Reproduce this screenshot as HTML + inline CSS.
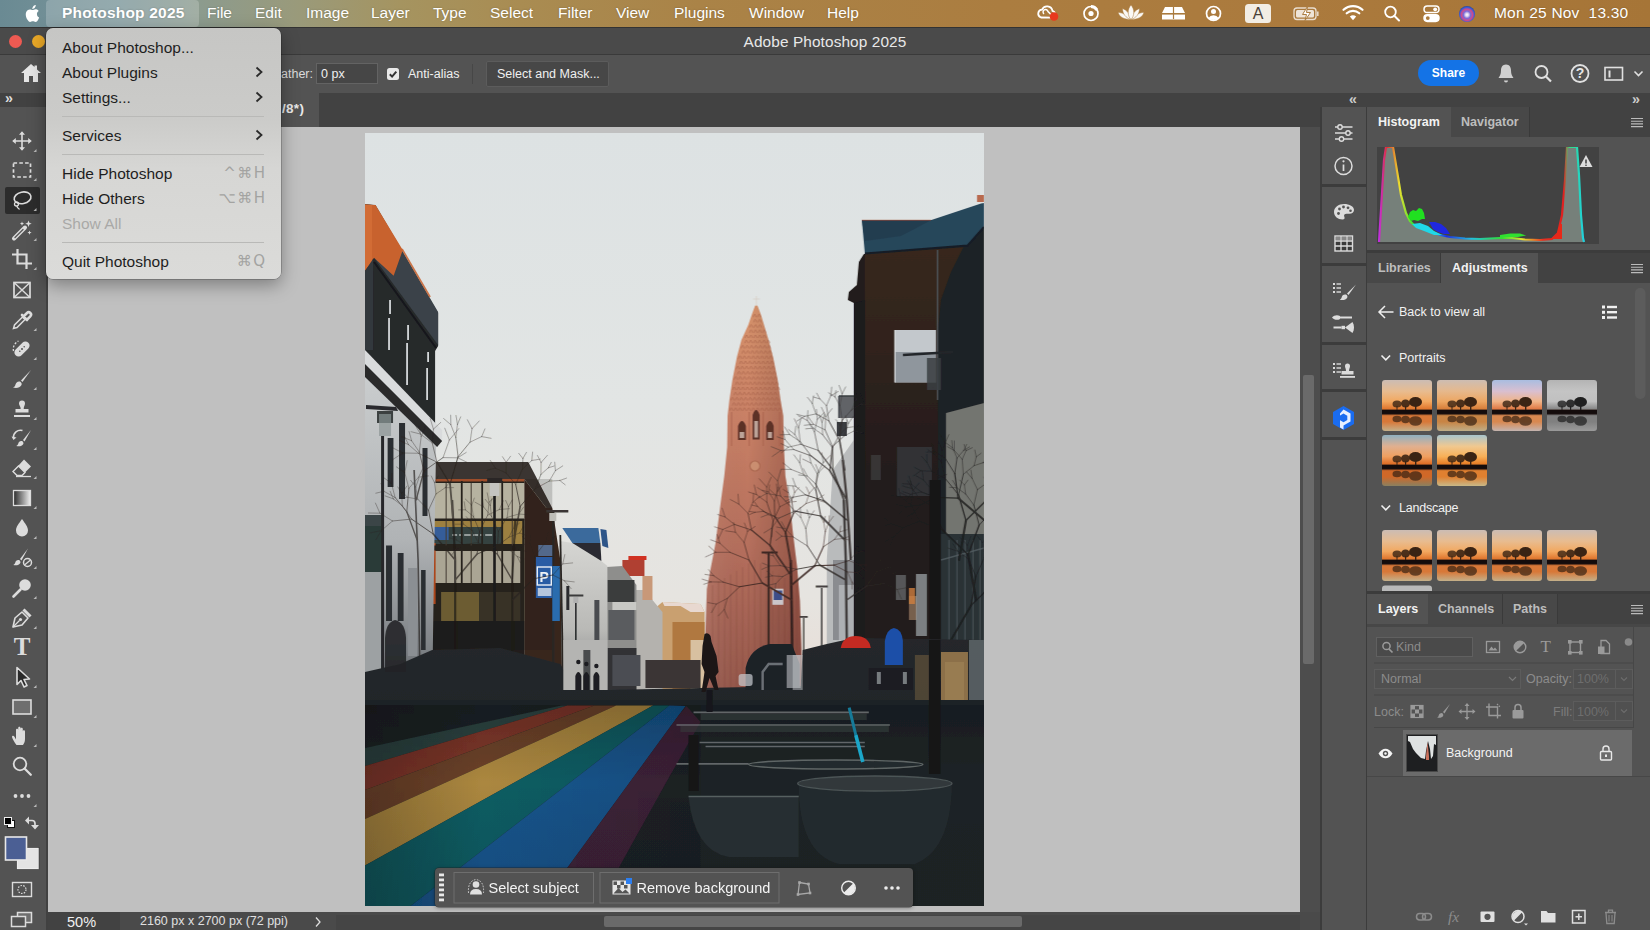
<!DOCTYPE html>
<html lang="en">
<head>
<meta charset="utf-8">
<title>Adobe Photoshop 2025</title>
<style>
*{box-sizing:border-box;margin:0;padding:0}
html,body{width:1650px;height:930px;overflow:hidden;background:#444;font-family:"Liberation Sans","DejaVu Sans",sans-serif;color:#e8e8e8}
.abs{position:absolute}
#menubar{position:absolute;left:0;top:0;width:1650px;height:28px;background:linear-gradient(90deg,#6a8a93 0px,#7b969a 120px,#8c9b8e 200px,#9a9a7a 300px,#a59460 400px,#a98c52 520px,#aa8347 700px,#ab7d40 1000px,#ab7a3d 1300px,#a67537 1650px);}
#menubar .mi{position:absolute;top:0;height:27px;line-height:26px;font-size:15.5px;color:#fff;white-space:nowrap;text-shadow:0 0 2px rgba(0,0,0,.25)}
#titlebar{position:absolute;left:0;top:27px;width:1650px;height:28px;background:#4a4a4a;border-top:1px solid #333;border-bottom:1px solid #3a3a3a}
#titlebar .t{position:absolute;left:0;width:1650px;top:5px;text-align:center;font-size:15.400px;color:#e8e8e8;letter-spacing:.1px}
#optbar{position:absolute;left:0;top:55px;width:1650px;height:38px;background:#535353}
#tabbar{position:absolute;left:0;top:93px;width:1650px;height:34px;background:#424242}
#toolbar{position:absolute;left:0;top:93px;width:48px;height:837px;background:#535353;border-right:2px solid #414141}
#canvas{position:absolute;left:48px;top:127px;width:1252px;height:786px;background:#c0c0c0}
#status{position:absolute;left:46px;top:912px;width:1274px;height:18px;background:#4a4a4a}
#vscroll{position:absolute;left:1300px;top:127px;width:20px;height:786px;background:#4d4d4d}
#rightbg{position:absolute;left:1320px;top:93px;width:330px;height:837px;background:#3c3c3c}

#menubar .mi.b{font-weight:bold;letter-spacing:.2px}
.mhl{position:absolute;left:46px;top:0;width:153px;height:27px;border-radius:4px;background:rgba(255,255,255,.2)}

#dd{position:absolute;left:46px;top:28px;width:234.500px;height:251px;border-radius:7px;background:linear-gradient(180deg,#c6c6c4 0,#cbcbc9 90px,#d6d6d4 140px,#dbdbd9 251px);box-shadow:0 0 0 .5px rgba(0,0,0,.35),0 6px 18px rgba(0,0,0,.35);z-index:50}
#dd .sc{font-family:"DejaVu Sans","Liberation Sans",sans-serif}

#ctb{position:absolute;left:434.500px;top:868px;width:478px;height:39px;background:#535353;border-radius:4px;box-shadow:0 0 0 .5px rgba(30,30,30,.6),0 1px 4px rgba(0,0,0,.35);z-index:4}
.txt{position:absolute;white-space:nowrap}
</style>
</head>
<body>

<div id="menubar">
<div class="mhl"></div>
<svg class="abs" style="left:23px;top:3px" width="17" height="21" viewBox="0 0 17 21"><path fill="#fff" d="M13.9 11.1c0-2.1 1.7-3.1 1.8-3.2-1-1.4-2.500-1.600-3-1.600-1.300-.1-2.500.8-3.100.8-.7 0-1.700-.7-2.700-.7C5.500 6.400 4.200 7.200 3.500 8.400c-1.500 2.500-.4 6.300 1 8.400.7 1 1.500 2.100 2.600 2.100 1.100 0 1.500-.7 2.700-.7 1.300 0 1.600.7 2.700.7 1.100 0 1.900-1 2.500-2 .8-1.200 1.100-2.300 1.100-2.300-.1-.1-2.200-.9-2.200-3.500zM11.800 4.800c.6-.7 1-1.700.9-2.700-.9 0-1.900.6-2.500 1.300-.5.600-1 1.600-.9 2.600 1 .1 1.900-.5 2.500-1.200z"/></svg>
<div class="mi b" style="left:62px">Photoshop 2025</div>
<div class="mi" style="left:207px">File</div>
<div class="mi" style="left:255px">Edit</div>
<div class="mi" style="left:306px">Image</div>
<div class="mi" style="left:371px">Layer</div>
<div class="mi" style="left:433px">Type</div>
<div class="mi" style="left:490px">Select</div>
<div class="mi" style="left:558px">Filter</div>
<div class="mi" style="left:616px">View</div>
<div class="mi" style="left:674px">Plugins</div>
<div class="mi" style="left:749px">Window</div>
<div class="mi" style="left:827px">Help</div>
<div class="mi" style="left:1494px;letter-spacing:.2px">Mon 25 Nov&nbsp; 13.30</div>
<svg class="abs" style="left:1030px;top:0" width="460" height="27" viewBox="1030 0 460 27" fill="none" stroke="#fff" stroke-width="1.6">
<!-- creative cloud -->
<path d="M1041 17.500a4 4 0 0 1 1-7.800 5.500 5.500 0 0 1 10.500 1.200 3.600 3.600 0 0 1 0 6.800z" stroke-width="1.800"/>
<path d="M1044 14a2.500 2.500 0 1 1 4-2.500l3 3" stroke-width="1.500"/>
<circle cx="1054" cy="16.500" r="4.300" fill="#e8391d" stroke="none"/>
<!-- disc -->
<circle cx="1091" cy="13.500" r="7" stroke-width="1.700"/><circle cx="1091" cy="13.500" r="2.600" fill="#fff" stroke="none"/><path d="M1091 6.500a7 7 0 0 1 6 3.500" stroke-width="3"/>
<!-- lotus -->
<g fill="#fff" stroke="#ab7c3f" stroke-width=".5" opacity=".95"><path d="M1131 19.500c-7 0-11.500-2.500-13-7 4 0 8 1.500 13 7z"/><path d="M1131 19.500c7 0 11.500-2.500 13-7-4 0-8 1.500-13 7z"/><path d="M1131 19.500c-5-1.500-8.500-5.500-8.500-11 4 1.500 7.500 5 8.500 11z"/><path d="M1131 19.500c5-1.500 8.500-5.500 8.500-11-4 1.500-7.500 5-8.500 11z"/><path d="M1131 19.500c-3.500-3.500-4-10 0-14.500 4 4.500 3.500 11 0 14.500z"/></g>
<!-- mattress -->
<path d="M1165 7h17l3 6h-23zM1162 14.500h23v5h-23z" fill="#fff" stroke="none"/><path d="M1173.500 7v12" stroke="#ab7c3f" stroke-width="1.200"/><path d="M1162 13.700h23" stroke="#ab7c3f" stroke-width="1"/>
<!-- user -->
<circle cx="1213.500" cy="13.500" r="7" stroke-width="1.700"/><circle cx="1213.500" cy="11.500" r="2.500" fill="#fff" stroke="none"/><path d="M1208.500 18a5.500 4.500 0 0 1 10 0a7 7 0 0 1-10 0z" fill="#fff" stroke="none"/>
<!-- A -->
<rect x="1245" y="4" width="26" height="19" rx="3.500" fill="#f2ede4" stroke="none"/>
<!-- battery -->
<rect x="1294" y="8" width="22" height="11.500" rx="3" stroke-width="1.300" opacity=".75"/><rect x="1296" y="10" width="18" height="7.500" rx="1.500" fill="#fff" stroke="none" opacity=".8"/><path d="M1317.800 11.500v4.500" stroke-width="1.600" opacity=".7"/><path d="M1307.500 6.500l-5 8h4l-1.500 6 5.500-8h-4z" fill="#fff" stroke="#ab7c3f" stroke-width="1"/>
<!-- wifi -->
<path d="M1343.500 9.800a14 14 0 0 1 19 0M1346.700 13.300a9.500 9.500 0 0 1 12.600 0" stroke-width="2.200" stroke-linecap="round"/><path d="M1349.800 16.600a5 5 0 0 1 6.400 0L1353 20.200z" fill="#fff" stroke="none"/>
<!-- search -->
<circle cx="1390.500" cy="12" r="5.300" stroke-width="1.800"/><path d="M1394.500 16l4.500 4.500" stroke-width="2" stroke-linecap="round"/>
<!-- control center -->
<rect x="1424" y="6" width="15" height="6.600" rx="3.300" stroke-width="1.500"/><circle cx="1435.200" cy="9.300" r="1.900" fill="#fff" stroke="none"/><rect x="1424" y="14.800" width="15" height="6.600" rx="3.300" fill="#fff" stroke="#fff" stroke-width="1.500"/><circle cx="1427.800" cy="18.100" r="1.900" fill="#ab7c3f" stroke="none"/>
</svg>
<div class="abs" style="left:1459px;top:5.500px;width:16px;height:16px;border-radius:50%;background:radial-gradient(circle at 50% 55%,#fff 0,#d9d0ee 14%,#7b6ad8 30%,#d04a8a 48%,#3b5bd8 62%,#263a72 80%,#3a4a5a 100%)"></div>
<div class="abs" style="left:1245px;top:4px;width:26px;height:19px;line-height:19.500px;text-align:center;font-size:16px;font-weight:normal;color:#4a4036">A</div>
</div>


<div id="titlebar"><div class="t">Adobe Photoshop 2025</div>
<div class="abs" style="left:8.500px;top:7px;width:13px;height:13px;border-radius:50%;background:#ee5a52"></div>
<div class="abs" style="left:31.500px;top:7px;width:13px;height:13px;border-radius:50%;background:#e9a827"></div>
</div>
<div id="optbar">
<svg class="abs" style="left:20px;top:8px" width="22" height="20" viewBox="0 0 22 20"><path fill="#e6e6e6" d="M11 1L1 10h3v9h5v-6h4v6h5v-9h3l-4-3.600V2.500h-2.500v1.600z"/></svg>
<div class="txt" style="left:281px;top:11.500px;font-size:12.500px;color:#dcdcdc">ather:</div>
<div class="abs" style="left:316px;top:8px;width:62px;height:21px;background:#464646;border:1px solid #636363"></div>
<div class="txt" style="left:321px;top:11.500px;font-size:12.500px;color:#f0f0f0">0 px</div>
<div class="abs" style="left:386.500px;top:12.500px;width:12px;height:12px;border-radius:2.500px;background:#e9e9e9"></div>
<svg class="abs" style="left:386.500px;top:12.500px" width="12" height="12" viewBox="0 0 12 12"><path d="M2.800 6.200l2.300 2.400 4.200-5" fill="none" stroke="#333" stroke-width="2"/></svg>
<div class="txt" style="left:408px;top:11.500px;font-size:12.500px;color:#f0f0f0">Anti-alias</div>
<div class="abs" style="left:472px;top:9px;width:1px;height:20px;background:#474747"></div>
<div class="abs" style="left:486px;top:6px;width:123px;height:26px;background:#474747;border:1px solid #5c5c5c;border-radius:2px"></div>
<div class="txt" style="left:497px;top:11.500px;font-size:12.500px;color:#f0f0f0">Select and Mask...</div>
<div class="abs" style="left:1418px;top:5px;width:61px;height:26px;border-radius:13px;background:#1473e6"></div>
<div class="txt" style="left:1418px;top:10.500px;width:61px;text-align:center;font-size:12px;font-weight:bold;color:#fff">Share</div>
<svg class="abs" style="left:1490px;top:0" width="160" height="38" viewBox="1490 55 160 38" fill="none" stroke="#e0e0e0" stroke-width="1.800">
<path d="M1506 64.500c-3.500 0-5 2.800-5 6 0 4-1.200 5.500-2.500 7.500h15c-1.300-2-2.500-3.500-2.500-7.500 0-3.200-1.500-6-5-6z" fill="#d0d0d0" stroke="none"/><path d="M1504 80.500a2 2 0 0 0 4 0z" fill="#d0d0d0" stroke="none"/>
<circle cx="1541.500" cy="72" r="6"/><path d="M1546 76.500l5 5" stroke-width="2.200"/>
<circle cx="1580" cy="73.500" r="8.500"/>
<rect x="1605" y="67.500" width="17.500" height="12.500" stroke-width="1.600"/><path d="M1609.500 70.500v7" stroke-width="2"/>
<path d="M1634.500 71.500l4 4 4-4" stroke-width="1.600"/>
</svg>
<div class="txt" style="left:1575px;top:10px;width:10px;text-align:center;font-size:14px;font-weight:bold;color:#e6e6e6">?</div>
</div>


<div id="tabbar">
<div class="abs" style="left:46px;top:0;width:273px;height:34px;background:#535353"></div>
<div class="txt" style="left:282px;top:8px;font-size:13.500px;font-weight:bold;color:#e8e8e8;letter-spacing:.3px">/8*)</div>
</div>

<div id="canvas"></div>
<!--PHOTO--><svg class="abs" style="left:365px;top:133px" width="619" height="773" viewBox="365 133 618 773" preserveAspectRatio="none">
<defs>
<linearGradient id="sky" x1="0" y1="0" x2="0" y2="1"><stop offset="0" stop-color="#dde2e3"/><stop offset=".35" stop-color="#e2e5e4"/><stop offset=".6" stop-color="#e6e4e0"/><stop offset=".72" stop-color="#e8ddd6"/><stop offset="1" stop-color="#e8ddd6"/></linearGradient>
<linearGradient id="ch" x1="0" y1="305" x2="0" y2="690" gradientUnits="userSpaceOnUse"><stop offset="0" stop-color="#d8946c"/><stop offset=".3" stop-color="#c98066"/><stop offset=".65" stop-color="#b46e5c"/><stop offset="1" stop-color="#96584c"/></linearGradient>
<linearGradient id="chs" x1="704" y1="0" x2="800" y2="0" gradientUnits="userSpaceOnUse"><stop offset="0" stop-color="#fff" stop-opacity=".08"/><stop offset=".45" stop-color="#000" stop-opacity="0"/><stop offset="1" stop-color="#300" stop-opacity=".22"/></linearGradient>
<linearGradient id="wallL" x1="0" y1="380" x2="0" y2="700" gradientUnits="userSpaceOnUse"><stop offset="0" stop-color="#c9cccd"/><stop offset=".5" stop-color="#b0b3b5"/><stop offset=".85" stop-color="#7c8084"/><stop offset="1" stop-color="#44484c"/></linearGradient>
<linearGradient id="wallW" x1="0" y1="540" x2="0" y2="690" gradientUnits="userSpaceOnUse"><stop offset="0" stop-color="#d6d6d3"/><stop offset=".6" stop-color="#b9b9b6"/><stop offset="1" stop-color="#7e8082"/></linearGradient>
<linearGradient id="dark" x1="0" y1="640" x2="0" y2="906" gradientUnits="userSpaceOnUse"><stop offset="0" stop-color="#25282b"/><stop offset="1" stop-color="#171c20"/></linearGradient>
<linearGradient id="shade" x1="0" y1="700" x2="0" y2="906" gradientUnits="userSpaceOnUse"><stop offset="0" stop-color="#000" stop-opacity=".18"/><stop offset=".4" stop-color="#000" stop-opacity="0"/><stop offset="1" stop-color="#001018" stop-opacity=".12"/></linearGradient>
</defs>
<filter id="soft" x="365" y="133" width="618" height="773" filterUnits="userSpaceOnUse"><feGaussianBlur stdDeviation=".55"/></filter>
<rect x="365" y="133" width="618" height="773" fill="url(#sky)" />
<g filter="url(#soft)">
<polygon points="754.5,305.5 751,315 747.6,325 740.8,340 736.3,357 731.8,380 728.8,400 727,416 726.6,447 723.7,476 719.4,508 715,543 710.6,566 706.3,589 704.3,650 703,692 801,692 800.7,650 799.2,601 796.3,566 792,531 789,502 784.7,476 783.2,447 782.6,416 779.9,400 777,380 772.4,357 767.9,340 763.4,325 760.4,315 756.8,305.5" fill="url(#ch)" />
<polygon points="754.5,305.5 751,315 747.6,325 740.8,340 736.3,357 731.8,380 728.8,400 727,416 726.6,447 723.7,476 719.4,508 715,543 710.6,566 706.3,589 704.3,650 703,692 801,692 800.7,650 799.2,601 796.3,566 792,531 789,502 784.7,476 783.2,447 782.6,416 779.9,400 777,380 772.4,357 767.9,340 763.4,325 760.4,315 756.8,305.5" fill="url(#chs)" />
<path d="M712 585.2 L712 690" fill="none" stroke="#7a4238" stroke-width="0.8" opacity=".35"/>
<path d="M718 581.6 L718 690" fill="none" stroke="#7a4238" stroke-width="0.8" opacity=".35"/>
<path d="M724 578 L724 690" fill="none" stroke="#7a4238" stroke-width="0.8" opacity=".35"/>
<path d="M730 574.4 L730 690" fill="none" stroke="#7a4238" stroke-width="0.8" opacity=".35"/>
<path d="M736 570.8 L736 690" fill="none" stroke="#7a4238" stroke-width="0.8" opacity=".35"/>
<path d="M742 567.2 L742 690" fill="none" stroke="#7a4238" stroke-width="0.8" opacity=".35"/>
<path d="M748 563.6 L748 690" fill="none" stroke="#7a4238" stroke-width="0.8" opacity=".35"/>
<path d="M754 560 L754 690" fill="none" stroke="#7a4238" stroke-width="0.8" opacity=".35"/>
<path d="M760 563.6 L760 690" fill="none" stroke="#7a4238" stroke-width="0.8" opacity=".35"/>
<path d="M766 567.2 L766 690" fill="none" stroke="#7a4238" stroke-width="0.8" opacity=".35"/>
<path d="M772 570.8 L772 690" fill="none" stroke="#7a4238" stroke-width="0.8" opacity=".35"/>
<path d="M778 574.4 L778 690" fill="none" stroke="#7a4238" stroke-width="0.8" opacity=".35"/>
<path d="M784 578 L784 690" fill="none" stroke="#7a4238" stroke-width="0.8" opacity=".35"/>
<path d="M790 581.6 L790 690" fill="none" stroke="#7a4238" stroke-width="0.8" opacity=".35"/>
<path d="M796 585.2 L796 690" fill="none" stroke="#7a4238" stroke-width="0.8" opacity=".35"/>
<path d="M752.6 317.2q1.500-6 3 0" fill="none" stroke="#9c5640" stroke-width=".9" opacity=".5"/>
<path d="M757.0 317.2q1.500-6 3 0" fill="none" stroke="#9c5640" stroke-width=".9" opacity=".5"/>
<path d="M753.0 322.4q1.500-6 3 0" fill="none" stroke="#9c5640" stroke-width=".9" opacity=".5"/>
<path d="M757.4 322.4q1.500-6 3 0" fill="none" stroke="#9c5640" stroke-width=".9" opacity=".5"/>
<path d="M749.0 327.6q1.500-6 3 0" fill="none" stroke="#9c5640" stroke-width=".9" opacity=".5"/>
<path d="M753.4 327.6q1.500-6 3 0" fill="none" stroke="#9c5640" stroke-width=".9" opacity=".5"/>
<path d="M757.8 327.6q1.500-6 3 0" fill="none" stroke="#9c5640" stroke-width=".9" opacity=".5"/>
<path d="M748.9 332.8q1.500-6 3 0" fill="none" stroke="#9c5640" stroke-width=".9" opacity=".5"/>
<path d="M753.3 332.8q1.500-6 3 0" fill="none" stroke="#9c5640" stroke-width=".9" opacity=".5"/>
<path d="M757.7 332.8q1.500-6 3 0" fill="none" stroke="#9c5640" stroke-width=".9" opacity=".5"/>
<path d="M762.1 332.8q1.500-6 3 0" fill="none" stroke="#9c5640" stroke-width=".9" opacity=".5"/>
<path d="M744.4 338.0q1.500-6 3 0" fill="none" stroke="#9c5640" stroke-width=".9" opacity=".5"/>
<path d="M748.8 338.0q1.500-6 3 0" fill="none" stroke="#9c5640" stroke-width=".9" opacity=".5"/>
<path d="M753.2 338.0q1.500-6 3 0" fill="none" stroke="#9c5640" stroke-width=".9" opacity=".5"/>
<path d="M757.6 338.0q1.500-6 3 0" fill="none" stroke="#9c5640" stroke-width=".9" opacity=".5"/>
<path d="M762.0 338.0q1.500-6 3 0" fill="none" stroke="#9c5640" stroke-width=".9" opacity=".5"/>
<path d="M744.2 343.2q1.500-6 3 0" fill="none" stroke="#9c5640" stroke-width=".9" opacity=".5"/>
<path d="M748.6 343.2q1.500-6 3 0" fill="none" stroke="#9c5640" stroke-width=".9" opacity=".5"/>
<path d="M753.0 343.2q1.500-6 3 0" fill="none" stroke="#9c5640" stroke-width=".9" opacity=".5"/>
<path d="M757.4 343.2q1.500-6 3 0" fill="none" stroke="#9c5640" stroke-width=".9" opacity=".5"/>
<path d="M761.8 343.2q1.500-6 3 0" fill="none" stroke="#9c5640" stroke-width=".9" opacity=".5"/>
<path d="M766.2 343.2q1.500-6 3 0" fill="none" stroke="#9c5640" stroke-width=".9" opacity=".5"/>
<path d="M740.6 348.4q1.500-6 3 0" fill="none" stroke="#9c5640" stroke-width=".9" opacity=".5"/>
<path d="M745.0 348.4q1.500-6 3 0" fill="none" stroke="#9c5640" stroke-width=".9" opacity=".5"/>
<path d="M749.4 348.4q1.500-6 3 0" fill="none" stroke="#9c5640" stroke-width=".9" opacity=".5"/>
<path d="M753.8 348.4q1.500-6 3 0" fill="none" stroke="#9c5640" stroke-width=".9" opacity=".5"/>
<path d="M758.2 348.4q1.500-6 3 0" fill="none" stroke="#9c5640" stroke-width=".9" opacity=".5"/>
<path d="M762.6 348.4q1.500-6 3 0" fill="none" stroke="#9c5640" stroke-width=".9" opacity=".5"/>
<path d="M767.0 348.4q1.500-6 3 0" fill="none" stroke="#9c5640" stroke-width=".9" opacity=".5"/>
<path d="M741.4 353.6q1.500-6 3 0" fill="none" stroke="#9c5640" stroke-width=".9" opacity=".5"/>
<path d="M745.8 353.6q1.500-6 3 0" fill="none" stroke="#9c5640" stroke-width=".9" opacity=".5"/>
<path d="M750.2 353.6q1.500-6 3 0" fill="none" stroke="#9c5640" stroke-width=".9" opacity=".5"/>
<path d="M754.6 353.6q1.500-6 3 0" fill="none" stroke="#9c5640" stroke-width=".9" opacity=".5"/>
<path d="M759.0 353.6q1.500-6 3 0" fill="none" stroke="#9c5640" stroke-width=".9" opacity=".5"/>
<path d="M763.4 353.6q1.500-6 3 0" fill="none" stroke="#9c5640" stroke-width=".9" opacity=".5"/>
<path d="M767.8 353.6q1.500-6 3 0" fill="none" stroke="#9c5640" stroke-width=".9" opacity=".5"/>
<path d="M737.9 358.8q1.500-6 3 0" fill="none" stroke="#9c5640" stroke-width=".9" opacity=".5"/>
<path d="M742.3 358.8q1.500-6 3 0" fill="none" stroke="#9c5640" stroke-width=".9" opacity=".5"/>
<path d="M746.7 358.8q1.500-6 3 0" fill="none" stroke="#9c5640" stroke-width=".9" opacity=".5"/>
<path d="M751.1 358.8q1.500-6 3 0" fill="none" stroke="#9c5640" stroke-width=".9" opacity=".5"/>
<path d="M755.5 358.8q1.500-6 3 0" fill="none" stroke="#9c5640" stroke-width=".9" opacity=".5"/>
<path d="M759.9 358.8q1.500-6 3 0" fill="none" stroke="#9c5640" stroke-width=".9" opacity=".5"/>
<path d="M764.3 358.8q1.500-6 3 0" fill="none" stroke="#9c5640" stroke-width=".9" opacity=".5"/>
<path d="M768.7 358.8q1.500-6 3 0" fill="none" stroke="#9c5640" stroke-width=".9" opacity=".5"/>
<path d="M739.0 364.0q1.500-6 3 0" fill="none" stroke="#9c5640" stroke-width=".9" opacity=".5"/>
<path d="M743.4 364.0q1.500-6 3 0" fill="none" stroke="#9c5640" stroke-width=".9" opacity=".5"/>
<path d="M747.8 364.0q1.500-6 3 0" fill="none" stroke="#9c5640" stroke-width=".9" opacity=".5"/>
<path d="M752.2 364.0q1.500-6 3 0" fill="none" stroke="#9c5640" stroke-width=".9" opacity=".5"/>
<path d="M756.6 364.0q1.500-6 3 0" fill="none" stroke="#9c5640" stroke-width=".9" opacity=".5"/>
<path d="M761.0 364.0q1.500-6 3 0" fill="none" stroke="#9c5640" stroke-width=".9" opacity=".5"/>
<path d="M765.4 364.0q1.500-6 3 0" fill="none" stroke="#9c5640" stroke-width=".9" opacity=".5"/>
<path d="M769.8 364.0q1.500-6 3 0" fill="none" stroke="#9c5640" stroke-width=".9" opacity=".5"/>
<path d="M735.7 369.2q1.500-6 3 0" fill="none" stroke="#9c5640" stroke-width=".9" opacity=".5"/>
<path d="M740.1 369.2q1.500-6 3 0" fill="none" stroke="#9c5640" stroke-width=".9" opacity=".5"/>
<path d="M744.5 369.2q1.500-6 3 0" fill="none" stroke="#9c5640" stroke-width=".9" opacity=".5"/>
<path d="M748.9 369.2q1.500-6 3 0" fill="none" stroke="#9c5640" stroke-width=".9" opacity=".5"/>
<path d="M753.3 369.2q1.500-6 3 0" fill="none" stroke="#9c5640" stroke-width=".9" opacity=".5"/>
<path d="M757.7 369.2q1.500-6 3 0" fill="none" stroke="#9c5640" stroke-width=".9" opacity=".5"/>
<path d="M762.1 369.2q1.500-6 3 0" fill="none" stroke="#9c5640" stroke-width=".9" opacity=".5"/>
<path d="M766.5 369.2q1.500-6 3 0" fill="none" stroke="#9c5640" stroke-width=".9" opacity=".5"/>
<path d="M770.9 369.2q1.500-6 3 0" fill="none" stroke="#9c5640" stroke-width=".9" opacity=".5"/>
<path d="M736.9 374.4q1.500-6 3 0" fill="none" stroke="#9c5640" stroke-width=".9" opacity=".5"/>
<path d="M741.3 374.4q1.500-6 3 0" fill="none" stroke="#9c5640" stroke-width=".9" opacity=".5"/>
<path d="M745.7 374.4q1.500-6 3 0" fill="none" stroke="#9c5640" stroke-width=".9" opacity=".5"/>
<path d="M750.1 374.4q1.500-6 3 0" fill="none" stroke="#9c5640" stroke-width=".9" opacity=".5"/>
<path d="M754.5 374.4q1.500-6 3 0" fill="none" stroke="#9c5640" stroke-width=".9" opacity=".5"/>
<path d="M758.9 374.4q1.500-6 3 0" fill="none" stroke="#9c5640" stroke-width=".9" opacity=".5"/>
<path d="M763.3 374.4q1.500-6 3 0" fill="none" stroke="#9c5640" stroke-width=".9" opacity=".5"/>
<path d="M767.7 374.4q1.500-6 3 0" fill="none" stroke="#9c5640" stroke-width=".9" opacity=".5"/>
<path d="M772.1 374.4q1.500-6 3 0" fill="none" stroke="#9c5640" stroke-width=".9" opacity=".5"/>
<path d="M733.7 379.6q1.500-6 3 0" fill="none" stroke="#9c5640" stroke-width=".9" opacity=".5"/>
<path d="M738.1 379.6q1.500-6 3 0" fill="none" stroke="#9c5640" stroke-width=".9" opacity=".5"/>
<path d="M742.5 379.6q1.500-6 3 0" fill="none" stroke="#9c5640" stroke-width=".9" opacity=".5"/>
<path d="M746.9 379.6q1.500-6 3 0" fill="none" stroke="#9c5640" stroke-width=".9" opacity=".5"/>
<path d="M751.3 379.6q1.500-6 3 0" fill="none" stroke="#9c5640" stroke-width=".9" opacity=".5"/>
<path d="M755.7 379.6q1.500-6 3 0" fill="none" stroke="#9c5640" stroke-width=".9" opacity=".5"/>
<path d="M760.1 379.6q1.500-6 3 0" fill="none" stroke="#9c5640" stroke-width=".9" opacity=".5"/>
<path d="M764.5 379.6q1.500-6 3 0" fill="none" stroke="#9c5640" stroke-width=".9" opacity=".5"/>
<path d="M768.9 379.6q1.500-6 3 0" fill="none" stroke="#9c5640" stroke-width=".9" opacity=".5"/>
<path d="M773.3 379.6q1.500-6 3 0" fill="none" stroke="#9c5640" stroke-width=".9" opacity=".5"/>
<path d="M735.0 384.8q1.500-6 3 0" fill="none" stroke="#9c5640" stroke-width=".9" opacity=".5"/>
<path d="M739.4 384.8q1.500-6 3 0" fill="none" stroke="#9c5640" stroke-width=".9" opacity=".5"/>
<path d="M743.8 384.8q1.500-6 3 0" fill="none" stroke="#9c5640" stroke-width=".9" opacity=".5"/>
<path d="M748.2 384.8q1.500-6 3 0" fill="none" stroke="#9c5640" stroke-width=".9" opacity=".5"/>
<path d="M752.6 384.8q1.500-6 3 0" fill="none" stroke="#9c5640" stroke-width=".9" opacity=".5"/>
<path d="M757.0 384.8q1.500-6 3 0" fill="none" stroke="#9c5640" stroke-width=".9" opacity=".5"/>
<path d="M761.4 384.8q1.500-6 3 0" fill="none" stroke="#9c5640" stroke-width=".9" opacity=".5"/>
<path d="M765.8 384.8q1.500-6 3 0" fill="none" stroke="#9c5640" stroke-width=".9" opacity=".5"/>
<path d="M770.2 384.8q1.500-6 3 0" fill="none" stroke="#9c5640" stroke-width=".9" opacity=".5"/>
<path d="M774.6 384.8q1.500-6 3 0" fill="none" stroke="#9c5640" stroke-width=".9" opacity=".5"/>
<path d="M732.0 390.0q1.500-6 3 0" fill="none" stroke="#9c5640" stroke-width=".9" opacity=".5"/>
<path d="M736.4 390.0q1.500-6 3 0" fill="none" stroke="#9c5640" stroke-width=".9" opacity=".5"/>
<path d="M740.8 390.0q1.500-6 3 0" fill="none" stroke="#9c5640" stroke-width=".9" opacity=".5"/>
<path d="M745.2 390.0q1.500-6 3 0" fill="none" stroke="#9c5640" stroke-width=".9" opacity=".5"/>
<path d="M749.6 390.0q1.500-6 3 0" fill="none" stroke="#9c5640" stroke-width=".9" opacity=".5"/>
<path d="M754.0 390.0q1.500-6 3 0" fill="none" stroke="#9c5640" stroke-width=".9" opacity=".5"/>
<path d="M758.4 390.0q1.500-6 3 0" fill="none" stroke="#9c5640" stroke-width=".9" opacity=".5"/>
<path d="M762.8 390.0q1.500-6 3 0" fill="none" stroke="#9c5640" stroke-width=".9" opacity=".5"/>
<path d="M767.2 390.0q1.500-6 3 0" fill="none" stroke="#9c5640" stroke-width=".9" opacity=".5"/>
<path d="M771.6 390.0q1.500-6 3 0" fill="none" stroke="#9c5640" stroke-width=".9" opacity=".5"/>
<path d="M776.0 390.0q1.500-6 3 0" fill="none" stroke="#9c5640" stroke-width=".9" opacity=".5"/>
<path d="M733.4 395.2q1.500-6 3 0" fill="none" stroke="#9c5640" stroke-width=".9" opacity=".5"/>
<path d="M737.8 395.2q1.500-6 3 0" fill="none" stroke="#9c5640" stroke-width=".9" opacity=".5"/>
<path d="M742.2 395.2q1.500-6 3 0" fill="none" stroke="#9c5640" stroke-width=".9" opacity=".5"/>
<path d="M746.6 395.2q1.500-6 3 0" fill="none" stroke="#9c5640" stroke-width=".9" opacity=".5"/>
<path d="M751.0 395.2q1.500-6 3 0" fill="none" stroke="#9c5640" stroke-width=".9" opacity=".5"/>
<path d="M755.4 395.2q1.500-6 3 0" fill="none" stroke="#9c5640" stroke-width=".9" opacity=".5"/>
<path d="M759.8 395.2q1.500-6 3 0" fill="none" stroke="#9c5640" stroke-width=".9" opacity=".5"/>
<path d="M764.2 395.2q1.500-6 3 0" fill="none" stroke="#9c5640" stroke-width=".9" opacity=".5"/>
<path d="M768.6 395.2q1.500-6 3 0" fill="none" stroke="#9c5640" stroke-width=".9" opacity=".5"/>
<path d="M773.0 395.2q1.500-6 3 0" fill="none" stroke="#9c5640" stroke-width=".9" opacity=".5"/>
<path d="M730.4 400.4q1.500-6 3 0" fill="none" stroke="#9c5640" stroke-width=".9" opacity=".5"/>
<path d="M734.8 400.4q1.500-6 3 0" fill="none" stroke="#9c5640" stroke-width=".9" opacity=".5"/>
<path d="M739.2 400.4q1.500-6 3 0" fill="none" stroke="#9c5640" stroke-width=".9" opacity=".5"/>
<path d="M743.6 400.4q1.500-6 3 0" fill="none" stroke="#9c5640" stroke-width=".9" opacity=".5"/>
<path d="M748.0 400.4q1.500-6 3 0" fill="none" stroke="#9c5640" stroke-width=".9" opacity=".5"/>
<path d="M752.4 400.4q1.500-6 3 0" fill="none" stroke="#9c5640" stroke-width=".9" opacity=".5"/>
<path d="M756.8 400.4q1.500-6 3 0" fill="none" stroke="#9c5640" stroke-width=".9" opacity=".5"/>
<path d="M761.2 400.4q1.500-6 3 0" fill="none" stroke="#9c5640" stroke-width=".9" opacity=".5"/>
<path d="M765.6 400.4q1.500-6 3 0" fill="none" stroke="#9c5640" stroke-width=".9" opacity=".5"/>
<path d="M770.0 400.4q1.500-6 3 0" fill="none" stroke="#9c5640" stroke-width=".9" opacity=".5"/>
<path d="M774.4 400.4q1.500-6 3 0" fill="none" stroke="#9c5640" stroke-width=".9" opacity=".5"/>
<path d="M731.9 405.6q1.500-6 3 0" fill="none" stroke="#9c5640" stroke-width=".9" opacity=".5"/>
<path d="M736.3 405.6q1.500-6 3 0" fill="none" stroke="#9c5640" stroke-width=".9" opacity=".5"/>
<path d="M740.7 405.6q1.500-6 3 0" fill="none" stroke="#9c5640" stroke-width=".9" opacity=".5"/>
<path d="M745.1 405.6q1.500-6 3 0" fill="none" stroke="#9c5640" stroke-width=".9" opacity=".5"/>
<path d="M749.5 405.6q1.500-6 3 0" fill="none" stroke="#9c5640" stroke-width=".9" opacity=".5"/>
<path d="M753.9 405.6q1.500-6 3 0" fill="none" stroke="#9c5640" stroke-width=".9" opacity=".5"/>
<path d="M758.3 405.6q1.500-6 3 0" fill="none" stroke="#9c5640" stroke-width=".9" opacity=".5"/>
<path d="M762.7 405.6q1.500-6 3 0" fill="none" stroke="#9c5640" stroke-width=".9" opacity=".5"/>
<path d="M767.1 405.6q1.500-6 3 0" fill="none" stroke="#9c5640" stroke-width=".9" opacity=".5"/>
<path d="M771.5 405.6q1.500-6 3 0" fill="none" stroke="#9c5640" stroke-width=".9" opacity=".5"/>
<path d="M775.9 405.6q1.500-6 3 0" fill="none" stroke="#9c5640" stroke-width=".9" opacity=".5"/>
<path d="M729.1 410.8q1.500-6 3 0" fill="none" stroke="#9c5640" stroke-width=".9" opacity=".5"/>
<path d="M733.5 410.8q1.500-6 3 0" fill="none" stroke="#9c5640" stroke-width=".9" opacity=".5"/>
<path d="M737.9 410.8q1.500-6 3 0" fill="none" stroke="#9c5640" stroke-width=".9" opacity=".5"/>
<path d="M742.3 410.8q1.500-6 3 0" fill="none" stroke="#9c5640" stroke-width=".9" opacity=".5"/>
<path d="M746.7 410.8q1.500-6 3 0" fill="none" stroke="#9c5640" stroke-width=".9" opacity=".5"/>
<path d="M751.1 410.8q1.500-6 3 0" fill="none" stroke="#9c5640" stroke-width=".9" opacity=".5"/>
<path d="M755.5 410.8q1.500-6 3 0" fill="none" stroke="#9c5640" stroke-width=".9" opacity=".5"/>
<path d="M759.9 410.8q1.500-6 3 0" fill="none" stroke="#9c5640" stroke-width=".9" opacity=".5"/>
<path d="M764.3 410.8q1.500-6 3 0" fill="none" stroke="#9c5640" stroke-width=".9" opacity=".5"/>
<path d="M768.7 410.8q1.500-6 3 0" fill="none" stroke="#9c5640" stroke-width=".9" opacity=".5"/>
<path d="M773.1 410.8q1.500-6 3 0" fill="none" stroke="#9c5640" stroke-width=".9" opacity=".5"/>
<path d="M777.5 410.8q1.500-6 3 0" fill="none" stroke="#9c5640" stroke-width=".9" opacity=".5"/>
<path d="M737.4 440V426Q741.3499999999999 416 745.3 426V440z" fill="#5c3028"/>
<rect x="739" y="432" width="4.7" height="6" fill="#e6d4c8" opacity=".7"/>
<path d="M752 439.5V415Q755.5 405 759 415V439.5z" fill="#5c3028"/>
<rect x="753.6" y="421" width="3.8" height="16.5" fill="#e6d4c8" opacity=".7"/>
<path d="M765.6 440V426Q769.3 416 773 426V440z" fill="#5c3028"/>
<rect x="767.2" y="432" width="4.2" height="6" fill="#e6d4c8" opacity=".7"/>
<circle cx="754.300" cy="466" r="5" fill="#d09878" opacity=".7"/><circle cx="754.300" cy="466" r="5" fill="none" stroke="#a8644c" stroke-width="1.200" opacity=".8"/>
<path d="M731 412 L731 446" fill="none" stroke="#a8604c" stroke-width="1.4" opacity=".6"/>
<path d="M748.5 412 L748.5 446" fill="none" stroke="#a8604c" stroke-width="1.4" opacity=".6"/>
<path d="M762.5 412 L762.5 446" fill="none" stroke="#a8604c" stroke-width="1.4" opacity=".6"/>
<path d="M779 412 L779 446" fill="none" stroke="#a8604c" stroke-width="1.4" opacity=".6"/>
<path d="M748 690v-24q8-18 16 0v24z" fill="#8a4e44" opacity=".7"/>
<path d="M755.8 296 L755.8 306" fill="none" stroke="#d8d0c8" stroke-width="1" opacity=".8"/>
<path d="M752.5 299 L759 299" fill="none" stroke="#d8d0c8" stroke-width="1" opacity=".8"/>
<polygon points="662,602 700,604 704,612 704,690 650,690 650,612" fill="#c9a070" />
<polygon points="662,602 700,604 704,612 690,612 680,606 664,606" fill="#e8d8d0" />
<rect x="672" y="622" width="32" height="68" fill="#b07840" />
<rect x="690" y="640" width="14" height="50" fill="#d8c0a0" />
<polygon points="635,590 648,590 652,600 662,612 662,690 635,690" fill="#b4b2ae" />
<rect x="642" y="576" width="10" height="24" fill="#c89878" />
<rect x="622" y="560" width="22" height="16" fill="#b04030" />
<rect x="628" y="556" width="18" height="4" fill="#d03020" />
<polygon points="606,567 622,566 636,585 636,690 606,690" fill="#8e8e8c" />
<rect x="607" y="580" width="27" height="22" fill="#3a3c3e" />
<rect x="608" y="610" width="26" height="30" fill="#5a5c5e" />
<rect x="607" y="648" width="29" height="42" fill="#303236" />
<rect x="612" y="602" width="24" height="8" fill="#c8c8c4" />
<polygon points="560,541 572,543 601,561 607,566 607,692 558,692 558,548" fill="url(#wallW)" />
<polygon points="572,543 600,543 601,561" fill="#2a2c30" />
<polygon points="562,528 598,528 600,543 572,543" fill="#3b6a9c" />
<polygon points="600,529 606,530 608,548 602,546" fill="#2f5488" />
<rect x="566" y="586" width="3" height="24" fill="#2a2c2e" />
<rect x="594" y="600" width="5" height="60" fill="#4a4c50" />
<path d="M575.5 598 L575.5 690" fill="none" stroke="#2a2c2e" stroke-width="1.6" />
<rect x="568" y="594.5" width="15" height="2" fill="#3a3a3a" />
<rect x="573" y="597" width="5" height="6" fill="#b0b0b0" />
<rect x="430" y="479" width="94" height="221" fill="#2c2622" />
<polygon points="430,462 528,462 552,508 546,508 524,479 430,479" fill="#3b3531" />
<polygon points="524,479 546,508 552,508 560,560 562,700 524,700" fill="#38281f" />
<rect x="430" y="479" width="94" height="2.5" fill="#b85a30" />
<rect x="432" y="483" width="92" height="36" fill="#d5d1bd" />
<rect x="432" y="521" width="90" height="23" fill="#b7964c" />
<rect x="432.6" y="527" width="69.4" height="17" fill="#3b4c4a" />
<rect x="432.6" y="527" width="15.9" height="13" fill="#3a6cb4" />
<path d="M452 535 L495 535" fill="none" stroke="#c8d0d0" stroke-width="2.2" stroke-dasharray="5 2 3 2 7 2" opacity=".8"/>
<rect x="432" y="551" width="88" height="32" fill="#c6c2ae" />
<rect x="432" y="583" width="88" height="9" fill="#2a2420" />
<rect x="441" y="592" width="38" height="29" fill="#7d6a3a" />
<rect x="479" y="592" width="41" height="48" fill="#3e372e" />
<rect x="432" y="621" width="92" height="79" fill="#211f1d" />
<rect x="428" y="543" width="7.5" height="61" fill="#c8501e" />
<path d="M461.6 481 L461.6 592" fill="none" stroke="#2a2420" stroke-width="1.8" />
<path d="M482 481 L482 592" fill="none" stroke="#2a2420" stroke-width="1.8" />
<path d="M502 481 L502 592" fill="none" stroke="#2a2420" stroke-width="1.8" />
<path d="M446 483 L446 583" fill="none" stroke="#4a4238" stroke-width="1" />
<path d="M471 483 L471 583" fill="none" stroke="#4a4238" stroke-width="1" />
<path d="M512 483 L512 583" fill="none" stroke="#4a4238" stroke-width="1" />
<path d="M432 519.5 L524 519.5" fill="none" stroke="#2a2420" stroke-width="2.2" />
<path d="M432 548 L522 548" fill="none" stroke="#2a2420" stroke-width="5" />
<rect x="430" y="479" width="122" height="171" fill="#18120e" opacity=".16"/>
<path d="M494.3 495 L494.3 690" fill="none" stroke="#1e1c1c" stroke-width="2.6" />
<rect x="487" y="478" width="15" height="5" fill="#2a2828" />
<rect x="489.5" y="483" width="9.5" height="13" fill="#c4c4c0" />
<path d="M553 512 L553 690" fill="none" stroke="#2a2624" stroke-width="2.2" />
<rect x="546" y="510" width="22" height="2.5" fill="#3a3634" />
<rect x="549" y="513" width="7" height="8" fill="#bdbdb8" />
<path d="M560 535 L563 690" fill="none" stroke="#2a2624" stroke-width="1.8" />
<rect x="535.6" y="557" width="16.4" height="41" fill="#2c5ca4" />
<rect x="537" y="567" width="14" height="18" fill="#2c5ca4" stroke="#e8eef4" stroke-width="1.400"/>
<rect x="537.5" y="588" width="13.5" height="8" fill="#d8e0e8" opacity=".8"/>
<text x="544" y="582" text-anchor="middle" font-family="Liberation Sans, sans-serif" font-size="14" font-weight="bold" fill="#eef2f6">P</text>
<rect x="552" y="566" width="7.5" height="55" fill="#2a6cae" />
<rect x="538" y="545" width="14" height="11" fill="#5a7aa8" opacity=".8"/>
<polygon points="365,376 436,446 434,560 432,700 365,720" fill="url(#wallL)" />
<rect x="399" y="423" width="6" height="76" fill="#2b2d30" />
<rect x="422.4" y="448" width="5" height="68" fill="#2b2d30" />
<rect x="387.6" y="438" width="5.8" height="49" fill="#2b2d30" />
<rect x="397.7" y="553" width="5.8" height="68" fill="#2b2d30" />
<rect x="386" y="545.5" width="6" height="75.5" fill="#2b2d30" />
<rect x="421" y="570" width="4.5" height="80" fill="#2b2d30" />
<rect x="365" y="525" width="17" height="47" fill="#2b3b39" />
<rect x="365" y="515" width="19" height="11" fill="#3a4446" />
<rect x="365" y="572" width="16" height="128" fill="#9da1a3" />
<rect x="408" y="568" width="9" height="88" fill="#8b8f93" />
<polygon points="365,204 373,205 438,313 438,346 435,351 435,425 365,352" fill="#27292b" />
<polygon points="365,204.5 375.5,205 438,312 438,345 374,257.8 365,262" fill="#3a4248" />
<polygon points="365,204.5 375.5,205 402.7,250 393.6,275.8 374,257.8 365,271" fill="#c8622e" />
<polygon points="365,204.5 372,205 372,262 365,270" fill="#d26c36" />
<path d="M402 249 L430 297" fill="none" stroke="#c8622e" stroke-width="1.6" opacity=".85"/>
<polygon points="365,271 373,259 373,350 365,350" fill="#33393e" />
<path d="M390 300 L390 314" fill="none" stroke="#d4d8da" stroke-width="1.8" />
<path d="M389 318 L389 350" fill="none" stroke="#d4d8da" stroke-width="1.8" />
<path d="M408 325 L408 340" fill="none" stroke="#d4d8da" stroke-width="1.8" />
<path d="M407 343 L407 385" fill="none" stroke="#d4d8da" stroke-width="1.8" />
<path d="M428 352 L428 362" fill="none" stroke="#d4d8da" stroke-width="1.8" />
<path d="M427 368 L427 400" fill="none" stroke="#d4d8da" stroke-width="1.8" />
<path d="M374 262 L436 348" fill="none" stroke="#15171a" stroke-width="2" />
<polygon points="365,350 442,430 442,441 365,364" fill="#d9dbdc" />
<polygon points="365,364 442,441 437,447 365,377" fill="#2a2a2c" />
<polygon points="366,405 396,407 398,411 366,409" fill="#2a2c2e" />
<rect x="377" y="411" width="16" height="12" fill="#3a4040" />
<rect x="379" y="414" width="12" height="22" fill="#8a9494" opacity=".7"/>
<path d="M382.5 436 L382.5 700" fill="none" stroke="#26282a" stroke-width="3" />
<polygon points="832,470 853,440 853,692 826,692 826,560" fill="#b9bbbc" />
<rect x="838" y="396" width="15" height="22" fill="#4a4e52" opacity=".85"/>
<path d="M838 396 L853 396" fill="none" stroke="#3a3e42" stroke-width="1.5" />
<rect x="836" y="422" width="10" height="14" fill="#3a3c40" />
<rect x="832" y="560" width="21" height="80" fill="#8a8c90" />
<rect x="838" y="585" width="15" height="75" fill="#c4c8cc" opacity=".6"/>
<linearGradient id="rbw" x1="0" y1="254" x2="0" y2="470" gradientUnits="userSpaceOnUse"><stop offset="0" stop-color="#37281e"/><stop offset=".45" stop-color="#30231c"/><stop offset="1" stop-color="#241c1a"/></linearGradient>
<linearGradient id="rgw" x1="0" y1="400" x2="0" y2="650" gradientUnits="userSpaceOnUse"><stop offset="0" stop-color="#9a9d9c"/><stop offset=".35" stop-color="#7a7c7b"/><stop offset=".6" stop-color="#5c6062"/><stop offset="1" stop-color="#4a5054"/></linearGradient>
<polygon points="863,254 858,262 856,285 848,292 847,300 853,303 853,692 983,692 983,228 963,246" fill="#221d1c" />
<polygon points="864,254 963,246 950,272 940,300 937,330 937,470 864,470" fill="url(#rbw)" />
<polygon points="853,303 864,300 864,692 853,692" fill="#1a1a1c" />
<polygon points="950,272 963,246 983,228 983,692 937,692 937,330 940,300" fill="#1e2226" />
<polygon points="861,220 930.4,220 980,203.5 983,203 983,227 966.5,245.7 864,253.5" fill="#27465a" />
<polygon points="861,220 930.4,220 900,236 864,241" fill="#233e50" />
<path d="M864 253.5 L966.5 245.7 L983 227" fill="none" stroke="#161e26" stroke-width="2.2" />
<path d="M861 220.3 L930 220.3" fill="none" stroke="#a04838" stroke-width="1" opacity=".7"/>
<rect x="976" y="195" width="7" height="7" fill="#b86a50" />
<path d="M936.5 250 L936.5 400" fill="none" stroke="#4c5256" stroke-width="1.6" />
<rect x="894" y="330" width="41" height="52.5" fill="#c3c8cc" />
<rect x="894" y="352" width="41" height="30.5" fill="#7e868e" opacity=".75"/>
<path d="M902 355 L952 352" fill="none" stroke="#24262a" stroke-width="2.4" />
<rect x="926" y="358" width="14" height="32" fill="#3a3e42" opacity=".85"/>
<path d="M894 330 L894 382.5" fill="none" stroke="#e0e4e6" stroke-width="1.2" />
<polygon points="945,413 983,403 983,534 945,534" fill="#73746f" />
<polygon points="940,534 983,534 983,700 940,700" fill="#2a3236" />
<path d="M948 540 L948 690" fill="none" stroke="#4a5458" stroke-width="1.4" opacity=".8"/>
<path d="M956 540 L956 690" fill="none" stroke="#4a5458" stroke-width="1.4" opacity=".8"/>
<path d="M964 540 L964 690" fill="none" stroke="#4a5458" stroke-width="1.4" opacity=".8"/>
<path d="M972 540 L972 690" fill="none" stroke="#4a5458" stroke-width="1.4" opacity=".8"/>
<path d="M979 540 L979 690" fill="none" stroke="#4a5458" stroke-width="1.4" opacity=".8"/>
<path d="M940 560 L983 548" fill="none" stroke="#5a6468" stroke-width="1.5" opacity=".7"/>
<rect x="896" y="447" width="35" height="49" fill="#303236" />
<rect x="870" y="455" width="10" height="25" fill="#444446" opacity=".6"/>
<rect x="895" y="575" width="10" height="25" fill="#7a7e80" opacity=".6"/>
<rect x="908" y="596" width="8" height="24" fill="#b09070" opacity=".6"/>
<path d="M838 396 L838 418" fill="none" stroke="#3a3e42" stroke-width="1.2" />
<g opacity=".85">
<path d="M768 553 L768 690" fill="none" stroke="#2a1e1c" stroke-width="2" />
<path d="M761 552.5 L777 552.5" fill="none" stroke="#2a1e1c" stroke-width="2" />
<rect x="771.6" y="588.7" width="11.1" height="16.1" fill="#d4dae0" />
<rect x="773" y="590.5" width="8.5" height="9.5" fill="#2c4c94" />
<path d="M821 588 L821 690" fill="none" stroke="#2a2624" stroke-width="1.6" />
<rect x="815" y="585.5" width="12" height="2" fill="#2a2624" />
<path d="M803 618 L803 690" fill="none" stroke="#2a2624" stroke-width="1.4" />
<rect x="799" y="616" width="8" height="1.8" fill="#2a2624" />
<path d="M792 690 L791 610 L790 560" fill="none" stroke="#2a1c1a" stroke-width="2.6" />
<path d="M790 562 L784.8 532.5" fill="none" stroke="#3a2622" stroke-width="2" stroke-linecap="round"/>
<path d="M784.8 532.5 L774 516.3" fill="none" stroke="#3a2622" stroke-width="1.24" stroke-linecap="round"/>
<path d="M774 516.3 L762.8 511.4" fill="none" stroke="#3a2622" stroke-width="0.7688" stroke-linecap="round"/>
<path d="M762.8 511.4 L754.4 512.3" fill="none" stroke="#3a2622" stroke-width="0.5" stroke-linecap="round"/>
<path d="M754.4 512.3 L748.8 514.6" fill="none" stroke="#3a2622" stroke-width="0.5" stroke-linecap="round"/>
<path d="M754.4 512.3 L748.6 511.4" fill="none" stroke="#3a2622" stroke-width="0.5" stroke-linecap="round"/>
<path d="M762.8 511.4 L756.8 506.4" fill="none" stroke="#3a2622" stroke-width="0.5" stroke-linecap="round"/>
<path d="M756.8 506.4 L750.9 505" fill="none" stroke="#3a2622" stroke-width="0.5" stroke-linecap="round"/>
<path d="M756.8 506.4 L754 502" fill="none" stroke="#3a2622" stroke-width="0.5" stroke-linecap="round"/>
<path d="M774 516.3 L773.7 500.9" fill="none" stroke="#3a2622" stroke-width="0.7688" stroke-linecap="round"/>
<path d="M773.7 500.9 L768 492" fill="none" stroke="#3a2622" stroke-width="0.5" stroke-linecap="round"/>
<path d="M768 492 L761.6 490.2" fill="none" stroke="#3a2622" stroke-width="0.5" stroke-linecap="round"/>
<path d="M768 492 L768.9 484.9" fill="none" stroke="#3a2622" stroke-width="0.5" stroke-linecap="round"/>
<path d="M773.7 500.9 L776.6 491.5" fill="none" stroke="#3a2622" stroke-width="0.5" stroke-linecap="round"/>
<path d="M776.6 491.5 L775.8 484" fill="none" stroke="#3a2622" stroke-width="0.5" stroke-linecap="round"/>
<path d="M776.6 491.5 L780.9 485.8" fill="none" stroke="#3a2622" stroke-width="0.5" stroke-linecap="round"/>
<path d="M784.8 532.5 L792.7 513.4" fill="none" stroke="#3a2622" stroke-width="1.24" stroke-linecap="round"/>
<path d="M792.7 513.4 L791 500.5" fill="none" stroke="#3a2622" stroke-width="0.7688" stroke-linecap="round"/>
<path d="M791 500.5 L787.6 492.7" fill="none" stroke="#3a2622" stroke-width="0.5" stroke-linecap="round"/>
<path d="M787.6 492.7 L782.6 489.5" fill="none" stroke="#3a2622" stroke-width="0.5" stroke-linecap="round"/>
<path d="M787.6 492.7 L787.6 486.5" fill="none" stroke="#3a2622" stroke-width="0.5" stroke-linecap="round"/>
<path d="M791 500.5 L794 492.3" fill="none" stroke="#3a2622" stroke-width="0.5" stroke-linecap="round"/>
<path d="M794 492.3 L792.1 486" fill="none" stroke="#3a2622" stroke-width="0.5" stroke-linecap="round"/>
<path d="M794 492.3 L798.2 487.5" fill="none" stroke="#3a2622" stroke-width="0.5" stroke-linecap="round"/>
<path d="M792.7 513.4 L805.3 503.6" fill="none" stroke="#3a2622" stroke-width="0.7688" stroke-linecap="round"/>
<path d="M805.3 503.6 L808.5 493.3" fill="none" stroke="#3a2622" stroke-width="0.5" stroke-linecap="round"/>
<path d="M808.5 493.3 L805.5 487" fill="none" stroke="#3a2622" stroke-width="0.5" stroke-linecap="round"/>
<path d="M808.5 493.3 L814 487.3" fill="none" stroke="#3a2622" stroke-width="0.5" stroke-linecap="round"/>
<path d="M805.3 503.6 L816.1 499.8" fill="none" stroke="#3a2622" stroke-width="0.5" stroke-linecap="round"/>
<path d="M816.1 499.8 L823 495" fill="none" stroke="#3a2622" stroke-width="0.5" stroke-linecap="round"/>
<path d="M816.1 499.8 L823.9 502.2" fill="none" stroke="#3a2622" stroke-width="0.5" stroke-linecap="round"/>
<path d="M791 600 L761.6 583" fill="none" stroke="#3a2622" stroke-width="1.8" stroke-linecap="round"/>
<path d="M761.6 583 L738.9 586.8" fill="none" stroke="#3a2622" stroke-width="1.116" stroke-linecap="round"/>
<path d="M738.9 586.8 L726.8 598.3" fill="none" stroke="#3a2622" stroke-width="0.69192" stroke-linecap="round"/>
<path d="M726.8 598.3 L723.6 609.6" fill="none" stroke="#3a2622" stroke-width="0.5" stroke-linecap="round"/>
<path d="M723.6 609.6 L727.3 618.2" fill="none" stroke="#3a2622" stroke-width="0.5" stroke-linecap="round"/>
<path d="M723.6 609.6 L717.7 615.9" fill="none" stroke="#3a2622" stroke-width="0.5" stroke-linecap="round"/>
<path d="M726.8 598.3 L715.7 604.1" fill="none" stroke="#3a2622" stroke-width="0.5" stroke-linecap="round"/>
<path d="M715.7 604.1 L710.8 612.7" fill="none" stroke="#3a2622" stroke-width="0.5" stroke-linecap="round"/>
<path d="M715.7 604.1 L707.5 602.6" fill="none" stroke="#3a2622" stroke-width="0.5" stroke-linecap="round"/>
<path d="M738.9 586.8 L722.5 582.1" fill="none" stroke="#3a2622" stroke-width="0.69192" stroke-linecap="round"/>
<path d="M722.5 582.1 L710.5 581.9" fill="none" stroke="#3a2622" stroke-width="0.5" stroke-linecap="round"/>
<path d="M710.5 581.9 L703.2 584.3" fill="none" stroke="#3a2622" stroke-width="0.5" stroke-linecap="round"/>
<path d="M710.5 581.9 L701.8 579.2" fill="none" stroke="#3a2622" stroke-width="0.5" stroke-linecap="round"/>
<path d="M722.5 582.1 L713.1 575.7" fill="none" stroke="#3a2622" stroke-width="0.5" stroke-linecap="round"/>
<path d="M713.1 575.7 L704.4 574.4" fill="none" stroke="#3a2622" stroke-width="0.5" stroke-linecap="round"/>
<path d="M713.1 575.7 L708.1 569.6" fill="none" stroke="#3a2622" stroke-width="0.5" stroke-linecap="round"/>
<path d="M761.6 583 L748.3 560" fill="none" stroke="#3a2622" stroke-width="1.116" stroke-linecap="round"/>
<path d="M748.3 560 L729.3 552.3" fill="none" stroke="#3a2622" stroke-width="0.69192" stroke-linecap="round"/>
<path d="M729.3 552.3 L715.1 552.3" fill="none" stroke="#3a2622" stroke-width="0.5" stroke-linecap="round"/>
<path d="M715.1 552.3 L705 556.9" fill="none" stroke="#3a2622" stroke-width="0.5" stroke-linecap="round"/>
<path d="M715.1 552.3 L708.2 546.1" fill="none" stroke="#3a2622" stroke-width="0.5" stroke-linecap="round"/>
<path d="M729.3 552.3 L719.2 543.2" fill="none" stroke="#3a2622" stroke-width="0.5" stroke-linecap="round"/>
<path d="M719.2 543.2 L710.2 539.8" fill="none" stroke="#3a2622" stroke-width="0.5" stroke-linecap="round"/>
<path d="M719.2 543.2 L716.5 534.6" fill="none" stroke="#3a2622" stroke-width="0.5" stroke-linecap="round"/>
<path d="M748.3 560 L743.4 542.3" fill="none" stroke="#3a2622" stroke-width="0.69192" stroke-linecap="round"/>
<path d="M743.4 542.3 L734.8 532.2" fill="none" stroke="#3a2622" stroke-width="0.5" stroke-linecap="round"/>
<path d="M734.8 532.2 L725 530.8" fill="none" stroke="#3a2622" stroke-width="0.5" stroke-linecap="round"/>
<path d="M734.8 532.2 L732.9 522.6" fill="none" stroke="#3a2622" stroke-width="0.5" stroke-linecap="round"/>
<path d="M743.4 542.3 L747 531.3" fill="none" stroke="#3a2622" stroke-width="0.5" stroke-linecap="round"/>
<path d="M747 531.3 L743.8 523.1" fill="none" stroke="#3a2622" stroke-width="0.5" stroke-linecap="round"/>
<path d="M747 531.3 L754.5 526.5" fill="none" stroke="#3a2622" stroke-width="0.5" stroke-linecap="round"/>
<path d="M791 585 L814 565.7" fill="none" stroke="#3a2622" stroke-width="1.8" stroke-linecap="round"/>
<path d="M814 565.7 L822.6 546.8" fill="none" stroke="#3a2622" stroke-width="1.116" stroke-linecap="round"/>
<path d="M822.6 546.8 L824.5 531.7" fill="none" stroke="#3a2622" stroke-width="0.69192" stroke-linecap="round"/>
<path d="M824.5 531.7 L823 522.2" fill="none" stroke="#3a2622" stroke-width="0.5" stroke-linecap="round"/>
<path d="M823 522.2 L819.9 516.7" fill="none" stroke="#3a2622" stroke-width="0.5" stroke-linecap="round"/>
<path d="M823 522.2 L824.5 516.3" fill="none" stroke="#3a2622" stroke-width="0.5" stroke-linecap="round"/>
<path d="M824.5 531.7 L828.1 522.5" fill="none" stroke="#3a2622" stroke-width="0.5" stroke-linecap="round"/>
<path d="M828.1 522.5 L828.6 515.8" fill="none" stroke="#3a2622" stroke-width="0.5" stroke-linecap="round"/>
<path d="M828.1 522.5 L832.6 516.4" fill="none" stroke="#3a2622" stroke-width="0.5" stroke-linecap="round"/>
<path d="M822.6 546.8 L833.7 539.4" fill="none" stroke="#3a2622" stroke-width="0.69192" stroke-linecap="round"/>
<path d="M833.7 539.4 L839 531.9" fill="none" stroke="#3a2622" stroke-width="0.5" stroke-linecap="round"/>
<path d="M839 531.9 L840 526.1" fill="none" stroke="#3a2622" stroke-width="0.5" stroke-linecap="round"/>
<path d="M839 531.9 L846 529.8" fill="none" stroke="#3a2622" stroke-width="0.5" stroke-linecap="round"/>
<path d="M833.7 539.4 L843.2 538.4" fill="none" stroke="#3a2622" stroke-width="0.5" stroke-linecap="round"/>
<path d="M843.2 538.4 L848.8 536.1" fill="none" stroke="#3a2622" stroke-width="0.5" stroke-linecap="round"/>
<path d="M843.2 538.4 L849.2 540.4" fill="none" stroke="#3a2622" stroke-width="0.5" stroke-linecap="round"/>
<path d="M814 565.7 L833.4 565.1" fill="none" stroke="#3a2622" stroke-width="1.116" stroke-linecap="round"/>
<path d="M833.4 565.1 L848.2 560.6" fill="none" stroke="#3a2622" stroke-width="0.69192" stroke-linecap="round"/>
<path d="M848.2 560.6 L855.1 553.4" fill="none" stroke="#3a2622" stroke-width="0.5" stroke-linecap="round"/>
<path d="M855.1 553.4 L856.5 547.3" fill="none" stroke="#3a2622" stroke-width="0.5" stroke-linecap="round"/>
<path d="M855.1 553.4 L862.6 551.1" fill="none" stroke="#3a2622" stroke-width="0.5" stroke-linecap="round"/>
<path d="M848.2 560.6 L858.8 564.9" fill="none" stroke="#3a2622" stroke-width="0.5" stroke-linecap="round"/>
<path d="M858.8 564.9 L866.7 565" fill="none" stroke="#3a2622" stroke-width="0.5" stroke-linecap="round"/>
<path d="M858.8 564.9 L865.4 570.7" fill="none" stroke="#3a2622" stroke-width="0.5" stroke-linecap="round"/>
<path d="M833.4 565.1 L846.6 571.9" fill="none" stroke="#3a2622" stroke-width="0.69192" stroke-linecap="round"/>
<path d="M846.6 571.9 L856.3 572.6" fill="none" stroke="#3a2622" stroke-width="0.5" stroke-linecap="round"/>
<path d="M856.3 572.6 L862.8 568.3" fill="none" stroke="#3a2622" stroke-width="0.5" stroke-linecap="round"/>
<path d="M856.3 572.6 L861.8 577.7" fill="none" stroke="#3a2622" stroke-width="0.5" stroke-linecap="round"/>
<path d="M846.6 571.9 L851.2 582.1" fill="none" stroke="#3a2622" stroke-width="0.5" stroke-linecap="round"/>
<path d="M851.2 582.1 L856.9 587.7" fill="none" stroke="#3a2622" stroke-width="0.5" stroke-linecap="round"/>
<path d="M851.2 582.1 L851.2 589" fill="none" stroke="#3a2622" stroke-width="0.5" stroke-linecap="round"/>
<path d="M790 575 L769.4 545.5" fill="none" stroke="#3a2622" stroke-width="1.8" stroke-linecap="round"/>
<path d="M769.4 545.5 L750.8 530" fill="none" stroke="#3a2622" stroke-width="1.116" stroke-linecap="round"/>
<path d="M750.8 530 L733.8 524.4" fill="none" stroke="#3a2622" stroke-width="0.69192" stroke-linecap="round"/>
<path d="M733.8 524.4 L722.2 529.5" fill="none" stroke="#3a2622" stroke-width="0.5" stroke-linecap="round"/>
<path d="M722.2 529.5 L717.9 538.6" fill="none" stroke="#3a2622" stroke-width="0.5" stroke-linecap="round"/>
<path d="M722.2 529.5 L714 526.8" fill="none" stroke="#3a2622" stroke-width="0.5" stroke-linecap="round"/>
<path d="M733.8 524.4 L724.5 517" fill="none" stroke="#3a2622" stroke-width="0.5" stroke-linecap="round"/>
<path d="M724.5 517 L717.1 514.5" fill="none" stroke="#3a2622" stroke-width="0.5" stroke-linecap="round"/>
<path d="M724.5 517 L721.5 508.2" fill="none" stroke="#3a2622" stroke-width="0.5" stroke-linecap="round"/>
<path d="M750.8 530 L747.4 513.4" fill="none" stroke="#3a2622" stroke-width="0.69192" stroke-linecap="round"/>
<path d="M747.4 513.4 L738.2 504.1" fill="none" stroke="#3a2622" stroke-width="0.5" stroke-linecap="round"/>
<path d="M738.2 504.1 L729.7 499.5" fill="none" stroke="#3a2622" stroke-width="0.5" stroke-linecap="round"/>
<path d="M738.2 504.1 L737.4 494.2" fill="none" stroke="#3a2622" stroke-width="0.5" stroke-linecap="round"/>
<path d="M747.4 513.4 L752.3 502.4" fill="none" stroke="#3a2622" stroke-width="0.5" stroke-linecap="round"/>
<path d="M752.3 502.4 L753 493.2" fill="none" stroke="#3a2622" stroke-width="0.5" stroke-linecap="round"/>
<path d="M752.3 502.4 L759.1 496.2" fill="none" stroke="#3a2622" stroke-width="0.5" stroke-linecap="round"/>
<path d="M769.4 545.5 L772.5 520.8" fill="none" stroke="#3a2622" stroke-width="1.116" stroke-linecap="round"/>
<path d="M772.5 520.8 L766.2 502.2" fill="none" stroke="#3a2622" stroke-width="0.69192" stroke-linecap="round"/>
<path d="M766.2 502.2 L755.8 494.6" fill="none" stroke="#3a2622" stroke-width="0.5" stroke-linecap="round"/>
<path d="M755.8 494.6 L748 492" fill="none" stroke="#3a2622" stroke-width="0.5" stroke-linecap="round"/>
<path d="M755.8 494.6 L753.6 485.1" fill="none" stroke="#3a2622" stroke-width="0.5" stroke-linecap="round"/>
<path d="M766.2 502.2 L766.1 487.1" fill="none" stroke="#3a2622" stroke-width="0.5" stroke-linecap="round"/>
<path d="M766.1 487.1 L758.6 478.8" fill="none" stroke="#3a2622" stroke-width="0.5" stroke-linecap="round"/>
<path d="M766.1 487.1 L770.6 477.1" fill="none" stroke="#3a2622" stroke-width="0.5" stroke-linecap="round"/>
<path d="M772.5 520.8 L779.1 506.8" fill="none" stroke="#3a2622" stroke-width="0.69192" stroke-linecap="round"/>
<path d="M779.1 506.8 L775.7 495.9" fill="none" stroke="#3a2622" stroke-width="0.5" stroke-linecap="round"/>
<path d="M775.7 495.9 L769.2 489.7" fill="none" stroke="#3a2622" stroke-width="0.5" stroke-linecap="round"/>
<path d="M775.7 495.9 L777.3 487.1" fill="none" stroke="#3a2622" stroke-width="0.5" stroke-linecap="round"/>
<path d="M779.1 506.8 L788.2 502.2" fill="none" stroke="#3a2622" stroke-width="0.5" stroke-linecap="round"/>
<path d="M788.2 502.2 L792.7 497.1" fill="none" stroke="#3a2622" stroke-width="0.5" stroke-linecap="round"/>
<path d="M788.2 502.2 L795.5 501.5" fill="none" stroke="#3a2622" stroke-width="0.5" stroke-linecap="round"/>
<path d="M850 560 L846 500 L842 460" fill="none" stroke="#2a2220" stroke-width="2.2" />
<path d="M846 500 L829 470.6" fill="none" stroke="#35302e" stroke-width="1.8" stroke-linecap="round"/>
<path d="M829 470.6 L810.4 455.9" fill="none" stroke="#35302e" stroke-width="1.116" stroke-linecap="round"/>
<path d="M810.4 455.9 L793 449.5" fill="none" stroke="#35302e" stroke-width="0.69192" stroke-linecap="round"/>
<path d="M793 449.5 L780.1 450.5" fill="none" stroke="#35302e" stroke-width="0.5" stroke-linecap="round"/>
<path d="M780.1 450.5 L771.7 456.4" fill="none" stroke="#35302e" stroke-width="0.5" stroke-linecap="round"/>
<path d="M780.1 450.5 L770.6 446.7" fill="none" stroke="#35302e" stroke-width="0.5" stroke-linecap="round"/>
<path d="M793 449.5 L784.3 439.5" fill="none" stroke="#35302e" stroke-width="0.5" stroke-linecap="round"/>
<path d="M784.3 439.5 L776.5 436.8" fill="none" stroke="#35302e" stroke-width="0.5" stroke-linecap="round"/>
<path d="M784.3 439.5 L782.2 431.1" fill="none" stroke="#35302e" stroke-width="0.5" stroke-linecap="round"/>
<path d="M810.4 455.9 L799.5 441.6" fill="none" stroke="#35302e" stroke-width="0.69192" stroke-linecap="round"/>
<path d="M799.5 441.6 L788.9 434.5" fill="none" stroke="#35302e" stroke-width="0.5" stroke-linecap="round"/>
<path d="M788.9 434.5 L779.7 434.8" fill="none" stroke="#35302e" stroke-width="0.5" stroke-linecap="round"/>
<path d="M788.9 434.5 L783.9 426.9" fill="none" stroke="#35302e" stroke-width="0.5" stroke-linecap="round"/>
<path d="M799.5 441.6 L797.8 427.9" fill="none" stroke="#35302e" stroke-width="0.5" stroke-linecap="round"/>
<path d="M797.8 427.9 L793.7 418.9" fill="none" stroke="#35302e" stroke-width="0.5" stroke-linecap="round"/>
<path d="M797.8 427.9 L800.1 419" fill="none" stroke="#35302e" stroke-width="0.5" stroke-linecap="round"/>
<path d="M829 470.6 L831.7 446.5" fill="none" stroke="#35302e" stroke-width="1.116" stroke-linecap="round"/>
<path d="M831.7 446.5 L824.3 429.8" fill="none" stroke="#35302e" stroke-width="0.69192" stroke-linecap="round"/>
<path d="M824.3 429.8 L812.7 424.3" fill="none" stroke="#35302e" stroke-width="0.5" stroke-linecap="round"/>
<path d="M812.7 424.3 L803.7 425.3" fill="none" stroke="#35302e" stroke-width="0.5" stroke-linecap="round"/>
<path d="M812.7 424.3 L807.2 416.5" fill="none" stroke="#35302e" stroke-width="0.5" stroke-linecap="round"/>
<path d="M824.3 429.8 L825 416.7" fill="none" stroke="#35302e" stroke-width="0.5" stroke-linecap="round"/>
<path d="M825 416.7 L820.7 407.3" fill="none" stroke="#35302e" stroke-width="0.5" stroke-linecap="round"/>
<path d="M825 416.7 L831.3 408.6" fill="none" stroke="#35302e" stroke-width="0.5" stroke-linecap="round"/>
<path d="M831.7 446.5 L843.7 435.7" fill="none" stroke="#35302e" stroke-width="0.69192" stroke-linecap="round"/>
<path d="M843.7 435.7 L847.5 423.5" fill="none" stroke="#35302e" stroke-width="0.5" stroke-linecap="round"/>
<path d="M847.5 423.5 L844.5 415.9" fill="none" stroke="#35302e" stroke-width="0.5" stroke-linecap="round"/>
<path d="M847.5 423.5 L852.6 416.2" fill="none" stroke="#35302e" stroke-width="0.5" stroke-linecap="round"/>
<path d="M843.7 435.7 L853.3 431" fill="none" stroke="#35302e" stroke-width="0.5" stroke-linecap="round"/>
<path d="M853.3 431 L859.1 425.7" fill="none" stroke="#35302e" stroke-width="0.5" stroke-linecap="round"/>
<path d="M853.3 431 L861.5 432.6" fill="none" stroke="#35302e" stroke-width="0.5" stroke-linecap="round"/>
<path d="M844 470 L838.8 440.5" fill="none" stroke="#35302e" stroke-width="1.6" stroke-linecap="round"/>
<path d="M838.8 440.5 L828 420.8" fill="none" stroke="#35302e" stroke-width="0.992" stroke-linecap="round"/>
<path d="M828 420.8 L815.2 413.9" fill="none" stroke="#35302e" stroke-width="0.61504" stroke-linecap="round"/>
<path d="M815.2 413.9 L803.9 416.3" fill="none" stroke="#35302e" stroke-width="0.5" stroke-linecap="round"/>
<path d="M803.9 416.3 L796.2 421.1" fill="none" stroke="#35302e" stroke-width="0.5" stroke-linecap="round"/>
<path d="M803.9 416.3 L796 414.3" fill="none" stroke="#35302e" stroke-width="0.5" stroke-linecap="round"/>
<path d="M815.2 413.9 L811.5 403.4" fill="none" stroke="#35302e" stroke-width="0.5" stroke-linecap="round"/>
<path d="M811.5 403.4 L806.7 397.3" fill="none" stroke="#35302e" stroke-width="0.5" stroke-linecap="round"/>
<path d="M811.5 403.4 L812.8 395.9" fill="none" stroke="#35302e" stroke-width="0.5" stroke-linecap="round"/>
<path d="M828 420.8 L825.7 405.7" fill="none" stroke="#35302e" stroke-width="0.61504" stroke-linecap="round"/>
<path d="M825.7 405.7 L819.1 398.9" fill="none" stroke="#35302e" stroke-width="0.5" stroke-linecap="round"/>
<path d="M819.1 398.9 L812.7 397" fill="none" stroke="#35302e" stroke-width="0.5" stroke-linecap="round"/>
<path d="M819.1 398.9 L816 393.2" fill="none" stroke="#35302e" stroke-width="0.5" stroke-linecap="round"/>
<path d="M825.7 405.7 L830 395.8" fill="none" stroke="#35302e" stroke-width="0.5" stroke-linecap="round"/>
<path d="M830 395.8 L831 387.2" fill="none" stroke="#35302e" stroke-width="0.5" stroke-linecap="round"/>
<path d="M830 395.8 L837.4 391.5" fill="none" stroke="#35302e" stroke-width="0.5" stroke-linecap="round"/>
<path d="M838.8 440.5 L841.3 420.6" fill="none" stroke="#35302e" stroke-width="0.992" stroke-linecap="round"/>
<path d="M841.3 420.6 L839.2 405.5" fill="none" stroke="#35302e" stroke-width="0.61504" stroke-linecap="round"/>
<path d="M839.2 405.5 L834.3 397" fill="none" stroke="#35302e" stroke-width="0.5" stroke-linecap="round"/>
<path d="M834.3 397 L827.8 392.8" fill="none" stroke="#35302e" stroke-width="0.5" stroke-linecap="round"/>
<path d="M834.3 397 L835.1 390.6" fill="none" stroke="#35302e" stroke-width="0.5" stroke-linecap="round"/>
<path d="M839.2 405.5 L841.4 393.7" fill="none" stroke="#35302e" stroke-width="0.5" stroke-linecap="round"/>
<path d="M841.4 393.7 L838.3 385.4" fill="none" stroke="#35302e" stroke-width="0.5" stroke-linecap="round"/>
<path d="M841.4 393.7 L844.8 387" fill="none" stroke="#35302e" stroke-width="0.5" stroke-linecap="round"/>
<path d="M841.3 420.6 L850.6 410.1" fill="none" stroke="#35302e" stroke-width="0.61504" stroke-linecap="round"/>
<path d="M850.6 410.1 L855.2 400.1" fill="none" stroke="#35302e" stroke-width="0.5" stroke-linecap="round"/>
<path d="M855.2 400.1 L854.1 391.8" fill="none" stroke="#35302e" stroke-width="0.5" stroke-linecap="round"/>
<path d="M855.2 400.1 L860.9 393.8" fill="none" stroke="#35302e" stroke-width="0.5" stroke-linecap="round"/>
<path d="M850.6 410.1 L859.7 404.3" fill="none" stroke="#35302e" stroke-width="0.5" stroke-linecap="round"/>
<path d="M859.7 404.3 L863.4 398" fill="none" stroke="#35302e" stroke-width="0.5" stroke-linecap="round"/>
<path d="M859.7 404.3 L868.2 404" fill="none" stroke="#35302e" stroke-width="0.5" stroke-linecap="round"/>
<path d="M846 520 L823 500.7" fill="none" stroke="#35302e" stroke-width="1.6" stroke-linecap="round"/>
<path d="M823 500.7 L804.7 494.8" fill="none" stroke="#35302e" stroke-width="0.992" stroke-linecap="round"/>
<path d="M804.7 494.8 L792.1 497.3" fill="none" stroke="#35302e" stroke-width="0.61504" stroke-linecap="round"/>
<path d="M792.1 497.3 L784.9 501.3" fill="none" stroke="#35302e" stroke-width="0.5" stroke-linecap="round"/>
<path d="M792.1 497.3 L783.8 496.6" fill="none" stroke="#35302e" stroke-width="0.5" stroke-linecap="round"/>
<path d="M804.7 494.8 L794.9 486.2" fill="none" stroke="#35302e" stroke-width="0.61504" stroke-linecap="round"/>
<path d="M794.9 486.2 L786.2 485.4" fill="none" stroke="#35302e" stroke-width="0.5" stroke-linecap="round"/>
<path d="M794.9 486.2 L792 478.2" fill="none" stroke="#35302e" stroke-width="0.5" stroke-linecap="round"/>
<path d="M823 500.7 L814.9 483.9" fill="none" stroke="#35302e" stroke-width="0.992" stroke-linecap="round"/>
<path d="M814.9 483.9 L806.4 476" fill="none" stroke="#35302e" stroke-width="0.61504" stroke-linecap="round"/>
<path d="M806.4 476 L798 474.9" fill="none" stroke="#35302e" stroke-width="0.5" stroke-linecap="round"/>
<path d="M806.4 476 L802.6 468.7" fill="none" stroke="#35302e" stroke-width="0.5" stroke-linecap="round"/>
<path d="M814.9 483.9 L818.1 472.3" fill="none" stroke="#35302e" stroke-width="0.61504" stroke-linecap="round"/>
<path d="M818.1 472.3 L814.9 464.6" fill="none" stroke="#35302e" stroke-width="0.5" stroke-linecap="round"/>
<path d="M818.1 472.3 L824.4 465.7" fill="none" stroke="#35302e" stroke-width="0.5" stroke-linecap="round"/>
</g>
<g opacity=".7">
<path d="M455 690 L455 560 L452 500" fill="none" stroke="#1e1a18" stroke-width="2.2" />
<path d="M453 520 L449.9 484.1" fill="none" stroke="#2a2420" stroke-width="1.8" stroke-linecap="round"/>
<path d="M449.9 484.1 L436.8 462.1" fill="none" stroke="#2a2420" stroke-width="1.116" stroke-linecap="round"/>
<path d="M436.8 462.1 L418.4 453.3" fill="none" stroke="#2a2420" stroke-width="0.69192" stroke-linecap="round"/>
<path d="M418.4 453.3 L402.7 453" fill="none" stroke="#2a2420" stroke-width="0.5" stroke-linecap="round"/>
<path d="M402.7 453 L393.1 459.3" fill="none" stroke="#2a2420" stroke-width="0.5" stroke-linecap="round"/>
<path d="M402.7 453 L393.2 448.1" fill="none" stroke="#2a2420" stroke-width="0.5" stroke-linecap="round"/>
<path d="M418.4 453.3 L408.5 444.7" fill="none" stroke="#2a2420" stroke-width="0.5" stroke-linecap="round"/>
<path d="M408.5 444.7 L399.6 440.5" fill="none" stroke="#2a2420" stroke-width="0.5" stroke-linecap="round"/>
<path d="M408.5 444.7 L404.7 437.1" fill="none" stroke="#2a2420" stroke-width="0.5" stroke-linecap="round"/>
<path d="M436.8 462.1 L432.1 442.9" fill="none" stroke="#2a2420" stroke-width="0.69192" stroke-linecap="round"/>
<path d="M432.1 442.9 L420.4 434.1" fill="none" stroke="#2a2420" stroke-width="0.5" stroke-linecap="round"/>
<path d="M420.4 434.1 L411 431.7" fill="none" stroke="#2a2420" stroke-width="0.5" stroke-linecap="round"/>
<path d="M420.4 434.1 L415.2 425.3" fill="none" stroke="#2a2420" stroke-width="0.5" stroke-linecap="round"/>
<path d="M432.1 442.9 L433.3 429.1" fill="none" stroke="#2a2420" stroke-width="0.5" stroke-linecap="round"/>
<path d="M433.3 429.1 L430.1 418.6" fill="none" stroke="#2a2420" stroke-width="0.5" stroke-linecap="round"/>
<path d="M433.3 429.1 L440.6 422.4" fill="none" stroke="#2a2420" stroke-width="0.5" stroke-linecap="round"/>
<path d="M449.9 484.1 L457.9 456.7" fill="none" stroke="#2a2420" stroke-width="1.116" stroke-linecap="round"/>
<path d="M457.9 456.7 L455.6 437.3" fill="none" stroke="#2a2420" stroke-width="0.69192" stroke-linecap="round"/>
<path d="M455.6 437.3 L450.7 424.7" fill="none" stroke="#2a2420" stroke-width="0.5" stroke-linecap="round"/>
<path d="M450.7 424.7 L443.4 418.5" fill="none" stroke="#2a2420" stroke-width="0.5" stroke-linecap="round"/>
<path d="M450.7 424.7 L450.5 415.2" fill="none" stroke="#2a2420" stroke-width="0.5" stroke-linecap="round"/>
<path d="M455.6 437.3 L457.3 424.4" fill="none" stroke="#2a2420" stroke-width="0.5" stroke-linecap="round"/>
<path d="M457.3 424.4 L455.8 415.4" fill="none" stroke="#2a2420" stroke-width="0.5" stroke-linecap="round"/>
<path d="M457.3 424.4 L460.5 416.9" fill="none" stroke="#2a2420" stroke-width="0.5" stroke-linecap="round"/>
<path d="M457.9 456.7 L469.9 442.1" fill="none" stroke="#2a2420" stroke-width="0.69192" stroke-linecap="round"/>
<path d="M469.9 442.1 L471.8 428.7" fill="none" stroke="#2a2420" stroke-width="0.5" stroke-linecap="round"/>
<path d="M471.8 428.7 L467.2 419.8" fill="none" stroke="#2a2420" stroke-width="0.5" stroke-linecap="round"/>
<path d="M471.8 428.7 L479 421" fill="none" stroke="#2a2420" stroke-width="0.5" stroke-linecap="round"/>
<path d="M469.9 442.1 L481.5 436.6" fill="none" stroke="#2a2420" stroke-width="0.5" stroke-linecap="round"/>
<path d="M481.5 436.6 L484.7 428.9" fill="none" stroke="#2a2420" stroke-width="0.5" stroke-linecap="round"/>
<path d="M481.5 436.6 L490.8 438.3" fill="none" stroke="#2a2420" stroke-width="0.5" stroke-linecap="round"/>
<path d="M455 560 L433.1 534" fill="none" stroke="#2a2420" stroke-width="1.6" stroke-linecap="round"/>
<path d="M433.1 534 L411.5 519.1" fill="none" stroke="#2a2420" stroke-width="0.992" stroke-linecap="round"/>
<path d="M411.5 519.1 L392.4 521" fill="none" stroke="#2a2420" stroke-width="0.61504" stroke-linecap="round"/>
<path d="M392.4 521 L381.3 530.6" fill="none" stroke="#2a2420" stroke-width="0.5" stroke-linecap="round"/>
<path d="M381.3 530.6 L375.9 539.6" fill="none" stroke="#2a2420" stroke-width="0.5" stroke-linecap="round"/>
<path d="M381.3 530.6 L370.2 532.9" fill="none" stroke="#2a2420" stroke-width="0.5" stroke-linecap="round"/>
<path d="M392.4 521 L379.9 513.2" fill="none" stroke="#2a2420" stroke-width="0.5" stroke-linecap="round"/>
<path d="M379.9 513.2 L368.4 513" fill="none" stroke="#2a2420" stroke-width="0.5" stroke-linecap="round"/>
<path d="M379.9 513.2 L375.4 503.1" fill="none" stroke="#2a2420" stroke-width="0.5" stroke-linecap="round"/>
<path d="M411.5 519.1 L402.2 505.7" fill="none" stroke="#2a2420" stroke-width="0.61504" stroke-linecap="round"/>
<path d="M402.2 505.7 L393.3 498.9" fill="none" stroke="#2a2420" stroke-width="0.5" stroke-linecap="round"/>
<path d="M393.3 498.9 L385.1 495.9" fill="none" stroke="#2a2420" stroke-width="0.5" stroke-linecap="round"/>
<path d="M393.3 498.9 L390.1 491.3" fill="none" stroke="#2a2420" stroke-width="0.5" stroke-linecap="round"/>
<path d="M402.2 505.7 L401.7 493.5" fill="none" stroke="#2a2420" stroke-width="0.5" stroke-linecap="round"/>
<path d="M401.7 493.5 L397.8 487" fill="none" stroke="#2a2420" stroke-width="0.5" stroke-linecap="round"/>
<path d="M401.7 493.5 L406.9 486" fill="none" stroke="#2a2420" stroke-width="0.5" stroke-linecap="round"/>
<path d="M433.1 534 L428.4 510.1" fill="none" stroke="#2a2420" stroke-width="0.992" stroke-linecap="round"/>
<path d="M428.4 510.1 L417.6 499.1" fill="none" stroke="#2a2420" stroke-width="0.61504" stroke-linecap="round"/>
<path d="M417.6 499.1 L407.5 497.3" fill="none" stroke="#2a2420" stroke-width="0.5" stroke-linecap="round"/>
<path d="M407.5 497.3 L400.7 498.1" fill="none" stroke="#2a2420" stroke-width="0.5" stroke-linecap="round"/>
<path d="M407.5 497.3 L402.8 492.5" fill="none" stroke="#2a2420" stroke-width="0.5" stroke-linecap="round"/>
<path d="M417.6 499.1 L415.7 487" fill="none" stroke="#2a2420" stroke-width="0.5" stroke-linecap="round"/>
<path d="M415.7 487 L410.6 480.3" fill="none" stroke="#2a2420" stroke-width="0.5" stroke-linecap="round"/>
<path d="M415.7 487 L418.7 478.4" fill="none" stroke="#2a2420" stroke-width="0.5" stroke-linecap="round"/>
<path d="M428.4 510.1 L435.9 493.9" fill="none" stroke="#2a2420" stroke-width="0.61504" stroke-linecap="round"/>
<path d="M435.9 493.9 L434.4 482.7" fill="none" stroke="#2a2420" stroke-width="0.5" stroke-linecap="round"/>
<path d="M434.4 482.7 L431.1 476" fill="none" stroke="#2a2420" stroke-width="0.5" stroke-linecap="round"/>
<path d="M434.4 482.7 L438 476" fill="none" stroke="#2a2420" stroke-width="0.5" stroke-linecap="round"/>
<path d="M435.9 493.9 L445.1 487.7" fill="none" stroke="#2a2420" stroke-width="0.5" stroke-linecap="round"/>
<path d="M445.1 487.7 L449.8 482" fill="none" stroke="#2a2420" stroke-width="0.5" stroke-linecap="round"/>
<path d="M445.1 487.7 L453.3 487.6" fill="none" stroke="#2a2420" stroke-width="0.5" stroke-linecap="round"/>
<path d="M455 580 L476.9 554" fill="none" stroke="#2a2420" stroke-width="1.6" stroke-linecap="round"/>
<path d="M476.9 554 L479.4 531.2" fill="none" stroke="#2a2420" stroke-width="0.992" stroke-linecap="round"/>
<path d="M479.4 531.2 L473.1 516.4" fill="none" stroke="#2a2420" stroke-width="0.61504" stroke-linecap="round"/>
<path d="M473.1 516.4 L465.2 509.8" fill="none" stroke="#2a2420" stroke-width="0.5" stroke-linecap="round"/>
<path d="M465.2 509.8 L458.4 509.9" fill="none" stroke="#2a2420" stroke-width="0.5" stroke-linecap="round"/>
<path d="M465.2 509.8 L464 501.8" fill="none" stroke="#2a2420" stroke-width="0.5" stroke-linecap="round"/>
<path d="M473.1 516.4 L471.6 505.2" fill="none" stroke="#2a2420" stroke-width="0.5" stroke-linecap="round"/>
<path d="M471.6 505.2 L465.1 499" fill="none" stroke="#2a2420" stroke-width="0.5" stroke-linecap="round"/>
<path d="M471.6 505.2 L474.1 498.1" fill="none" stroke="#2a2420" stroke-width="0.5" stroke-linecap="round"/>
<path d="M479.4 531.2 L487.5 515.1" fill="none" stroke="#2a2420" stroke-width="0.61504" stroke-linecap="round"/>
<path d="M487.5 515.1 L488.9 502.1" fill="none" stroke="#2a2420" stroke-width="0.5" stroke-linecap="round"/>
<path d="M488.9 502.1 L487 492.9" fill="none" stroke="#2a2420" stroke-width="0.5" stroke-linecap="round"/>
<path d="M488.9 502.1 L495.2 496.4" fill="none" stroke="#2a2420" stroke-width="0.5" stroke-linecap="round"/>
<path d="M487.5 515.1 L499.1 509.5" fill="none" stroke="#2a2420" stroke-width="0.5" stroke-linecap="round"/>
<path d="M499.1 509.5 L503.1 500.8" fill="none" stroke="#2a2420" stroke-width="0.5" stroke-linecap="round"/>
<path d="M499.1 509.5 L509.1 508.7" fill="none" stroke="#2a2420" stroke-width="0.5" stroke-linecap="round"/>
<path d="M476.9 554 L496.6 546.1" fill="none" stroke="#2a2420" stroke-width="0.992" stroke-linecap="round"/>
<path d="M496.6 546.1 L508.7 537.2" fill="none" stroke="#2a2420" stroke-width="0.61504" stroke-linecap="round"/>
<path d="M508.7 537.2 L513.3 528.1" fill="none" stroke="#2a2420" stroke-width="0.5" stroke-linecap="round"/>
<path d="M513.3 528.1 L514.2 521.3" fill="none" stroke="#2a2420" stroke-width="0.5" stroke-linecap="round"/>
<path d="M513.3 528.1 L519.2 523.1" fill="none" stroke="#2a2420" stroke-width="0.5" stroke-linecap="round"/>
<path d="M508.7 537.2 L519.3 533" fill="none" stroke="#2a2420" stroke-width="0.5" stroke-linecap="round"/>
<path d="M519.3 533 L522.9 526.7" fill="none" stroke="#2a2420" stroke-width="0.5" stroke-linecap="round"/>
<path d="M519.3 533 L527.3 535.8" fill="none" stroke="#2a2420" stroke-width="0.5" stroke-linecap="round"/>
<path d="M496.6 546.1 L510.1 550.6" fill="none" stroke="#2a2420" stroke-width="0.61504" stroke-linecap="round"/>
<path d="M510.1 550.6 L519.9 549.5" fill="none" stroke="#2a2420" stroke-width="0.5" stroke-linecap="round"/>
<path d="M519.9 549.5 L524.6 544" fill="none" stroke="#2a2420" stroke-width="0.5" stroke-linecap="round"/>
<path d="M519.9 549.5 L526.4 551.6" fill="none" stroke="#2a2420" stroke-width="0.5" stroke-linecap="round"/>
<path d="M510.1 550.6 L516.9 556.4" fill="none" stroke="#2a2420" stroke-width="0.5" stroke-linecap="round"/>
<path d="M516.9 556.4 L523.3 559.2" fill="none" stroke="#2a2420" stroke-width="0.5" stroke-linecap="round"/>
<path d="M516.9 556.4 L520.1 562.7" fill="none" stroke="#2a2420" stroke-width="0.5" stroke-linecap="round"/>
<path d="M512 690 L512 580 L515 520" fill="none" stroke="#1e1a18" stroke-width="2" />
<path d="M514 540 L519.9 506.5" fill="none" stroke="#2a2420" stroke-width="1.6" stroke-linecap="round"/>
<path d="M519.9 506.5 L515.4 484.3" fill="none" stroke="#2a2420" stroke-width="0.992" stroke-linecap="round"/>
<path d="M515.4 484.3 L505.8 473" fill="none" stroke="#2a2420" stroke-width="0.61504" stroke-linecap="round"/>
<path d="M505.8 473 L495.1 468.1" fill="none" stroke="#2a2420" stroke-width="0.5" stroke-linecap="round"/>
<path d="M495.1 468.1 L486.4 470.4" fill="none" stroke="#2a2420" stroke-width="0.5" stroke-linecap="round"/>
<path d="M495.1 468.1 L490 460.3" fill="none" stroke="#2a2420" stroke-width="0.5" stroke-linecap="round"/>
<path d="M505.8 473 L505.9 462.3" fill="none" stroke="#2a2420" stroke-width="0.5" stroke-linecap="round"/>
<path d="M505.9 462.3 L502.2 456.7" fill="none" stroke="#2a2420" stroke-width="0.5" stroke-linecap="round"/>
<path d="M505.9 462.3 L510.3 456.2" fill="none" stroke="#2a2420" stroke-width="0.5" stroke-linecap="round"/>
<path d="M515.4 484.3 L522.3 469" fill="none" stroke="#2a2420" stroke-width="0.61504" stroke-linecap="round"/>
<path d="M522.3 469 L522.6 458.5" fill="none" stroke="#2a2420" stroke-width="0.5" stroke-linecap="round"/>
<path d="M522.6 458.5 L518.4 453.3" fill="none" stroke="#2a2420" stroke-width="0.5" stroke-linecap="round"/>
<path d="M522.6 458.5 L526.2 452.3" fill="none" stroke="#2a2420" stroke-width="0.5" stroke-linecap="round"/>
<path d="M522.3 469 L531.5 460.5" fill="none" stroke="#2a2420" stroke-width="0.5" stroke-linecap="round"/>
<path d="M531.5 460.5 L532.3 452.1" fill="none" stroke="#2a2420" stroke-width="0.5" stroke-linecap="round"/>
<path d="M531.5 460.5 L539.9 459.1" fill="none" stroke="#2a2420" stroke-width="0.5" stroke-linecap="round"/>
<path d="M519.9 506.5 L535.1 488.6" fill="none" stroke="#2a2420" stroke-width="0.992" stroke-linecap="round"/>
<path d="M535.1 488.6 L540.6 474.4" fill="none" stroke="#2a2420" stroke-width="0.61504" stroke-linecap="round"/>
<path d="M540.6 474.4 L540.8 462.4" fill="none" stroke="#2a2420" stroke-width="0.5" stroke-linecap="round"/>
<path d="M540.8 462.4 L537.1 455.5" fill="none" stroke="#2a2420" stroke-width="0.5" stroke-linecap="round"/>
<path d="M540.8 462.4 L547.1 455.3" fill="none" stroke="#2a2420" stroke-width="0.5" stroke-linecap="round"/>
<path d="M540.6 474.4 L548 467.8" fill="none" stroke="#2a2420" stroke-width="0.5" stroke-linecap="round"/>
<path d="M548 467.8 L551 462.3" fill="none" stroke="#2a2420" stroke-width="0.5" stroke-linecap="round"/>
<path d="M548 467.8 L553.9 466" fill="none" stroke="#2a2420" stroke-width="0.5" stroke-linecap="round"/>
<path d="M535.1 488.6 L548.9 481.1" fill="none" stroke="#2a2420" stroke-width="0.61504" stroke-linecap="round"/>
<path d="M548.9 481.1 L555.1 470.6" fill="none" stroke="#2a2420" stroke-width="0.5" stroke-linecap="round"/>
<path d="M555.1 470.6 L554.4 462.2" fill="none" stroke="#2a2420" stroke-width="0.5" stroke-linecap="round"/>
<path d="M555.1 470.6 L562.4 465.9" fill="none" stroke="#2a2420" stroke-width="0.5" stroke-linecap="round"/>
<path d="M548.9 481.1 L559.5 480.5" fill="none" stroke="#2a2420" stroke-width="0.5" stroke-linecap="round"/>
<path d="M559.5 480.5 L566.2 478.1" fill="none" stroke="#2a2420" stroke-width="0.5" stroke-linecap="round"/>
<path d="M559.5 480.5 L564.8 484.8" fill="none" stroke="#2a2420" stroke-width="0.5" stroke-linecap="round"/>
<path d="M512 580 L497 554" fill="none" stroke="#2a2420" stroke-width="1.5" stroke-linecap="round"/>
<path d="M497 554 L478.2 542.6" fill="none" stroke="#2a2420" stroke-width="0.93" stroke-linecap="round"/>
<path d="M478.2 542.6 L463.8 544.6" fill="none" stroke="#2a2420" stroke-width="0.5766" stroke-linecap="round"/>
<path d="M463.8 544.6 L455.5 549.4" fill="none" stroke="#2a2420" stroke-width="0.5" stroke-linecap="round"/>
<path d="M455.5 549.4 L451.7 554.9" fill="none" stroke="#2a2420" stroke-width="0.5" stroke-linecap="round"/>
<path d="M455.5 549.4 L448.2 547.8" fill="none" stroke="#2a2420" stroke-width="0.5" stroke-linecap="round"/>
<path d="M463.8 544.6 L456.1 539.8" fill="none" stroke="#2a2420" stroke-width="0.5" stroke-linecap="round"/>
<path d="M456.1 539.8 L449.6 537.9" fill="none" stroke="#2a2420" stroke-width="0.5" stroke-linecap="round"/>
<path d="M456.1 539.8 L454.1 533.8" fill="none" stroke="#2a2420" stroke-width="0.5" stroke-linecap="round"/>
<path d="M478.2 542.6 L471.9 530.5" fill="none" stroke="#2a2420" stroke-width="0.5766" stroke-linecap="round"/>
<path d="M471.9 530.5 L463.3 524.1" fill="none" stroke="#2a2420" stroke-width="0.5" stroke-linecap="round"/>
<path d="M463.3 524.1 L455 524.2" fill="none" stroke="#2a2420" stroke-width="0.5" stroke-linecap="round"/>
<path d="M463.3 524.1 L461.9 517.1" fill="none" stroke="#2a2420" stroke-width="0.5" stroke-linecap="round"/>
<path d="M471.9 530.5 L470.3 521.8" fill="none" stroke="#2a2420" stroke-width="0.5" stroke-linecap="round"/>
<path d="M470.3 521.8 L466.1 516.7" fill="none" stroke="#2a2420" stroke-width="0.5" stroke-linecap="round"/>
<path d="M470.3 521.8 L473.7 516.1" fill="none" stroke="#2a2420" stroke-width="0.5" stroke-linecap="round"/>
<path d="M497 554 L498.1 531.3" fill="none" stroke="#2a2420" stroke-width="0.93" stroke-linecap="round"/>
<path d="M498.1 531.3 L491.3 516.4" fill="none" stroke="#2a2420" stroke-width="0.5766" stroke-linecap="round"/>
<path d="M491.3 516.4 L483.3 506.9" fill="none" stroke="#2a2420" stroke-width="0.5" stroke-linecap="round"/>
<path d="M483.3 506.9 L474.8 502.2" fill="none" stroke="#2a2420" stroke-width="0.5" stroke-linecap="round"/>
<path d="M483.3 506.9 L482.3 498.6" fill="none" stroke="#2a2420" stroke-width="0.5" stroke-linecap="round"/>
<path d="M491.3 516.4 L490.1 505.6" fill="none" stroke="#2a2420" stroke-width="0.5" stroke-linecap="round"/>
<path d="M490.1 505.6 L485 499.3" fill="none" stroke="#2a2420" stroke-width="0.5" stroke-linecap="round"/>
<path d="M490.1 505.6 L491.4 498.9" fill="none" stroke="#2a2420" stroke-width="0.5" stroke-linecap="round"/>
<path d="M498.1 531.3 L506.9 517.4" fill="none" stroke="#2a2420" stroke-width="0.5766" stroke-linecap="round"/>
<path d="M506.9 517.4 L508.2 506.6" fill="none" stroke="#2a2420" stroke-width="0.5" stroke-linecap="round"/>
<path d="M508.2 506.6 L505.4 500.4" fill="none" stroke="#2a2420" stroke-width="0.5" stroke-linecap="round"/>
<path d="M508.2 506.6 L512 499.9" fill="none" stroke="#2a2420" stroke-width="0.5" stroke-linecap="round"/>
<path d="M506.9 517.4 L518.6 514" fill="none" stroke="#2a2420" stroke-width="0.5" stroke-linecap="round"/>
<path d="M518.6 514 L523.4 507" fill="none" stroke="#2a2420" stroke-width="0.5" stroke-linecap="round"/>
<path d="M518.6 514 L526.6 514.7" fill="none" stroke="#2a2420" stroke-width="0.5" stroke-linecap="round"/>
<path d="M512 600 L533.2 578.8" fill="none" stroke="#2a2420" stroke-width="1.5" stroke-linecap="round"/>
<path d="M533.2 578.8 L534.4 556.4" fill="none" stroke="#2a2420" stroke-width="0.93" stroke-linecap="round"/>
<path d="M534.4 556.4 L529.7 543.3" fill="none" stroke="#2a2420" stroke-width="0.5766" stroke-linecap="round"/>
<path d="M529.7 543.3 L521.9 536.4" fill="none" stroke="#2a2420" stroke-width="0.5" stroke-linecap="round"/>
<path d="M529.7 543.3 L530.7 534" fill="none" stroke="#2a2420" stroke-width="0.5" stroke-linecap="round"/>
<path d="M534.4 556.4 L545 542.3" fill="none" stroke="#2a2420" stroke-width="0.5766" stroke-linecap="round"/>
<path d="M545 542.3 L548 531.6" fill="none" stroke="#2a2420" stroke-width="0.5" stroke-linecap="round"/>
<path d="M545 542.3 L555.6 536.3" fill="none" stroke="#2a2420" stroke-width="0.5" stroke-linecap="round"/>
<path d="M533.2 578.8 L552.5 575" fill="none" stroke="#2a2420" stroke-width="0.93" stroke-linecap="round"/>
<path d="M552.5 575 L562.4 563.9" fill="none" stroke="#2a2420" stroke-width="0.5766" stroke-linecap="round"/>
<path d="M562.4 563.9 L564.5 554.5" fill="none" stroke="#2a2420" stroke-width="0.5" stroke-linecap="round"/>
<path d="M562.4 563.9 L572.3 562.9" fill="none" stroke="#2a2420" stroke-width="0.5" stroke-linecap="round"/>
<path d="M552.5 575 L564.1 580.8" fill="none" stroke="#2a2420" stroke-width="0.5766" stroke-linecap="round"/>
<path d="M564.1 580.8 L573.9 581.9" fill="none" stroke="#2a2420" stroke-width="0.5" stroke-linecap="round"/>
<path d="M564.1 580.8 L570.8 588.7" fill="none" stroke="#2a2420" stroke-width="0.5" stroke-linecap="round"/>
<path d="M420 690 L418 560 L414 470" fill="none" stroke="#24201e" stroke-width="1.6" />
<path d="M416 500 L423.8 471" fill="none" stroke="#2a2420" stroke-width="1.3" stroke-linecap="round"/>
<path d="M423.8 471 L419.2 452" fill="none" stroke="#2a2420" stroke-width="0.806" stroke-linecap="round"/>
<path d="M419.2 452 L411.5 440.7" fill="none" stroke="#2a2420" stroke-width="0.5" stroke-linecap="round"/>
<path d="M411.5 440.7 L401.5 436.6" fill="none" stroke="#2a2420" stroke-width="0.5" stroke-linecap="round"/>
<path d="M411.5 440.7 L409 431.6" fill="none" stroke="#2a2420" stroke-width="0.5" stroke-linecap="round"/>
<path d="M419.2 452 L421.1 436.5" fill="none" stroke="#2a2420" stroke-width="0.5" stroke-linecap="round"/>
<path d="M421.1 436.5 L419.1 426.9" fill="none" stroke="#2a2420" stroke-width="0.5" stroke-linecap="round"/>
<path d="M421.1 436.5 L425.3 426.5" fill="none" stroke="#2a2420" stroke-width="0.5" stroke-linecap="round"/>
<path d="M423.8 471 L442.9 457.6" fill="none" stroke="#2a2420" stroke-width="0.806" stroke-linecap="round"/>
<path d="M442.9 457.6 L449.2 440" fill="none" stroke="#2a2420" stroke-width="0.5" stroke-linecap="round"/>
<path d="M449.2 440 L444.6 428.2" fill="none" stroke="#2a2420" stroke-width="0.5" stroke-linecap="round"/>
<path d="M449.2 440 L458.6 428.7" fill="none" stroke="#2a2420" stroke-width="0.5" stroke-linecap="round"/>
<path d="M442.9 457.6 L457.5 457.8" fill="none" stroke="#2a2420" stroke-width="0.5" stroke-linecap="round"/>
<path d="M457.5 457.8 L466 452.4" fill="none" stroke="#2a2420" stroke-width="0.5" stroke-linecap="round"/>
<path d="M457.5 457.8 L466.5 462.2" fill="none" stroke="#2a2420" stroke-width="0.5" stroke-linecap="round"/>
<path d="M417 540 L406.7 511.8" fill="none" stroke="#2a2420" stroke-width="1.3" stroke-linecap="round"/>
<path d="M406.7 511.8 L395 497.4" fill="none" stroke="#2a2420" stroke-width="0.806" stroke-linecap="round"/>
<path d="M395 497.4 L383.8 491.3" fill="none" stroke="#2a2420" stroke-width="0.5" stroke-linecap="round"/>
<path d="M383.8 491.3 L375.8 493.2" fill="none" stroke="#2a2420" stroke-width="0.5" stroke-linecap="round"/>
<path d="M383.8 491.3 L381 483.4" fill="none" stroke="#2a2420" stroke-width="0.5" stroke-linecap="round"/>
<path d="M395 497.4 L391.4 483.5" fill="none" stroke="#2a2420" stroke-width="0.5" stroke-linecap="round"/>
<path d="M391.4 483.5 L383.5 477.5" fill="none" stroke="#2a2420" stroke-width="0.5" stroke-linecap="round"/>
<path d="M391.4 483.5 L391.6 473.5" fill="none" stroke="#2a2420" stroke-width="0.5" stroke-linecap="round"/>
<path d="M406.7 511.8 L408.8 488.3" fill="none" stroke="#2a2420" stroke-width="0.806" stroke-linecap="round"/>
<path d="M408.8 488.3 L404.7 472.7" fill="none" stroke="#2a2420" stroke-width="0.5" stroke-linecap="round"/>
<path d="M404.7 472.7 L396.4 466.9" fill="none" stroke="#2a2420" stroke-width="0.5" stroke-linecap="round"/>
<path d="M404.7 472.7 L407.1 460.6" fill="none" stroke="#2a2420" stroke-width="0.5" stroke-linecap="round"/>
<path d="M408.8 488.3 L418.5 477.2" fill="none" stroke="#2a2420" stroke-width="0.5" stroke-linecap="round"/>
<path d="M418.5 477.2 L422.6 468.8" fill="none" stroke="#2a2420" stroke-width="0.5" stroke-linecap="round"/>
<path d="M418.5 477.2 L428.3 475.9" fill="none" stroke="#2a2420" stroke-width="0.5" stroke-linecap="round"/>
</g>
<g opacity=".8">
<path d="M975 600 L967 554.7" fill="none" stroke="#1c1c1c" stroke-width="2.4" stroke-linecap="round"/>
<path d="M967 554.7 L941.3 529.6" fill="none" stroke="#1c1c1c" stroke-width="1.488" stroke-linecap="round"/>
<path d="M941.3 529.6 L918.7 521.3" fill="none" stroke="#1c1c1c" stroke-width="0.92256" stroke-linecap="round"/>
<path d="M918.7 521.3 L902.3 527.7" fill="none" stroke="#1c1c1c" stroke-width="0.571987" stroke-linecap="round"/>
<path d="M902.3 527.7 L892.8 536.8" fill="none" stroke="#1c1c1c" stroke-width="0.5" stroke-linecap="round"/>
<path d="M892.8 536.8 L889.3 544.9" fill="none" stroke="#1c1c1c" stroke-width="0.5" stroke-linecap="round"/>
<path d="M892.8 536.8 L884 541.6" fill="none" stroke="#1c1c1c" stroke-width="0.5" stroke-linecap="round"/>
<path d="M902.3 527.7 L890.1 523.5" fill="none" stroke="#1c1c1c" stroke-width="0.5" stroke-linecap="round"/>
<path d="M890.1 523.5 L882.7 526.6" fill="none" stroke="#1c1c1c" stroke-width="0.5" stroke-linecap="round"/>
<path d="M890.1 523.5 L883.2 517.7" fill="none" stroke="#1c1c1c" stroke-width="0.5" stroke-linecap="round"/>
<path d="M918.7 521.3 L909.7 504.5" fill="none" stroke="#1c1c1c" stroke-width="0.571987" stroke-linecap="round"/>
<path d="M909.7 504.5 L899.6 496.9" fill="none" stroke="#1c1c1c" stroke-width="0.5" stroke-linecap="round"/>
<path d="M899.6 496.9 L890.7 495.4" fill="none" stroke="#1c1c1c" stroke-width="0.5" stroke-linecap="round"/>
<path d="M899.6 496.9 L897.8 488.8" fill="none" stroke="#1c1c1c" stroke-width="0.5" stroke-linecap="round"/>
<path d="M909.7 504.5 L912 490.3" fill="none" stroke="#1c1c1c" stroke-width="0.5" stroke-linecap="round"/>
<path d="M912 490.3 L906.8 480.8" fill="none" stroke="#1c1c1c" stroke-width="0.5" stroke-linecap="round"/>
<path d="M912 490.3 L918.4 483" fill="none" stroke="#1c1c1c" stroke-width="0.5" stroke-linecap="round"/>
<path d="M941.3 529.6 L931.9 506.8" fill="none" stroke="#1c1c1c" stroke-width="0.92256" stroke-linecap="round"/>
<path d="M931.9 506.8 L918.5 498.7" fill="none" stroke="#1c1c1c" stroke-width="0.571987" stroke-linecap="round"/>
<path d="M918.5 498.7 L907 496.5" fill="none" stroke="#1c1c1c" stroke-width="0.5" stroke-linecap="round"/>
<path d="M907 496.5 L899.6 497.8" fill="none" stroke="#1c1c1c" stroke-width="0.5" stroke-linecap="round"/>
<path d="M907 496.5 L899.3 492.7" fill="none" stroke="#1c1c1c" stroke-width="0.5" stroke-linecap="round"/>
<path d="M918.5 498.7 L911.3 488.6" fill="none" stroke="#1c1c1c" stroke-width="0.5" stroke-linecap="round"/>
<path d="M911.3 488.6 L901.8 486" fill="none" stroke="#1c1c1c" stroke-width="0.5" stroke-linecap="round"/>
<path d="M911.3 488.6 L909.5 480.9" fill="none" stroke="#1c1c1c" stroke-width="0.5" stroke-linecap="round"/>
<path d="M931.9 506.8 L930.4 489.4" fill="none" stroke="#1c1c1c" stroke-width="0.571987" stroke-linecap="round"/>
<path d="M930.4 489.4 L922.5 480" fill="none" stroke="#1c1c1c" stroke-width="0.5" stroke-linecap="round"/>
<path d="M922.5 480 L915.1 475.8" fill="none" stroke="#1c1c1c" stroke-width="0.5" stroke-linecap="round"/>
<path d="M922.5 480 L921.3 471" fill="none" stroke="#1c1c1c" stroke-width="0.5" stroke-linecap="round"/>
<path d="M930.4 489.4 L937.2 477.8" fill="none" stroke="#1c1c1c" stroke-width="0.5" stroke-linecap="round"/>
<path d="M937.2 477.8 L936.8 469.1" fill="none" stroke="#1c1c1c" stroke-width="0.5" stroke-linecap="round"/>
<path d="M937.2 477.8 L945.7 474.5" fill="none" stroke="#1c1c1c" stroke-width="0.5" stroke-linecap="round"/>
<path d="M967 554.7 L978.1 525.1" fill="none" stroke="#1c1c1c" stroke-width="1.488" stroke-linecap="round"/>
<path d="M978.1 525.1 L972.8 505.1" fill="none" stroke="#1c1c1c" stroke-width="0.92256" stroke-linecap="round"/>
<path d="M972.8 505.1 L964.6 494" fill="none" stroke="#1c1c1c" stroke-width="0.571987" stroke-linecap="round"/>
<path d="M964.6 494 L955.8 487.8" fill="none" stroke="#1c1c1c" stroke-width="0.5" stroke-linecap="round"/>
<path d="M955.8 487.8 L948.6 487.3" fill="none" stroke="#1c1c1c" stroke-width="0.5" stroke-linecap="round"/>
<path d="M955.8 487.8 L951.6 480.4" fill="none" stroke="#1c1c1c" stroke-width="0.5" stroke-linecap="round"/>
<path d="M964.6 494 L963.4 484.9" fill="none" stroke="#1c1c1c" stroke-width="0.5" stroke-linecap="round"/>
<path d="M963.4 484.9 L958.7 480.2" fill="none" stroke="#1c1c1c" stroke-width="0.5" stroke-linecap="round"/>
<path d="M963.4 484.9 L966.8 480.2" fill="none" stroke="#1c1c1c" stroke-width="0.5" stroke-linecap="round"/>
<path d="M972.8 505.1 L976.4 489.6" fill="none" stroke="#1c1c1c" stroke-width="0.571987" stroke-linecap="round"/>
<path d="M976.4 489.6 L971 478.3" fill="none" stroke="#1c1c1c" stroke-width="0.5" stroke-linecap="round"/>
<path d="M971 478.3 L965.5 471.9" fill="none" stroke="#1c1c1c" stroke-width="0.5" stroke-linecap="round"/>
<path d="M971 478.3 L969.9 470.2" fill="none" stroke="#1c1c1c" stroke-width="0.5" stroke-linecap="round"/>
<path d="M976.4 489.6 L985.8 483" fill="none" stroke="#1c1c1c" stroke-width="0.5" stroke-linecap="round"/>
<path d="M985.8 483 L987.8 475.3" fill="none" stroke="#1c1c1c" stroke-width="0.5" stroke-linecap="round"/>
<path d="M985.8 483 L993.9 483.6" fill="none" stroke="#1c1c1c" stroke-width="0.5" stroke-linecap="round"/>
<path d="M978.1 525.1 L994.3 507.3" fill="none" stroke="#1c1c1c" stroke-width="0.92256" stroke-linecap="round"/>
<path d="M994.3 507.3 L994.5 492" fill="none" stroke="#1c1c1c" stroke-width="0.571987" stroke-linecap="round"/>
<path d="M994.5 492 L988.8 482.3" fill="none" stroke="#1c1c1c" stroke-width="0.5" stroke-linecap="round"/>
<path d="M988.8 482.3 L982.8 477.5" fill="none" stroke="#1c1c1c" stroke-width="0.5" stroke-linecap="round"/>
<path d="M988.8 482.3 L987.3 475.1" fill="none" stroke="#1c1c1c" stroke-width="0.5" stroke-linecap="round"/>
<path d="M994.5 492 L998.8 481.7" fill="none" stroke="#1c1c1c" stroke-width="0.5" stroke-linecap="round"/>
<path d="M998.8 481.7 L997.5 474.5" fill="none" stroke="#1c1c1c" stroke-width="0.5" stroke-linecap="round"/>
<path d="M998.8 481.7 L1003.4 475.6" fill="none" stroke="#1c1c1c" stroke-width="0.5" stroke-linecap="round"/>
<path d="M994.3 507.3 L1009.5 503.6" fill="none" stroke="#1c1c1c" stroke-width="0.571987" stroke-linecap="round"/>
<path d="M1009.5 503.6 L1017.7 497.3" fill="none" stroke="#1c1c1c" stroke-width="0.5" stroke-linecap="round"/>
<path d="M1017.7 497.3 L1019.7 490.2" fill="none" stroke="#1c1c1c" stroke-width="0.5" stroke-linecap="round"/>
<path d="M1017.7 497.3 L1023.9 495" fill="none" stroke="#1c1c1c" stroke-width="0.5" stroke-linecap="round"/>
<path d="M1009.5 503.6 L1020.6 505.9" fill="none" stroke="#1c1c1c" stroke-width="0.5" stroke-linecap="round"/>
<path d="M1020.6 505.9 L1027.3 503.3" fill="none" stroke="#1c1c1c" stroke-width="0.5" stroke-linecap="round"/>
<path d="M1020.6 505.9 L1027.8 510.2" fill="none" stroke="#1c1c1c" stroke-width="0.5" stroke-linecap="round"/>
<path d="M958 560 L964.9 520.6" fill="none" stroke="#1c1c1c" stroke-width="2.2" stroke-linecap="round"/>
<path d="M964.9 520.6 L957.5 494.8" fill="none" stroke="#1c1c1c" stroke-width="1.364" stroke-linecap="round"/>
<path d="M957.5 494.8 L944.1 478.4" fill="none" stroke="#1c1c1c" stroke-width="0.84568" stroke-linecap="round"/>
<path d="M944.1 478.4 L930.5 471.3" fill="none" stroke="#1c1c1c" stroke-width="0.524322" stroke-linecap="round"/>
<path d="M930.5 471.3 L919.8 470.7" fill="none" stroke="#1c1c1c" stroke-width="0.5" stroke-linecap="round"/>
<path d="M919.8 470.7 L913 475.7" fill="none" stroke="#1c1c1c" stroke-width="0.5" stroke-linecap="round"/>
<path d="M919.8 470.7 L913.7 467.5" fill="none" stroke="#1c1c1c" stroke-width="0.5" stroke-linecap="round"/>
<path d="M930.5 471.3 L925.9 462.3" fill="none" stroke="#1c1c1c" stroke-width="0.5" stroke-linecap="round"/>
<path d="M925.9 462.3 L920.6 456.4" fill="none" stroke="#1c1c1c" stroke-width="0.5" stroke-linecap="round"/>
<path d="M925.9 462.3 L925.8 454.6" fill="none" stroke="#1c1c1c" stroke-width="0.5" stroke-linecap="round"/>
<path d="M944.1 478.4 L940.3 462.2" fill="none" stroke="#1c1c1c" stroke-width="0.524322" stroke-linecap="round"/>
<path d="M940.3 462.2 L933.3 454.1" fill="none" stroke="#1c1c1c" stroke-width="0.5" stroke-linecap="round"/>
<path d="M933.3 454.1 L926.9 449.7" fill="none" stroke="#1c1c1c" stroke-width="0.5" stroke-linecap="round"/>
<path d="M933.3 454.1 L932.1 445.8" fill="none" stroke="#1c1c1c" stroke-width="0.5" stroke-linecap="round"/>
<path d="M940.3 462.2 L941.1 450.2" fill="none" stroke="#1c1c1c" stroke-width="0.5" stroke-linecap="round"/>
<path d="M941.1 450.2 L937.9 442.1" fill="none" stroke="#1c1c1c" stroke-width="0.5" stroke-linecap="round"/>
<path d="M941.1 450.2 L944.1 442.6" fill="none" stroke="#1c1c1c" stroke-width="0.5" stroke-linecap="round"/>
<path d="M957.5 494.8 L962.3 474.3" fill="none" stroke="#1c1c1c" stroke-width="0.84568" stroke-linecap="round"/>
<path d="M962.3 474.3 L961.2 459.3" fill="none" stroke="#1c1c1c" stroke-width="0.524322" stroke-linecap="round"/>
<path d="M961.2 459.3 L953.3 450.5" fill="none" stroke="#1c1c1c" stroke-width="0.5" stroke-linecap="round"/>
<path d="M953.3 450.5 L946.6 446.8" fill="none" stroke="#1c1c1c" stroke-width="0.5" stroke-linecap="round"/>
<path d="M953.3 450.5 L953.3 441" fill="none" stroke="#1c1c1c" stroke-width="0.5" stroke-linecap="round"/>
<path d="M961.2 459.3 L965 450.7" fill="none" stroke="#1c1c1c" stroke-width="0.5" stroke-linecap="round"/>
<path d="M965 450.7 L963.1 444.5" fill="none" stroke="#1c1c1c" stroke-width="0.5" stroke-linecap="round"/>
<path d="M965 450.7 L971.2 447.7" fill="none" stroke="#1c1c1c" stroke-width="0.5" stroke-linecap="round"/>
<path d="M962.3 474.3 L973 465.7" fill="none" stroke="#1c1c1c" stroke-width="0.524322" stroke-linecap="round"/>
<path d="M973 465.7 L975.2 456.9" fill="none" stroke="#1c1c1c" stroke-width="0.5" stroke-linecap="round"/>
<path d="M975.2 456.9 L973.8 450.1" fill="none" stroke="#1c1c1c" stroke-width="0.5" stroke-linecap="round"/>
<path d="M975.2 456.9 L979.9 453.3" fill="none" stroke="#1c1c1c" stroke-width="0.5" stroke-linecap="round"/>
<path d="M973 465.7 L982 462.7" fill="none" stroke="#1c1c1c" stroke-width="0.5" stroke-linecap="round"/>
<path d="M982 462.7 L986.4 457.9" fill="none" stroke="#1c1c1c" stroke-width="0.5" stroke-linecap="round"/>
<path d="M982 462.7 L988.3 462.6" fill="none" stroke="#1c1c1c" stroke-width="0.5" stroke-linecap="round"/>
<path d="M964.9 520.6 L987.1 498.5" fill="none" stroke="#1c1c1c" stroke-width="1.364" stroke-linecap="round"/>
<path d="M987.1 498.5 L998.2 478.9" fill="none" stroke="#1c1c1c" stroke-width="0.84568" stroke-linecap="round"/>
<path d="M998.2 478.9 L996.6 464.9" fill="none" stroke="#1c1c1c" stroke-width="0.524322" stroke-linecap="round"/>
<path d="M996.6 464.9 L990.3 458.5" fill="none" stroke="#1c1c1c" stroke-width="0.5" stroke-linecap="round"/>
<path d="M990.3 458.5 L983.9 456.9" fill="none" stroke="#1c1c1c" stroke-width="0.5" stroke-linecap="round"/>
<path d="M990.3 458.5 L988.9 452.5" fill="none" stroke="#1c1c1c" stroke-width="0.5" stroke-linecap="round"/>
<path d="M996.6 464.9 L1000.1 455.3" fill="none" stroke="#1c1c1c" stroke-width="0.5" stroke-linecap="round"/>
<path d="M1000.1 455.3 L999.3 447.7" fill="none" stroke="#1c1c1c" stroke-width="0.5" stroke-linecap="round"/>
<path d="M1000.1 455.3 L1005.4 450.4" fill="none" stroke="#1c1c1c" stroke-width="0.5" stroke-linecap="round"/>
<path d="M998.2 478.9 L1009.8 467.2" fill="none" stroke="#1c1c1c" stroke-width="0.524322" stroke-linecap="round"/>
<path d="M1009.8 467.2 L1012.8 456.7" fill="none" stroke="#1c1c1c" stroke-width="0.5" stroke-linecap="round"/>
<path d="M1012.8 456.7 L1010 448.9" fill="none" stroke="#1c1c1c" stroke-width="0.5" stroke-linecap="round"/>
<path d="M1012.8 456.7 L1017.8 451.5" fill="none" stroke="#1c1c1c" stroke-width="0.5" stroke-linecap="round"/>
<path d="M1009.8 467.2 L1019.8 464" fill="none" stroke="#1c1c1c" stroke-width="0.5" stroke-linecap="round"/>
<path d="M1019.8 464 L1025.8 459.7" fill="none" stroke="#1c1c1c" stroke-width="0.5" stroke-linecap="round"/>
<path d="M1019.8 464 L1027.2 463.9" fill="none" stroke="#1c1c1c" stroke-width="0.5" stroke-linecap="round"/>
<path d="M987.1 498.5 L1005.9 493.1" fill="none" stroke="#1c1c1c" stroke-width="0.84568" stroke-linecap="round"/>
<path d="M1005.9 493.1 L1014.2 483.8" fill="none" stroke="#1c1c1c" stroke-width="0.524322" stroke-linecap="round"/>
<path d="M1014.2 483.8 L1015.2 474.4" fill="none" stroke="#1c1c1c" stroke-width="0.5" stroke-linecap="round"/>
<path d="M1015.2 474.4 L1012.9 468.9" fill="none" stroke="#1c1c1c" stroke-width="0.5" stroke-linecap="round"/>
<path d="M1015.2 474.4 L1018.9 469.1" fill="none" stroke="#1c1c1c" stroke-width="0.5" stroke-linecap="round"/>
<path d="M1014.2 483.8 L1022.1 482.8" fill="none" stroke="#1c1c1c" stroke-width="0.5" stroke-linecap="round"/>
<path d="M1022.1 482.8 L1026.6 478.2" fill="none" stroke="#1c1c1c" stroke-width="0.5" stroke-linecap="round"/>
<path d="M1022.1 482.8 L1027.6 485.8" fill="none" stroke="#1c1c1c" stroke-width="0.5" stroke-linecap="round"/>
<path d="M1005.9 493.1 L1021.5 494.2" fill="none" stroke="#1c1c1c" stroke-width="0.524322" stroke-linecap="round"/>
<path d="M1021.5 494.2 L1032.8 489.1" fill="none" stroke="#1c1c1c" stroke-width="0.5" stroke-linecap="round"/>
<path d="M1032.8 489.1 L1036.2 481.8" fill="none" stroke="#1c1c1c" stroke-width="0.5" stroke-linecap="round"/>
<path d="M1032.8 489.1 L1042.3 491.2" fill="none" stroke="#1c1c1c" stroke-width="0.5" stroke-linecap="round"/>
<path d="M1021.5 494.2 L1031.6 497.9" fill="none" stroke="#1c1c1c" stroke-width="0.5" stroke-linecap="round"/>
<path d="M1031.6 497.9 L1038.2 496" fill="none" stroke="#1c1c1c" stroke-width="0.5" stroke-linecap="round"/>
<path d="M1031.6 497.9 L1035.1 504.1" fill="none" stroke="#1c1c1c" stroke-width="0.5" stroke-linecap="round"/>
<path d="M983 520 L957 498.1" fill="none" stroke="#1c1c1c" stroke-width="2" stroke-linecap="round"/>
<path d="M957 498.1 L935 497.3" fill="none" stroke="#1c1c1c" stroke-width="1.24" stroke-linecap="round"/>
<path d="M935 497.3 L919.6 504.9" fill="none" stroke="#1c1c1c" stroke-width="0.7688" stroke-linecap="round"/>
<path d="M919.6 504.9 L911.7 513.3" fill="none" stroke="#1c1c1c" stroke-width="0.5" stroke-linecap="round"/>
<path d="M911.7 513.3 L909.7 520.9" fill="none" stroke="#1c1c1c" stroke-width="0.5" stroke-linecap="round"/>
<path d="M911.7 513.3 L905.2 517.2" fill="none" stroke="#1c1c1c" stroke-width="0.5" stroke-linecap="round"/>
<path d="M919.6 504.9 L906.1 506.7" fill="none" stroke="#1c1c1c" stroke-width="0.5" stroke-linecap="round"/>
<path d="M906.1 506.7 L898.1 513.7" fill="none" stroke="#1c1c1c" stroke-width="0.5" stroke-linecap="round"/>
<path d="M906.1 506.7 L895.9 504.6" fill="none" stroke="#1c1c1c" stroke-width="0.5" stroke-linecap="round"/>
<path d="M935 497.3 L920.2 491.9" fill="none" stroke="#1c1c1c" stroke-width="0.7688" stroke-linecap="round"/>
<path d="M920.2 491.9 L909.7 494.3" fill="none" stroke="#1c1c1c" stroke-width="0.5" stroke-linecap="round"/>
<path d="M909.7 494.3 L905 500.4" fill="none" stroke="#1c1c1c" stroke-width="0.5" stroke-linecap="round"/>
<path d="M909.7 494.3 L901.8 491.6" fill="none" stroke="#1c1c1c" stroke-width="0.5" stroke-linecap="round"/>
<path d="M920.2 491.9 L910.3 484.3" fill="none" stroke="#1c1c1c" stroke-width="0.5" stroke-linecap="round"/>
<path d="M910.3 484.3 L901.6 483.6" fill="none" stroke="#1c1c1c" stroke-width="0.5" stroke-linecap="round"/>
<path d="M910.3 484.3 L908 476.2" fill="none" stroke="#1c1c1c" stroke-width="0.5" stroke-linecap="round"/>
<path d="M957 498.1 L953.8 473.7" fill="none" stroke="#1c1c1c" stroke-width="1.24" stroke-linecap="round"/>
<path d="M953.8 473.7 L944 457.9" fill="none" stroke="#1c1c1c" stroke-width="0.7688" stroke-linecap="round"/>
<path d="M944 457.9 L933.5 451.6" fill="none" stroke="#1c1c1c" stroke-width="0.5" stroke-linecap="round"/>
<path d="M933.5 451.6 L925.9 452.2" fill="none" stroke="#1c1c1c" stroke-width="0.5" stroke-linecap="round"/>
<path d="M933.5 451.6 L930.6 444.1" fill="none" stroke="#1c1c1c" stroke-width="0.5" stroke-linecap="round"/>
<path d="M944 457.9 L944.1 443" fill="none" stroke="#1c1c1c" stroke-width="0.5" stroke-linecap="round"/>
<path d="M944.1 443 L938.6 433.6" fill="none" stroke="#1c1c1c" stroke-width="0.5" stroke-linecap="round"/>
<path d="M944.1 443 L947.9 434.6" fill="none" stroke="#1c1c1c" stroke-width="0.5" stroke-linecap="round"/>
<path d="M953.8 473.7 L956 458" fill="none" stroke="#1c1c1c" stroke-width="0.7688" stroke-linecap="round"/>
<path d="M956 458 L951.5 447.8" fill="none" stroke="#1c1c1c" stroke-width="0.5" stroke-linecap="round"/>
<path d="M951.5 447.8 L944.6 442.6" fill="none" stroke="#1c1c1c" stroke-width="0.5" stroke-linecap="round"/>
<path d="M951.5 447.8 L950.8 440.5" fill="none" stroke="#1c1c1c" stroke-width="0.5" stroke-linecap="round"/>
<path d="M956 458 L962.6 450.5" fill="none" stroke="#1c1c1c" stroke-width="0.5" stroke-linecap="round"/>
<path d="M962.6 450.5 L965.6 444.4" fill="none" stroke="#1c1c1c" stroke-width="0.5" stroke-linecap="round"/>
<path d="M962.6 450.5 L968.4 446.9" fill="none" stroke="#1c1c1c" stroke-width="0.5" stroke-linecap="round"/>
<path d="M950 640 L970 605.4" fill="none" stroke="#1c1c1c" stroke-width="2" stroke-linecap="round"/>
<path d="M970 605.4 L974.7 576.7" fill="none" stroke="#1c1c1c" stroke-width="1.24" stroke-linecap="round"/>
<path d="M974.7 576.7 L967.5 559.1" fill="none" stroke="#1c1c1c" stroke-width="0.7688" stroke-linecap="round"/>
<path d="M967.5 559.1 L956.7 551.2" fill="none" stroke="#1c1c1c" stroke-width="0.5" stroke-linecap="round"/>
<path d="M956.7 551.2 L946.6 548" fill="none" stroke="#1c1c1c" stroke-width="0.5" stroke-linecap="round"/>
<path d="M956.7 551.2 L951.9 543.9" fill="none" stroke="#1c1c1c" stroke-width="0.5" stroke-linecap="round"/>
<path d="M967.5 559.1 L966.4 545.1" fill="none" stroke="#1c1c1c" stroke-width="0.5" stroke-linecap="round"/>
<path d="M966.4 545.1 L958.9 537.5" fill="none" stroke="#1c1c1c" stroke-width="0.5" stroke-linecap="round"/>
<path d="M966.4 545.1 L969.7 536.4" fill="none" stroke="#1c1c1c" stroke-width="0.5" stroke-linecap="round"/>
<path d="M974.7 576.7 L983.3 557.2" fill="none" stroke="#1c1c1c" stroke-width="0.7688" stroke-linecap="round"/>
<path d="M983.3 557.2 L981.7 542.7" fill="none" stroke="#1c1c1c" stroke-width="0.5" stroke-linecap="round"/>
<path d="M981.7 542.7 L975.2 534.8" fill="none" stroke="#1c1c1c" stroke-width="0.5" stroke-linecap="round"/>
<path d="M981.7 542.7 L987.9 533.7" fill="none" stroke="#1c1c1c" stroke-width="0.5" stroke-linecap="round"/>
<path d="M983.3 557.2 L995.2 545.5" fill="none" stroke="#1c1c1c" stroke-width="0.5" stroke-linecap="round"/>
<path d="M995.2 545.5 L1001.1 535.1" fill="none" stroke="#1c1c1c" stroke-width="0.5" stroke-linecap="round"/>
<path d="M995.2 545.5 L1005.7 541.9" fill="none" stroke="#1c1c1c" stroke-width="0.5" stroke-linecap="round"/>
<path d="M970 605.4 L991.9 584.2" fill="none" stroke="#1c1c1c" stroke-width="1.24" stroke-linecap="round"/>
<path d="M991.9 584.2 L1003.2 565.6" fill="none" stroke="#1c1c1c" stroke-width="0.7688" stroke-linecap="round"/>
<path d="M1003.2 565.6 L1000.8 551.6" fill="none" stroke="#1c1c1c" stroke-width="0.5" stroke-linecap="round"/>
<path d="M1000.8 551.6 L995.6 542.7" fill="none" stroke="#1c1c1c" stroke-width="0.5" stroke-linecap="round"/>
<path d="M1000.8 551.6 L1004.2 541.8" fill="none" stroke="#1c1c1c" stroke-width="0.5" stroke-linecap="round"/>
<path d="M1003.2 565.6 L1016.5 560.4" fill="none" stroke="#1c1c1c" stroke-width="0.5" stroke-linecap="round"/>
<path d="M1016.5 560.4 L1023.4 553.7" fill="none" stroke="#1c1c1c" stroke-width="0.5" stroke-linecap="round"/>
<path d="M1016.5 560.4 L1027.6 559.4" fill="none" stroke="#1c1c1c" stroke-width="0.5" stroke-linecap="round"/>
<path d="M991.9 584.2 L1014.5 581.4" fill="none" stroke="#1c1c1c" stroke-width="0.7688" stroke-linecap="round"/>
<path d="M1014.5 581.4 L1030.8 574.8" fill="none" stroke="#1c1c1c" stroke-width="0.5" stroke-linecap="round"/>
<path d="M1030.8 574.8 L1037.4 564.4" fill="none" stroke="#1c1c1c" stroke-width="0.5" stroke-linecap="round"/>
<path d="M1030.8 574.8 L1042.8 577.8" fill="none" stroke="#1c1c1c" stroke-width="0.5" stroke-linecap="round"/>
<path d="M1014.5 581.4 L1028.6 584.8" fill="none" stroke="#1c1c1c" stroke-width="0.5" stroke-linecap="round"/>
<path d="M1028.6 584.8 L1037.6 583.6" fill="none" stroke="#1c1c1c" stroke-width="0.5" stroke-linecap="round"/>
<path d="M1028.6 584.8 L1037.3 591.5" fill="none" stroke="#1c1c1c" stroke-width="0.5" stroke-linecap="round"/>
</g>
<rect x="915" y="574" width="11" height="62" fill="#9aa0a4" opacity=".75"/>
<rect x="908" y="588" width="6" height="16" fill="#d08040" opacity=".8"/>
<path d="M934 480 L934 700" fill="none" stroke="#161414" stroke-width="11" />
<g opacity=".8">
<path d="M846 640 L845 560 L843 500" fill="none" stroke="#241e1c" stroke-width="2.4" />
<path d="M844 540 L820 516" fill="none" stroke="#2e2826" stroke-width="1.8" stroke-linecap="round"/>
<path d="M820 516 L794.2 511.1" fill="none" stroke="#2e2826" stroke-width="1.116" stroke-linecap="round"/>
<path d="M794.2 511.1 L778.1 518.2" fill="none" stroke="#2e2826" stroke-width="0.69192" stroke-linecap="round"/>
<path d="M778.1 518.2 L771 528.1" fill="none" stroke="#2e2826" stroke-width="0.5" stroke-linecap="round"/>
<path d="M771 528.1 L771.1 536.8" fill="none" stroke="#2e2826" stroke-width="0.5" stroke-linecap="round"/>
<path d="M771 528.1 L763.3 532.9" fill="none" stroke="#2e2826" stroke-width="0.5" stroke-linecap="round"/>
<path d="M778.1 518.2 L767.2 514.6" fill="none" stroke="#2e2826" stroke-width="0.5" stroke-linecap="round"/>
<path d="M767.2 514.6 L760.5 517.2" fill="none" stroke="#2e2826" stroke-width="0.5" stroke-linecap="round"/>
<path d="M767.2 514.6 L761.3 509.7" fill="none" stroke="#2e2826" stroke-width="0.5" stroke-linecap="round"/>
<path d="M794.2 511.1 L779.9 496" fill="none" stroke="#2e2826" stroke-width="0.69192" stroke-linecap="round"/>
<path d="M779.9 496 L766 493.4" fill="none" stroke="#2e2826" stroke-width="0.5" stroke-linecap="round"/>
<path d="M766 493.4 L757.7 498" fill="none" stroke="#2e2826" stroke-width="0.5" stroke-linecap="round"/>
<path d="M766 493.4 L756.7 487.6" fill="none" stroke="#2e2826" stroke-width="0.5" stroke-linecap="round"/>
<path d="M779.9 496 L776.9 480.9" fill="none" stroke="#2e2826" stroke-width="0.5" stroke-linecap="round"/>
<path d="M776.9 480.9 L768.2 472.1" fill="none" stroke="#2e2826" stroke-width="0.5" stroke-linecap="round"/>
<path d="M776.9 480.9 L780.3 469.5" fill="none" stroke="#2e2826" stroke-width="0.5" stroke-linecap="round"/>
<path d="M820 516 L815.1 490.1" fill="none" stroke="#2e2826" stroke-width="1.116" stroke-linecap="round"/>
<path d="M815.1 490.1 L803 474.4" fill="none" stroke="#2e2826" stroke-width="0.69192" stroke-linecap="round"/>
<path d="M803 474.4 L790.6 469.5" fill="none" stroke="#2e2826" stroke-width="0.5" stroke-linecap="round"/>
<path d="M790.6 469.5 L780.9 469.2" fill="none" stroke="#2e2826" stroke-width="0.5" stroke-linecap="round"/>
<path d="M790.6 469.5 L782.4 463" fill="none" stroke="#2e2826" stroke-width="0.5" stroke-linecap="round"/>
<path d="M803 474.4 L799 462.8" fill="none" stroke="#2e2826" stroke-width="0.5" stroke-linecap="round"/>
<path d="M799 462.8 L793.2 454.9" fill="none" stroke="#2e2826" stroke-width="0.5" stroke-linecap="round"/>
<path d="M799 462.8 L799.7 454.8" fill="none" stroke="#2e2826" stroke-width="0.5" stroke-linecap="round"/>
<path d="M815.1 490.1 L816.4 473.6" fill="none" stroke="#2e2826" stroke-width="0.69192" stroke-linecap="round"/>
<path d="M816.4 473.6 L810.3 463.1" fill="none" stroke="#2e2826" stroke-width="0.5" stroke-linecap="round"/>
<path d="M810.3 463.1 L802.1 459.1" fill="none" stroke="#2e2826" stroke-width="0.5" stroke-linecap="round"/>
<path d="M810.3 463.1 L808.3 454.5" fill="none" stroke="#2e2826" stroke-width="0.5" stroke-linecap="round"/>
<path d="M816.4 473.6 L822.5 462.6" fill="none" stroke="#2e2826" stroke-width="0.5" stroke-linecap="round"/>
<path d="M822.5 462.6 L821.1 452.8" fill="none" stroke="#2e2826" stroke-width="0.5" stroke-linecap="round"/>
<path d="M822.5 462.6 L829.5 455.6" fill="none" stroke="#2e2826" stroke-width="0.5" stroke-linecap="round"/>
<path d="M845 580 L819 565" fill="none" stroke="#2e2826" stroke-width="1.6" stroke-linecap="round"/>
<path d="M819 565 L795.7 569.3" fill="none" stroke="#2e2826" stroke-width="0.992" stroke-linecap="round"/>
<path d="M795.7 569.3 L782 576.6" fill="none" stroke="#2e2826" stroke-width="0.61504" stroke-linecap="round"/>
<path d="M782 576.6 L775.1 583.6" fill="none" stroke="#2e2826" stroke-width="0.5" stroke-linecap="round"/>
<path d="M775.1 583.6 L774.3 591" fill="none" stroke="#2e2826" stroke-width="0.5" stroke-linecap="round"/>
<path d="M775.1 583.6 L767.8 585.2" fill="none" stroke="#2e2826" stroke-width="0.5" stroke-linecap="round"/>
<path d="M782 576.6 L771.5 575.8" fill="none" stroke="#2e2826" stroke-width="0.5" stroke-linecap="round"/>
<path d="M771.5 575.8 L765 577.3" fill="none" stroke="#2e2826" stroke-width="0.5" stroke-linecap="round"/>
<path d="M771.5 575.8 L766.3 571.3" fill="none" stroke="#2e2826" stroke-width="0.5" stroke-linecap="round"/>
<path d="M795.7 569.3 L779.6 565.6" fill="none" stroke="#2e2826" stroke-width="0.61504" stroke-linecap="round"/>
<path d="M779.6 565.6 L768.6 566" fill="none" stroke="#2e2826" stroke-width="0.5" stroke-linecap="round"/>
<path d="M768.6 566 L761.2 569.4" fill="none" stroke="#2e2826" stroke-width="0.5" stroke-linecap="round"/>
<path d="M768.6 566 L761.8 563.1" fill="none" stroke="#2e2826" stroke-width="0.5" stroke-linecap="round"/>
<path d="M779.6 565.6 L772.9 556" fill="none" stroke="#2e2826" stroke-width="0.5" stroke-linecap="round"/>
<path d="M772.9 556 L764.7 553.6" fill="none" stroke="#2e2826" stroke-width="0.5" stroke-linecap="round"/>
<path d="M772.9 556 L770.1 548.4" fill="none" stroke="#2e2826" stroke-width="0.5" stroke-linecap="round"/>
<path d="M819 565 L806.6 545.9" fill="none" stroke="#2e2826" stroke-width="0.992" stroke-linecap="round"/>
<path d="M806.6 545.9 L792.2 536.8" fill="none" stroke="#2e2826" stroke-width="0.61504" stroke-linecap="round"/>
<path d="M792.2 536.8 L781 536.2" fill="none" stroke="#2e2826" stroke-width="0.5" stroke-linecap="round"/>
<path d="M781 536.2 L775.3 540.4" fill="none" stroke="#2e2826" stroke-width="0.5" stroke-linecap="round"/>
<path d="M781 536.2 L775.5 531.5" fill="none" stroke="#2e2826" stroke-width="0.5" stroke-linecap="round"/>
<path d="M792.2 536.8 L784.6 528.6" fill="none" stroke="#2e2826" stroke-width="0.5" stroke-linecap="round"/>
<path d="M784.6 528.6 L775.9 527" fill="none" stroke="#2e2826" stroke-width="0.5" stroke-linecap="round"/>
<path d="M784.6 528.6 L780.8 521.7" fill="none" stroke="#2e2826" stroke-width="0.5" stroke-linecap="round"/>
<path d="M806.6 545.9 L805.1 528.6" fill="none" stroke="#2e2826" stroke-width="0.61504" stroke-linecap="round"/>
<path d="M805.1 528.6 L800 517.4" fill="none" stroke="#2e2826" stroke-width="0.5" stroke-linecap="round"/>
<path d="M800 517.4 L792.9 511.1" fill="none" stroke="#2e2826" stroke-width="0.5" stroke-linecap="round"/>
<path d="M800 517.4 L799.6 507.7" fill="none" stroke="#2e2826" stroke-width="0.5" stroke-linecap="round"/>
<path d="M805.1 528.6 L808.6 517.7" fill="none" stroke="#2e2826" stroke-width="0.5" stroke-linecap="round"/>
<path d="M808.6 517.7 L806.3 509.9" fill="none" stroke="#2e2826" stroke-width="0.5" stroke-linecap="round"/>
<path d="M808.6 517.7 L813.4 510.8" fill="none" stroke="#2e2826" stroke-width="0.5" stroke-linecap="round"/>
<path d="M843 500 L832.1 469.9" fill="none" stroke="#2e2826" stroke-width="1.7" stroke-linecap="round"/>
<path d="M832.1 469.9 L817.5 450.4" fill="none" stroke="#2e2826" stroke-width="1.054" stroke-linecap="round"/>
<path d="M817.5 450.4 L800 444.3" fill="none" stroke="#2e2826" stroke-width="0.65348" stroke-linecap="round"/>
<path d="M800 444.3 L787.6 447.2" fill="none" stroke="#2e2826" stroke-width="0.5" stroke-linecap="round"/>
<path d="M787.6 447.2 L780.8 452.7" fill="none" stroke="#2e2826" stroke-width="0.5" stroke-linecap="round"/>
<path d="M787.6 447.2 L780.4 443.6" fill="none" stroke="#2e2826" stroke-width="0.5" stroke-linecap="round"/>
<path d="M800 444.3 L794 434.4" fill="none" stroke="#2e2826" stroke-width="0.5" stroke-linecap="round"/>
<path d="M794 434.4 L787.9 429.6" fill="none" stroke="#2e2826" stroke-width="0.5" stroke-linecap="round"/>
<path d="M794 434.4 L795.2 426.2" fill="none" stroke="#2e2826" stroke-width="0.5" stroke-linecap="round"/>
<path d="M817.5 450.4 L813.7 431.8" fill="none" stroke="#2e2826" stroke-width="0.65348" stroke-linecap="round"/>
<path d="M813.7 431.8 L806.6 420.5" fill="none" stroke="#2e2826" stroke-width="0.5" stroke-linecap="round"/>
<path d="M806.6 420.5 L797.7 415.8" fill="none" stroke="#2e2826" stroke-width="0.5" stroke-linecap="round"/>
<path d="M806.6 420.5 L807.2 410.7" fill="none" stroke="#2e2826" stroke-width="0.5" stroke-linecap="round"/>
<path d="M813.7 431.8 L816.6 419.2" fill="none" stroke="#2e2826" stroke-width="0.5" stroke-linecap="round"/>
<path d="M816.6 419.2 L815.6 409.3" fill="none" stroke="#2e2826" stroke-width="0.5" stroke-linecap="round"/>
<path d="M816.6 419.2 L823.6 412.5" fill="none" stroke="#2e2826" stroke-width="0.5" stroke-linecap="round"/>
<path d="M832.1 469.9 L831.7 447.6" fill="none" stroke="#2e2826" stroke-width="1.054" stroke-linecap="round"/>
<path d="M831.7 447.6 L821.9 434.7" fill="none" stroke="#2e2826" stroke-width="0.65348" stroke-linecap="round"/>
<path d="M821.9 434.7 L812.6 428.2" fill="none" stroke="#2e2826" stroke-width="0.5" stroke-linecap="round"/>
<path d="M812.6 428.2 L805 428.8" fill="none" stroke="#2e2826" stroke-width="0.5" stroke-linecap="round"/>
<path d="M812.6 428.2 L808.1 421.9" fill="none" stroke="#2e2826" stroke-width="0.5" stroke-linecap="round"/>
<path d="M821.9 434.7 L821.3 422.2" fill="none" stroke="#2e2826" stroke-width="0.5" stroke-linecap="round"/>
<path d="M821.3 422.2 L818.3 414.7" fill="none" stroke="#2e2826" stroke-width="0.5" stroke-linecap="round"/>
<path d="M821.3 422.2 L824 414.1" fill="none" stroke="#2e2826" stroke-width="0.5" stroke-linecap="round"/>
<path d="M831.7 447.6 L838.7 434.8" fill="none" stroke="#2e2826" stroke-width="0.65348" stroke-linecap="round"/>
<path d="M838.7 434.8 L839.4 425.3" fill="none" stroke="#2e2826" stroke-width="0.5" stroke-linecap="round"/>
<path d="M839.4 425.3 L835.1 419.7" fill="none" stroke="#2e2826" stroke-width="0.5" stroke-linecap="round"/>
<path d="M839.4 425.3 L842.3 418.4" fill="none" stroke="#2e2826" stroke-width="0.5" stroke-linecap="round"/>
<path d="M838.7 434.8 L845.8 427.8" fill="none" stroke="#2e2826" stroke-width="0.5" stroke-linecap="round"/>
<path d="M845.8 427.8 L846.2 420.2" fill="none" stroke="#2e2826" stroke-width="0.5" stroke-linecap="round"/>
<path d="M845.8 427.8 L852.7 426.7" fill="none" stroke="#2e2826" stroke-width="0.5" stroke-linecap="round"/>
<path d="M846 600 L865.7 586.2" fill="none" stroke="#2e2826" stroke-width="1.5" stroke-linecap="round"/>
<path d="M865.7 586.2 L875.8 571.8" fill="none" stroke="#2e2826" stroke-width="0.93" stroke-linecap="round"/>
<path d="M875.8 571.8 L879.3 560.8" fill="none" stroke="#2e2826" stroke-width="0.5766" stroke-linecap="round"/>
<path d="M879.3 560.8 L878.3 553.6" fill="none" stroke="#2e2826" stroke-width="0.5" stroke-linecap="round"/>
<path d="M879.3 560.8 L885.4 554.3" fill="none" stroke="#2e2826" stroke-width="0.5" stroke-linecap="round"/>
<path d="M875.8 571.8 L887.5 567.4" fill="none" stroke="#2e2826" stroke-width="0.5766" stroke-linecap="round"/>
<path d="M887.5 567.4 L892.8 560.3" fill="none" stroke="#2e2826" stroke-width="0.5" stroke-linecap="round"/>
<path d="M887.5 567.4 L896.6 567" fill="none" stroke="#2e2826" stroke-width="0.5" stroke-linecap="round"/>
<path d="M865.7 586.2 L883.5 583.4" fill="none" stroke="#2e2826" stroke-width="0.93" stroke-linecap="round"/>
<path d="M883.5 583.4 L891.7 573.8" fill="none" stroke="#2e2826" stroke-width="0.5766" stroke-linecap="round"/>
<path d="M891.7 573.8 L893.3 564.4" fill="none" stroke="#2e2826" stroke-width="0.5" stroke-linecap="round"/>
<path d="M891.7 573.8 L899.4 570.5" fill="none" stroke="#2e2826" stroke-width="0.5" stroke-linecap="round"/>
<path d="M883.5 583.4 L896.2 589.5" fill="none" stroke="#2e2826" stroke-width="0.5766" stroke-linecap="round"/>
<path d="M896.2 589.5 L906.5 587.6" fill="none" stroke="#2e2826" stroke-width="0.5" stroke-linecap="round"/>
<path d="M896.2 589.5 L900.6 599" fill="none" stroke="#2e2826" stroke-width="0.5" stroke-linecap="round"/>
</g>
<polygon points="365,672 400,664 432,650 500,648 560,664 575,690 610,690 700,688 800,686 802,650 826,644 853,638 983,640 983,906 365,906" fill="url(#dark)" />
<path d="M385 672v-34q1-16 10-18q10 2 11 18v34z" fill="#232527" opacity=".9"/>
<rect x="563" y="640" width="44" height="50" fill="#b4b4b2" />
<rect x="583" y="650" width="7" height="40" fill="#4a4c4e" />
<rect x="612" y="655" width="28" height="31" fill="#4c4e52" />
<rect x="645" y="660" width="55" height="28" fill="#3a3634" />
<path d="M704 634q4-2 6 2l1 6 5 14 2 16-3 4 3 14h-4l-5-12-4 14h-4l3-20-3-8 1-18z" fill="#1c1618"/>
<path d="M575 690v-14q3-8 6 0v14z" fill="#1e1e20"/><circle cx="578" cy="662" r="2.200" fill="#1e1e20"/>
<path d="M583 690v-14q3-8 6 0v14z" fill="#1e1e20"/><circle cx="586" cy="664" r="2.200" fill="#1e1e20"/>
<path d="M593 690v-14q3-8 6 0v14z" fill="#1e1e20"/><circle cx="596" cy="666" r="2.200" fill="#1e1e20"/>
<path d="M745 690v-22q4-20 24-24h22l8 20v26z" fill="#1e2228"/><rect x="738" y="674" width="14" height="12" rx="3" fill="#c8ccd0" opacity=".7"/>
<rect x="792" y="655" width="10" height="35" fill="#c0c4c8" opacity=".5"/>
<path d="M840 648q2-12 15-12t15 12z" fill="#c42a20"/><path d="M884 665v-24q2-12 9-13q8 1 9 13v24z" fill="#1f4fa8"/>
<rect x="940" y="652" width="27" height="71" fill="#8c7048" />
<rect x="944" y="662" width="19" height="43" fill="#a08458" opacity=".6"/>
<rect x="914" y="655" width="14" height="60" fill="#5a4c38" opacity=".8"/>
<rect x="968" y="640" width="15" height="60" fill="#6a7478" opacity=".7"/>
<polygon points="365,700 983,700 983,906 365,906" fill="#1d2326" />
<polygon points="561.4,705.5 365,748 365,766 567,705.5" fill="#2c4341" />
<polygon points="567,705.5 365,766 365,790 594,705.5" fill="#7c3529" />
<polygon points="594,705.5 365,790 365,819 615.7,705.5" fill="#6b4129" />
<polygon points="615.7,705.5 365,819 365,865.6 652.6,705.5" fill="#ab873f" />
<polygon points="652.6,705.5 365,865.6 365,906 410.4,906 669,705.5" fill="#0f5d63" />
<polygon points="669,705.5 410.4,906 539.2,906 678,715.5 685,706 669,705.5" fill="#16558c" />
<polygon points="678,715.5 539.2,906 597.1,906 670.4,774 700,722 686,706" fill="#3f2339" />
<linearGradient id="stsh" x1="365" y1="0" x2="700" y2="0" gradientUnits="userSpaceOnUse"><stop offset="0" stop-color="#000" stop-opacity=".22"/><stop offset=".35" stop-color="#000" stop-opacity="0"/><stop offset="1" stop-color="#000" stop-opacity=".1"/></linearGradient>
<polygon points="365,705 700,705 700,906 365,906" fill="url(#stsh)" />
<polygon points="365,705 983,705 983,906 365,906" fill="url(#shade)" />
<polygon points="700,722 670.4,774 640,830 640,906 983,906 983,700 686,700" fill="#1d2327" opacity=".0"/>
<path d="M693 712.4 L868 712.4" fill="none" stroke="#74787a" stroke-width="1.7" opacity=".8"/>
<path d="M676 725 L889 725" fill="none" stroke="#74787a" stroke-width="1.7" opacity=".8"/>
<path d="M699 742.5 L864 742.5" fill="none" stroke="#74787a" stroke-width="1.7" opacity=".8"/>
<path d="M705 746.5 L864 746.5" fill="none" stroke="#74787a" stroke-width="1.7" opacity=".8"/>
<path d="M676 763.8 L748 763.8" fill="none" stroke="#74787a" stroke-width="1.7" opacity=".8"/>
<rect x="700" y="713" width="166" height="7" fill="#34383a" opacity=".7"/>
<rect x="680" y="726" width="208" height="6" fill="#34383a" opacity=".7"/>
<rect x="688" y="735" width="10" height="56" fill="#121518" />
<rect x="706" y="690" width="6" height="22" fill="#14161a" />
<path d="M762 690 L762 672 L768 664 L782 664" fill="none" stroke="#8a9094" stroke-width="2.4" opacity=".7"/>
<rect x="786" y="655" width="14" height="33" fill="#c8ccd0" opacity=".55"/>
<rect x="868" y="668" width="44" height="22" fill="#1a1c20" />
<rect x="876" y="672" width="4" height="12" fill="#a0a4a8" opacity=".7"/>
<rect x="902" y="672" width="4" height="12" fill="#a0a4a8" opacity=".7"/>
<ellipse cx="835" cy="764.500" rx="87" ry="4.500" fill="#242b2e" stroke="#5f6666" stroke-width="1.400"/>
<path d="M798 784q0 70 40 80h76q36-14 37-80z" fill="#232a2d"/><ellipse cx="874" cy="783.500" rx="77" ry="7.500" fill="#30383b" stroke="#4c5456" stroke-width="1.300"/>
<path d="M688 797q6 54 40 60h70v-60z" fill="#262d30"/><path d="M688 796.500h110" stroke="#566060" stroke-width="1.500"/>
<path d="M848.4 707.6 L855 735" fill="none" stroke="#157a98" stroke-width="3" />
<path d="M855 735 L862 762" fill="none" stroke="#1aa6c8" stroke-width="3.6" />
<path d="M933.8 640 L933.8 774" fill="none" stroke="#121416" stroke-width="11.5" />
</g>
</svg><!--/PHOTO-->
<div id="ctb">
<svg class="abs" style="left:0;top:0" width="478" height="39" viewBox="434.500 868 478 39">
<rect x="438.500" y="873.5" width="5" height="2.800" fill="#e8e8e8"/>
<rect x="438.500" y="878.5" width="5" height="2.800" fill="#e8e8e8"/>
<rect x="438.500" y="883.5" width="5" height="2.800" fill="#e8e8e8"/>
<rect x="438.500" y="888.5" width="5" height="2.800" fill="#e8e8e8"/>
<rect x="438.500" y="893.5" width="5" height="2.800" fill="#e8e8e8"/>
<rect x="438.500" y="898.5" width="5" height="2.800" fill="#e8e8e8"/>
<rect x="453.500" y="872.500" width="139.500" height="30.500" fill="none" stroke="#6e6e6e" stroke-width="1"/>
<rect x="599.500" y="872.500" width="179" height="30.500" fill="none" stroke="#6e6e6e" stroke-width="1"/>
<circle cx="475.500" cy="884.500" r="3.300" fill="#e0e0e0"/><path d="M469.500 894.500q0-5.500 6-5.500t6 5.500z" fill="#e0e0e0"/><path d="M468 893q-1-12 7.500-13.500q8.500 1.500 7.500 13.500" fill="none" stroke="#cfcfcf" stroke-width="1" stroke-dasharray="1.600 1.400"/>
<rect x="612" y="880.500" width="18" height="14" fill="#e6e6e6"/><g fill="#555"><rect x="613" y="881.500" width="3.500" height="3.500"/><rect x="620" y="881.500" width="3.500" height="3.500"/><rect x="616.500" y="885" width="3.500" height="3.500"/><rect x="623.500" y="885" width="3.500" height="3.500"/></g><path d="M613 893.500l5-5.500 4 4 3-2.500 4 4z" fill="#555"/><rect x="625.500" y="878" width="6" height="6" fill="#2d7ff0"/>
<path d="M799 882.500l9 1.500 1.500 9-12 1.500z" fill="none" stroke="#a8a8a8" stroke-width="1.300"/><g fill="#a8a8a8"><rect x="797.700" y="881.200" width="2.600" height="2.600"/><rect x="806.700" y="882.700" width="2.600" height="2.600"/><rect x="808.200" y="891.700" width="2.600" height="2.600"/><rect x="796.200" y="893.200" width="2.600" height="2.600"/></g>
<circle cx="848" cy="888" r="6.800" fill="none" stroke="#ececec" stroke-width="1.400"/><path d="M843.200 892.800a6.800 6.800 0 0 0 9.600-9.600z" fill="#ececec"/>
<circle cx="885.500" cy="888" r="1.800" fill="#ececec"/><circle cx="891.500" cy="888" r="1.800" fill="#ececec"/><circle cx="897.500" cy="888" r="1.800" fill="#ececec"/>
</svg>
<div class="txt" style="left:54px;top:10.500px;font-size:14.500px;line-height:18px;color:#f4f4f4">Select subject</div>
<div class="txt" style="left:202px;top:10.500px;font-size:14.500px;line-height:18px;color:#f4f4f4">Remove background</div>
</div>
<div id="vscroll"><div class="abs" style="left:3px;top:248px;width:11px;height:289px;border-radius:2px;background:#6a6a6a"></div></div>
<div id="status">
<div class="abs" style="left:0;top:0;width:74px;height:18px;background:#424242"></div>
<div class="txt" style="left:21px;top:2px;font-size:14.500px;line-height:17px;color:#f0f0f0">50%</div>
<div class="txt" style="left:94px;top:2px;font-size:12.500px;line-height:15px;color:#e0e0e0">2160 px x 2700 px (72 ppi)</div>
<svg class="abs" style="left:268px;top:4px" width="8" height="12" viewBox="0 0 8 12"><path d="M2 1.500l4 4.500-4 4.500" fill="none" stroke="#ddd" stroke-width="1.300"/></svg>
<div class="abs" style="left:290px;top:3px;width:964px;height:15px;background:#454545"></div>
<div class="abs" style="left:558px;top:4px;width:418px;height:11px;border-radius:2px;background:#6a6a6a"></div>
</div>
<div id="rightbg">
<div class="abs" style="left:0;top:0;width:330px;height:14px;background:#424242"></div>
<div class="txt" style="left:29px;top:0;font-size:14px;line-height:13px;color:#ccc;letter-spacing:-1.500px;font-weight:bold">‹‹</div>
<div class="txt" style="left:312px;top:0;font-size:14px;line-height:13px;color:#ccc;letter-spacing:-1.500px;font-weight:bold">››</div>
<div class="abs" style="left:2px;top:14px;width:43.500px;height:77px;background:#535353"></div>
<div class="abs" style="left:2px;top:94px;width:43.500px;height:76px;background:#535353"></div>
<div class="abs" style="left:2px;top:173px;width:43.500px;height:76px;background:#535353"></div>
<div class="abs" style="left:2px;top:252px;width:43.500px;height:44px;background:#535353"></div>
<div class="abs" style="left:2px;top:299px;width:43.500px;height:45px;background:#535353"></div>
<div class="abs" style="left:2px;top:347px;width:43.500px;height:490px;background:#535353"></div>
<div class="abs" style="left:47px;top:14px;width:283px;height:30px;background:#424242"></div>
<div class="abs" style="left:47px;top:44px;width:283px;height:113px;background:#535353"></div>
<div class="abs" style="left:47px;top:14px;width:84px;height:31px;background:#535353"></div>
<div class="txt" style="left:58px;top:22px;font-size:12.500px;line-height:15px;font-weight:bold;color:#f2f2f2">Histogram</div>
<div class="abs" style="left:131px;top:14px;width:79px;height:30px;background:#484848;border-right:1px solid #3a3a3a"></div>
<div class="txt" style="left:141px;top:22px;font-size:12.500px;line-height:15px;font-weight:bold;color:#bdbdbd">Navigator</div>
<svg class="abs" style="left:311px;top:24px" width="12" height="11" viewBox="0 0 12 11"><path d="M0 1.500h12M0 4.200h12M0 6.900h12M0 9.600h12" stroke="#bbb" stroke-width="1.100"/></svg>
<div class="abs" style="left:47px;top:160px;width:283px;height:30px;background:#424242"></div>
<div class="abs" style="left:47px;top:190px;width:283px;height:308px;background:#535353"></div>
<div class="abs" style="left:47px;top:160px;width:74px;height:30px;background:#484848;border-right:1px solid #3a3a3a"></div>
<div class="txt" style="left:58px;top:168px;font-size:12.500px;line-height:15px;font-weight:bold;color:#bdbdbd">Libraries</div>
<div class="abs" style="left:121px;top:160px;width:97px;height:31px;background:#535353"></div>
<div class="txt" style="left:132px;top:168px;font-size:12.500px;line-height:15px;font-weight:bold;color:#f2f2f2">Adjustments</div>
<svg class="abs" style="left:311px;top:170px" width="12" height="11" viewBox="0 0 12 11"><path d="M0 1.500h12M0 4.200h12M0 6.900h12M0 9.600h12" stroke="#bbb" stroke-width="1.100"/></svg>
<div class="abs" style="left:47px;top:501px;width:283px;height:30px;background:#424242"></div>
<div class="abs" style="left:47px;top:531px;width:283px;height:306px;background:#535353"></div>
<div class="abs" style="left:47px;top:501px;width:61px;height:31px;background:#535353"></div>
<div class="txt" style="left:58px;top:509px;font-size:12.500px;line-height:15px;font-weight:bold;color:#f2f2f2">Layers</div>
<div class="abs" style="left:108px;top:501px;width:75px;height:30px;background:#484848;border-right:1px solid #3a3a3a"></div>
<div class="txt" style="left:118px;top:509px;font-size:12.500px;line-height:15px;font-weight:bold;color:#bdbdbd">Channels</div>
<div class="abs" style="left:183px;top:501px;width:55px;height:30px;background:#484848;border-right:1px solid #3a3a3a"></div>
<div class="txt" style="left:193px;top:509px;font-size:12.500px;line-height:15px;font-weight:bold;color:#bdbdbd">Paths</div>
<svg class="abs" style="left:311px;top:511px" width="12" height="11" viewBox="0 0 12 11"><path d="M0 1.500h12M0 4.200h12M0 6.900h12M0 9.600h12" stroke="#bbb" stroke-width="1.100"/></svg>
</div>
<svg class="abs" style="left:1320px;top:93px;z-index:3" width="330" height="837" viewBox="1320 93 330 837">
<g stroke="#dcdcdc" stroke-width="1.400" fill="#535353"><path d="M1335 127h17.500M1335 133h17.500M1335 139h17.500"/><circle cx="1340" cy="127" r="2.200"/><circle cx="1348" cy="133" r="2.200"/><circle cx="1341.500" cy="139" r="2.200"/></g>
<circle cx="1343.5" cy="166" r="8.500" fill="none" stroke="#dcdcdc" stroke-width="1.500"/><path d="M1343.5 164.500v6.500" stroke="#dcdcdc" stroke-width="1.700"/><circle cx="1343.5" cy="161.300" r="1.100" fill="#dcdcdc"/>
<path d="M1344 204c-5.500 0-10 3.500-10 8s4 7.500 8.500 7.500c2 0 2.500-1.500 1.800-2.800-.8-1.700.5-3 2.200-3h3c2.500 0 4.500-1.300 4.500-3.700 0-3.500-4.500-6-10-6z" fill="#dcdcdc"/><g fill="#535353"><circle cx="1338.500" cy="213.500" r="1.400"/><circle cx="1339.500" cy="209" r="1.400"/><circle cx="1343.500" cy="207" r="1.400"/><circle cx="1348" cy="207.800" r="1.400"/><circle cx="1350.500" cy="210.800" r="1.300"/></g>
<rect x="1335" y="236" width="17.500" height="15" fill="#3a3a3a" stroke="#dcdcdc" stroke-width="1.400"/><path d="M1335 241h17.500M1335 246h17.500M1341 236v15M1347 236v15" stroke="#dcdcdc" stroke-width="1.300"/><rect x="1335.700" y="236.700" width="16" height="3.800" fill="#bbb" opacity=".6"/>
<g fill="#dcdcdc"><rect x="1333" y="283" width="2" height="2"/><rect x="1333" y="287" width="2" height="2"/><rect x="1333" y="291" width="2" height="2"/><rect x="1336.500" y="283.300" width="4.500" height="1.400"/><rect x="1336.500" y="287.300" width="4.500" height="1.400"/><rect x="1336.500" y="291.300" width="4.500" height="1.400"/><path d="M1356 284.500l-9 9 1.500 1.500z"/><path d="M1346 294.500c-2.500-.5-4 1-4.300 2.700-.2 1.200-1 2-2 2.500 2.800.8 6.300.4 7.600-2.200.5-1.100-.2-2.400-1.300-3z"/></g>
<g fill="#dcdcdc"><path d="M1332 317.500c2-2.500 5.500-3 8-1.500v3c-2.500 1.500-6 1-8-1.500z"/><rect x="1340" y="316.500" width="12" height="2"/><rect x="1333.500" y="326.500" width="8" height="2"/><rect x="1341.500" y="325.800" width="3.500" height="3.400"/><path d="M1345 327.500l7.500-5.500c2 3 2 8 0 11z"/></g>
<g fill="#dcdcdc"><rect x="1333" y="363" width="2" height="2"/><rect x="1333" y="367" width="2" height="2"/><rect x="1333" y="371" width="2" height="2"/><rect x="1336.500" y="363.300" width="4.500" height="1.400"/><rect x="1336.500" y="367.300" width="4.500" height="1.400"/><rect x="1336.500" y="371.300" width="4.500" height="1.400"/><path d="M1345 366a2.500 2.500 0 1 1 5 0c0 1.800-1 2.500-1 5h4.500v3.500h-12V371h4.500c0-2.500-1-3.200-1-5z"/><rect x="1340" y="376" width="15" height="1.800"/></g>
<path d="M1343.500 406l10.500 6v12l-10.500 6-10.500-6v-12z" fill="#1a6cf0"/><path d="M1343.500 409.500l7 4v8l-7 4v4l-3.500-2v-14z" fill="#e8f0ff"/><path d="M1343.500 413.500l3.800 2.200v4.400l-3.800 2.200-3.800-2.200v-4.400z" fill="#1a6cf0"/>
<rect x="1377" y="147" width="222" height="97" fill="#424242"/>
<defs><linearGradient id="hg" x1="0" y1="0" x2="1" y2="0"><stop offset="0" stop-color="#c030e0"/><stop offset=".04" stop-color="#e03030"/><stop offset=".1" stop-color="#e8e030"/><stop offset=".17" stop-color="#30e030"/><stop offset=".26" stop-color="#20d0e0"/><stop offset=".33" stop-color="#2030e0"/><stop offset=".45" stop-color="#20c0e0"/><stop offset=".6" stop-color="#30e030"/><stop offset=".7" stop-color="#e8e030"/><stop offset=".8" stop-color="#e83020"/><stop offset=".9" stop-color="#e02020"/><stop offset=".93" stop-color="#30e080"/><stop offset="1" stop-color="#20d0e0"/></linearGradient></defs>
<clipPath id="hclip"><rect x="1377" y="147" width="222" height="97"/></clipPath><path clip-path="url(#hclip)" d="M1379 242 L1381 210 L1384 160 L1386 147 L1393 147 L1396 165 L1401 195 L1406 213 L1410 221 L1415 226 L1420 226 L1426 229 L1432 232 L1440 235 L1450 237 L1465 238.500 L1480 239 L1500 238 L1512 238 L1525 239.500 L1540 240 L1552 239 L1558 233 L1562 215 L1565 180 L1567 147 L1577 147 L1579 175 L1581 215 L1583 238 L1584 242 Z" fill="#76807a"/>
<clipPath id="hclip"><rect x="1377" y="147" width="222" height="97"/></clipPath><path clip-path="url(#hclip)" d="M1379 242 L1381 210 L1384 160 L1386 147 L1393 147 L1396 165 L1401 195 L1406 213 L1410 221 L1415 226 L1420 226 L1426 229 L1432 232 L1440 235 L1450 237 L1465 238.500 L1480 239 L1500 238 L1512 238 L1525 239.500 L1540 240 L1552 239 L1558 233 L1562 215 L1565 180 L1567 147 L1577 147 L1579 175 L1581 215 L1583 238 L1584 242" fill="none" stroke="url(#hg)" stroke-width="2.200"/>
<path d="M1408 217l2-5 3-2 3 1 3-3 3 1 2 4 1 6-3 0-4 2-4-1-3 1z" fill="#20e020"/>
<path d="M1429 222l6 0 6 2 5 4 4 6-6 0-6-2-5-3z" fill="#2028e0"/>
<path d="M1412 224l8-1 8 3 6 5 8 4-8 0-10-4-8-3z" fill="#20d8e8"/>
<path d="M1500 235l10-1.500 10 0 6 2-8 1.500-18 0z" fill="#30e030"/>
<path d="M1550 239l6-3 4-12 2 0 0 15z" fill="#e82818"/>
<path d="M1586 155l6.500 12h-13z" fill="#ddd"/><path d="M1586 159.500v4" stroke="#333" stroke-width="1.400"/><circle cx="1586" cy="165.200" r=".8" fill="#333"/>
</svg>
<svg class="abs" style="left:1367px;top:283px;z-index:3" width="283" height="308" viewBox="1367 283 283 308">
<defs><linearGradient id="tg1" x1="0" y1="0" x2="0" y2="1"><stop offset="0" stop-color="#cbbcb4"/><stop offset=".22" stop-color="#e8bc90"/><stop offset=".42" stop-color="#f2a860"/><stop offset=".56" stop-color="#e07830"/><stop offset=".6" stop-color="#2a1a14"/><stop offset=".66" stop-color="#1a1010"/><stop offset=".7" stop-color="#d87838"/><stop offset=".82" stop-color="#d87838"/><stop offset="1" stop-color="#c4b08a"/></linearGradient><clipPath id="ctg1"><rect x="1382" y="380" width="50" height="51" rx="3"/></clipPath></defs>
<g clip-path="url(#ctg1)"><rect x="1382" y="380" width="50" height="51" fill="url(#tg1)"/>
<g fill="#3a2414"><ellipse cx="1397" cy="404" rx="4.500" ry="3.500" opacity=".8"/><ellipse cx="1405.5" cy="403.5" rx="4.500" ry="4" opacity=".9"/><ellipse cx="1415.5" cy="402" rx="6.500" ry="5"/><rect x="1396.5" y="406" width="1" height="5"/><rect x="1405" y="406" width="1.200" height="5"/><rect x="1415" y="405" width="1.400" height="6"/>
<rect x="1382" y="410" width="50" height="3.500" fill="#140c0c"/>
<g opacity=".72"><ellipse cx="1397" cy="419" rx="4.500" ry="3.200"/><ellipse cx="1405.5" cy="419.5" rx="4.500" ry="3.800"/><ellipse cx="1415.5" cy="421" rx="6.500" ry="4.800"/></g></g>
</g>
<defs><linearGradient id="tg2" x1="0" y1="0" x2="0" y2="1"><stop offset="0" stop-color="#cdbdb2"/><stop offset=".22" stop-color="#e6b88c"/><stop offset=".42" stop-color="#eca662"/><stop offset=".56" stop-color="#d8803c"/><stop offset=".6" stop-color="#2a1a14"/><stop offset=".66" stop-color="#1a1010"/><stop offset=".7" stop-color="#c88444"/><stop offset=".82" stop-color="#c88444"/><stop offset="1" stop-color="#bfae88"/></linearGradient><clipPath id="ctg2"><rect x="1437" y="380" width="50" height="51" rx="3"/></clipPath></defs>
<g clip-path="url(#ctg2)"><rect x="1437" y="380" width="50" height="51" fill="url(#tg2)"/>
<g fill="#3a2414"><ellipse cx="1452" cy="404" rx="4.500" ry="3.500" opacity=".8"/><ellipse cx="1460.5" cy="403.5" rx="4.500" ry="4" opacity=".9"/><ellipse cx="1470.5" cy="402" rx="6.500" ry="5"/><rect x="1451.5" y="406" width="1" height="5"/><rect x="1460" y="406" width="1.200" height="5"/><rect x="1470" y="405" width="1.400" height="6"/>
<rect x="1437" y="410" width="50" height="3.500" fill="#140c0c"/>
<g opacity=".72"><ellipse cx="1452" cy="419" rx="4.500" ry="3.200"/><ellipse cx="1460.5" cy="419.5" rx="4.500" ry="3.800"/><ellipse cx="1470.5" cy="421" rx="6.500" ry="4.800"/></g></g>
</g>
<defs><linearGradient id="tg3" x1="0" y1="0" x2="0" y2="1"><stop offset="0" stop-color="#a9bde0"/><stop offset=".22" stop-color="#d9bfd0"/><stop offset=".42" stop-color="#f0b488"/><stop offset=".56" stop-color="#e07c48"/><stop offset=".6" stop-color="#2a1a14"/><stop offset=".66" stop-color="#1a1010"/><stop offset=".7" stop-color="#d88850"/><stop offset=".82" stop-color="#d88850"/><stop offset="1" stop-color="#c4b4b0"/></linearGradient><clipPath id="ctg3"><rect x="1492" y="380" width="50" height="51" rx="3"/></clipPath></defs>
<g clip-path="url(#ctg3)"><rect x="1492" y="380" width="50" height="51" fill="url(#tg3)"/>
<g fill="#3a2414"><ellipse cx="1507" cy="404" rx="4.500" ry="3.500" opacity=".8"/><ellipse cx="1515.5" cy="403.5" rx="4.500" ry="4" opacity=".9"/><ellipse cx="1525.5" cy="402" rx="6.500" ry="5"/><rect x="1506.5" y="406" width="1" height="5"/><rect x="1515" y="406" width="1.200" height="5"/><rect x="1525" y="405" width="1.400" height="6"/>
<rect x="1492" y="410" width="50" height="3.500" fill="#140c0c"/>
<g opacity=".72"><ellipse cx="1507" cy="419" rx="4.500" ry="3.200"/><ellipse cx="1515.5" cy="419.5" rx="4.500" ry="3.800"/><ellipse cx="1525.5" cy="421" rx="6.500" ry="4.800"/></g></g>
</g>
<defs><linearGradient id="tg4" x1="0" y1="0" x2="0" y2="1"><stop offset="0" stop-color="#b4b4b4"/><stop offset=".22" stop-color="#c4c4c4"/><stop offset=".42" stop-color="#c0c0c0"/><stop offset=".56" stop-color="#8a8a8a"/><stop offset=".6" stop-color="#2a1a14"/><stop offset=".66" stop-color="#1a1010"/><stop offset=".7" stop-color="#808080"/><stop offset=".82" stop-color="#808080"/><stop offset="1" stop-color="#9a9a9a"/></linearGradient><clipPath id="ctg4"><rect x="1547" y="380" width="50" height="51" rx="3"/></clipPath></defs>
<g clip-path="url(#ctg4)"><rect x="1547" y="380" width="50" height="51" fill="url(#tg4)"/>
<g fill="#202020"><ellipse cx="1562" cy="404" rx="4.500" ry="3.500" opacity=".8"/><ellipse cx="1570.5" cy="403.5" rx="4.500" ry="4" opacity=".9"/><ellipse cx="1580.5" cy="402" rx="6.500" ry="5"/><rect x="1561.5" y="406" width="1" height="5"/><rect x="1570" y="406" width="1.200" height="5"/><rect x="1580" y="405" width="1.400" height="6"/>
<rect x="1547" y="410" width="50" height="3.500" fill="#140c0c"/>
<g opacity=".72"><ellipse cx="1562" cy="419" rx="4.500" ry="3.200"/><ellipse cx="1570.5" cy="419.5" rx="4.500" ry="3.800"/><ellipse cx="1580.5" cy="421" rx="6.500" ry="4.800"/></g></g>
</g>
<defs><linearGradient id="tg5" x1="0" y1="0" x2="0" y2="1"><stop offset="0" stop-color="#8fb0c0"/><stop offset=".22" stop-color="#e0b090"/><stop offset=".42" stop-color="#f0a060"/><stop offset=".56" stop-color="#e07028"/><stop offset=".6" stop-color="#2a1a14"/><stop offset=".66" stop-color="#1a1010"/><stop offset=".7" stop-color="#d06828"/><stop offset=".82" stop-color="#d06828"/><stop offset="1" stop-color="#8a8060"/></linearGradient><clipPath id="ctg5"><rect x="1382" y="435" width="50" height="51" rx="3"/></clipPath></defs>
<g clip-path="url(#ctg5)"><rect x="1382" y="435" width="50" height="51" fill="url(#tg5)"/>
<g fill="#3a2414"><ellipse cx="1397" cy="459" rx="4.500" ry="3.500" opacity=".8"/><ellipse cx="1405.5" cy="458.5" rx="4.500" ry="4" opacity=".9"/><ellipse cx="1415.5" cy="457" rx="6.500" ry="5"/><rect x="1396.5" y="461" width="1" height="5"/><rect x="1405" y="461" width="1.200" height="5"/><rect x="1415" y="460" width="1.400" height="6"/>
<rect x="1382" y="465" width="50" height="3.500" fill="#140c0c"/>
<g opacity=".72"><ellipse cx="1397" cy="474" rx="4.500" ry="3.200"/><ellipse cx="1405.5" cy="474.5" rx="4.500" ry="3.800"/><ellipse cx="1415.5" cy="476" rx="6.500" ry="4.800"/></g></g>
</g>
<defs><linearGradient id="tg6" x1="0" y1="0" x2="0" y2="1"><stop offset="0" stop-color="#a8c4cc"/><stop offset=".22" stop-color="#f0c890"/><stop offset=".42" stop-color="#f8b058"/><stop offset=".56" stop-color="#e88028"/><stop offset=".6" stop-color="#2a1a14"/><stop offset=".66" stop-color="#1a1010"/><stop offset=".7" stop-color="#e08030"/><stop offset=".82" stop-color="#e08030"/><stop offset="1" stop-color="#c8b888"/></linearGradient><clipPath id="ctg6"><rect x="1437" y="435" width="50" height="51" rx="3"/></clipPath></defs>
<g clip-path="url(#ctg6)"><rect x="1437" y="435" width="50" height="51" fill="url(#tg6)"/>
<g fill="#3a2414"><ellipse cx="1452" cy="459" rx="4.500" ry="3.500" opacity=".8"/><ellipse cx="1460.5" cy="458.5" rx="4.500" ry="4" opacity=".9"/><ellipse cx="1470.5" cy="457" rx="6.500" ry="5"/><rect x="1451.5" y="461" width="1" height="5"/><rect x="1460" y="461" width="1.200" height="5"/><rect x="1470" y="460" width="1.400" height="6"/>
<rect x="1437" y="465" width="50" height="3.500" fill="#140c0c"/>
<g opacity=".72"><ellipse cx="1452" cy="474" rx="4.500" ry="3.200"/><ellipse cx="1460.5" cy="474.5" rx="4.500" ry="3.800"/><ellipse cx="1470.5" cy="476" rx="6.500" ry="4.800"/></g></g>
</g>
<defs><linearGradient id="tg7" x1="0" y1="0" x2="0" y2="1"><stop offset="0" stop-color="#cbbcb4"/><stop offset=".22" stop-color="#e8bc90"/><stop offset=".42" stop-color="#f2a860"/><stop offset=".56" stop-color="#e07830"/><stop offset=".6" stop-color="#2a1a14"/><stop offset=".66" stop-color="#1a1010"/><stop offset=".7" stop-color="#d87838"/><stop offset=".82" stop-color="#d87838"/><stop offset="1" stop-color="#c4b08a"/></linearGradient><clipPath id="ctg7"><rect x="1382" y="530" width="50" height="51" rx="3"/></clipPath></defs>
<g clip-path="url(#ctg7)"><rect x="1382" y="530" width="50" height="51" fill="url(#tg7)"/>
<g fill="#3a2414"><ellipse cx="1397" cy="554" rx="4.500" ry="3.500" opacity=".8"/><ellipse cx="1405.5" cy="553.5" rx="4.500" ry="4" opacity=".9"/><ellipse cx="1415.5" cy="552" rx="6.500" ry="5"/><rect x="1396.5" y="556" width="1" height="5"/><rect x="1405" y="556" width="1.200" height="5"/><rect x="1415" y="555" width="1.400" height="6"/>
<rect x="1382" y="560" width="50" height="3.500" fill="#140c0c"/>
<g opacity=".72"><ellipse cx="1397" cy="569" rx="4.500" ry="3.200"/><ellipse cx="1405.5" cy="569.5" rx="4.500" ry="3.800"/><ellipse cx="1415.5" cy="571" rx="6.500" ry="4.800"/></g></g>
</g>
<defs><linearGradient id="tg8" x1="0" y1="0" x2="0" y2="1"><stop offset="0" stop-color="#cbbcb4"/><stop offset=".22" stop-color="#e8bc90"/><stop offset=".42" stop-color="#f2a860"/><stop offset=".56" stop-color="#e07830"/><stop offset=".6" stop-color="#2a1a14"/><stop offset=".66" stop-color="#1a1010"/><stop offset=".7" stop-color="#d87838"/><stop offset=".82" stop-color="#d87838"/><stop offset="1" stop-color="#c4b08a"/></linearGradient><clipPath id="ctg8"><rect x="1437" y="530" width="50" height="51" rx="3"/></clipPath></defs>
<g clip-path="url(#ctg8)"><rect x="1437" y="530" width="50" height="51" fill="url(#tg8)"/>
<g fill="#3a2414"><ellipse cx="1452" cy="554" rx="4.500" ry="3.500" opacity=".8"/><ellipse cx="1460.5" cy="553.5" rx="4.500" ry="4" opacity=".9"/><ellipse cx="1470.5" cy="552" rx="6.500" ry="5"/><rect x="1451.5" y="556" width="1" height="5"/><rect x="1460" y="556" width="1.200" height="5"/><rect x="1470" y="555" width="1.400" height="6"/>
<rect x="1437" y="560" width="50" height="3.500" fill="#140c0c"/>
<g opacity=".72"><ellipse cx="1452" cy="569" rx="4.500" ry="3.200"/><ellipse cx="1460.5" cy="569.5" rx="4.500" ry="3.800"/><ellipse cx="1470.5" cy="571" rx="6.500" ry="4.800"/></g></g>
</g>
<defs><linearGradient id="tg9" x1="0" y1="0" x2="0" y2="1"><stop offset="0" stop-color="#cbbcb4"/><stop offset=".22" stop-color="#e8bc90"/><stop offset=".42" stop-color="#f2a860"/><stop offset=".56" stop-color="#e07830"/><stop offset=".6" stop-color="#2a1a14"/><stop offset=".66" stop-color="#1a1010"/><stop offset=".7" stop-color="#d87838"/><stop offset=".82" stop-color="#d87838"/><stop offset="1" stop-color="#c4b08a"/></linearGradient><clipPath id="ctg9"><rect x="1492" y="530" width="50" height="51" rx="3"/></clipPath></defs>
<g clip-path="url(#ctg9)"><rect x="1492" y="530" width="50" height="51" fill="url(#tg9)"/>
<g fill="#3a2414"><ellipse cx="1507" cy="554" rx="4.500" ry="3.500" opacity=".8"/><ellipse cx="1515.5" cy="553.5" rx="4.500" ry="4" opacity=".9"/><ellipse cx="1525.5" cy="552" rx="6.500" ry="5"/><rect x="1506.5" y="556" width="1" height="5"/><rect x="1515" y="556" width="1.200" height="5"/><rect x="1525" y="555" width="1.400" height="6"/>
<rect x="1492" y="560" width="50" height="3.500" fill="#140c0c"/>
<g opacity=".72"><ellipse cx="1507" cy="569" rx="4.500" ry="3.200"/><ellipse cx="1515.5" cy="569.5" rx="4.500" ry="3.800"/><ellipse cx="1525.5" cy="571" rx="6.500" ry="4.800"/></g></g>
</g>
<defs><linearGradient id="tg10" x1="0" y1="0" x2="0" y2="1"><stop offset="0" stop-color="#cbbcb4"/><stop offset=".22" stop-color="#e8bc90"/><stop offset=".42" stop-color="#f2a860"/><stop offset=".56" stop-color="#e07830"/><stop offset=".6" stop-color="#2a1a14"/><stop offset=".66" stop-color="#1a1010"/><stop offset=".7" stop-color="#d87838"/><stop offset=".82" stop-color="#d87838"/><stop offset="1" stop-color="#c4b08a"/></linearGradient><clipPath id="ctg10"><rect x="1547" y="530" width="50" height="51" rx="3"/></clipPath></defs>
<g clip-path="url(#ctg10)"><rect x="1547" y="530" width="50" height="51" fill="url(#tg10)"/>
<g fill="#3a2414"><ellipse cx="1562" cy="554" rx="4.500" ry="3.500" opacity=".8"/><ellipse cx="1570.5" cy="553.5" rx="4.500" ry="4" opacity=".9"/><ellipse cx="1580.5" cy="552" rx="6.500" ry="5"/><rect x="1561.5" y="556" width="1" height="5"/><rect x="1570" y="556" width="1.200" height="5"/><rect x="1580" y="555" width="1.400" height="6"/>
<rect x="1547" y="560" width="50" height="3.500" fill="#140c0c"/>
<g opacity=".72"><ellipse cx="1562" cy="569" rx="4.500" ry="3.200"/><ellipse cx="1570.5" cy="569.5" rx="4.500" ry="3.800"/><ellipse cx="1580.5" cy="571" rx="6.500" ry="4.800"/></g></g>
</g>
<rect x="1382" y="585.500" width="50" height="8" rx="3" fill="#b9b9b9"/>
<path d="M1393.500 312h-14.500M1385 306l-6 6 6 6" fill="none" stroke="#eee" stroke-width="1.500"/>
<g fill="#f0f0f0"><rect x="1602" y="305.500" width="3" height="3"/><rect x="1602" y="310.800" width="3" height="3"/><rect x="1602" y="316" width="3" height="3"/><rect x="1607" y="305.800" width="10" height="2.400"/><rect x="1607" y="311" width="10" height="2.400"/><rect x="1607" y="316.300" width="10" height="2.400"/></g>
<path d="M1381.500 355.500l4.300 4.300 4.300-4.300M1381.500 505.500l4.300 4.300 4.300-4.300" fill="none" stroke="#eee" stroke-width="1.600"/>
<rect x="1635" y="288" width="10.500" height="111" rx="5" fill="#5c5c5c"/>
</svg>
<div class="txt" style="left:1399px;top:304px;font-size:12.500px;line-height:16px;color:#f2f2f2;z-index:3">Back to view all</div>
<div class="txt" style="left:1399px;top:350px;font-size:12.500px;line-height:16px;color:#f2f2f2;z-index:3">Portraits</div>
<div class="txt" style="left:1399px;top:500px;font-size:12.500px;line-height:16px;color:#f2f2f2;z-index:3;letter-spacing:-.2px">Landscape</div>
<svg class="abs" style="left:1367px;top:624px;z-index:3" width="283" height="306" viewBox="1367 624 283 306">
<rect x="1376.500" y="637.500" width="96" height="19" fill="#4a4a4a" stroke="#606060" stroke-width="1"/>
<circle cx="1386.500" cy="646" r="3.600" fill="none" stroke="#9a9a9a" stroke-width="1.500"/><path d="M1389 649l3.500 3.500" stroke="#9a9a9a" stroke-width="1.700"/>
<rect x="1486.500" y="641.500" width="13" height="11" fill="none" stroke="#9a9a9a" stroke-width="1.300"/><path d="M1488.500 650.500l3-4 2 2.500 1.500-1.500 2.500 3z" fill="#9a9a9a"/>
<circle cx="1520" cy="647" r="5.800" fill="none" stroke="#9a9a9a" stroke-width="1.400"/><path d="M1515.900 651.100a5.800 5.800 0 0 1 8.200-8.200z" fill="#9a9a9a"/>
<path d="M1575 642.500h-6M1575 652h-6" stroke="none"/>
<rect x="1570" y="642" width="10.500" height="10.500" fill="none" stroke="#9a9a9a" stroke-width="1.400"/><g fill="#9a9a9a"><rect x="1568" y="640" width="3.600" height="3.600"/><rect x="1579" y="640" width="3.600" height="3.600"/><rect x="1568" y="651" width="3.600" height="3.600"/><rect x="1579" y="651" width="3.600" height="3.600"/></g>
<path d="M1601 640.500h5l3.500 3.500v9.500h-8.500z" fill="none" stroke="#9a9a9a" stroke-width="1.300"/><rect x="1598" y="646.500" width="6.500" height="7.500" fill="#9a9a9a"/>
<circle cx="1628.500" cy="642" r="3.800" fill="#8a8a8a"/>
<rect x="1374.500" y="669.500" width="146" height="19" fill="#505050" stroke="#5c5c5c" stroke-width="1"/>
<path d="M1509 677l3.500 3.500 3.500-3.500" fill="none" stroke="#7a7a7a" stroke-width="1.200"/>
<rect x="1573.500" y="669.500" width="42" height="19" fill="#505050" stroke="#5c5c5c" stroke-width="1"/><rect x="1615.500" y="669.500" width="17" height="19" fill="#505050" stroke="#5c5c5c" stroke-width="1"/>
<rect x="1573.500" y="701.500" width="42" height="19" fill="#505050" stroke="#5c5c5c" stroke-width="1"/><rect x="1615.500" y="701.500" width="17" height="19" fill="#505050" stroke="#5c5c5c" stroke-width="1"/>
<path d="M1621 677.500l3 3 3-3M1621 709.500l3 3 3-3" fill="none" stroke="#6c6c6c" stroke-width="1.100"/>
<rect x="1411" y="705.500" width="12" height="12" fill="none" stroke="#9a9a9a" stroke-width="1.200"/><g fill="#9a9a9a"><rect x="1411" y="705.500" width="4" height="4"/><rect x="1419" y="705.500" width="4" height="4"/><rect x="1415" y="709.500" width="4" height="4"/><rect x="1411" y="713.500" width="4" height="4"/><rect x="1419" y="713.500" width="4" height="4"/></g>
<path d="M1450 704l-7 8 1.500 1.500z" fill="#9a9a9a"/><path d="M1442 713c-2 0-3 1-3.300 2.500-.2 1-.7 1.500-1.500 2 2.300.6 5 .2 6-1.800.4-.9-.2-2-1.200-2.700z" fill="#9a9a9a"/>
<path d="M1467 704.500v14M1460 711.500h14" stroke="#9a9a9a" stroke-width="1.300"/><path d="M1467 703l-2.500 3h5zM1467 720l-2.500-3h5zM1458.500 711.500l3-2.500v5zM1475.500 711.500l-3-2.500v5z" fill="#9a9a9a"/>
<path d="M1489 703.500v12h12M1486 707h11.500v11.500" fill="none" stroke="#9a9a9a" stroke-width="1.400"/><path d="M1497 704l3 3" stroke="#9a9a9a" stroke-width="1.200" stroke-dasharray="1.500 1"/>
<rect x="1512.500" y="710" width="11" height="8.500" rx="1" fill="#9a9a9a"/><path d="M1515 710v-2.500a3 3 0 0 1 6 0v2.500" fill="none" stroke="#9a9a9a" stroke-width="1.500"/>
<rect x="1367" y="624" width="283" height="3" fill="#474747"/><rect x="1374" y="662.500" width="259" height="1" fill="#464646"/><rect x="1374" y="694.500" width="259" height="1" fill="#464646"/><rect x="1374" y="727" width="259" height="1" fill="#474747"/><rect x="1633" y="627" width="1" height="101" fill="#474747"/><rect x="1403" y="730" width="229" height="46" fill="#6b6b6b"/>
<rect x="1367" y="776" width="283" height="1" fill="#474747"/>
<path d="M1378.500 753.500c2-3.300 4.500-4.800 7-4.800s5 1.500 7 4.800c-2 3.300-4.500 4.800-7 4.800s-5-1.500-7-4.800z" fill="#f4f4f4"/><circle cx="1385.500" cy="753.500" r="2.700" fill="#535353"/><circle cx="1385.500" cy="753.500" r="1.200" fill="#f4f4f4"/>
<rect x="1406.500" y="734.500" width="31" height="37" fill="#1e1f21" stroke="#484848" stroke-width="1"/>
<path d="M1408 736h28v9l-2-1-1 12-2 3-1-10-2-8-2 10-1 8-4-1-5-5-3-4-3-7-2-1z" fill="#dfe2e2"/><path d="M1426 756l1.500-14 1.500 14v4h-3z" fill="#c8705c"/>
<rect x="1600.500" y="751.500" width="11" height="8.500" rx="1" fill="none" stroke="#e8e8e8" stroke-width="1.400"/><path d="M1603 751.500v-2.500a3 3 0 0 1 6 0v2.500" fill="none" stroke="#e8e8e8" stroke-width="1.400"/><rect x="1605" y="754.500" width="2" height="2.500" fill="#e8e8e8"/>
<g fill="none" stroke="#8c8c8c" stroke-width="1.500"><rect x="1416.500" y="913.500" width="9" height="6.500" rx="3.200"/><rect x="1422.500" y="913.500" width="9" height="6.500" rx="3.200"/></g>
<rect x="1480.500" y="911.500" width="14" height="10.500" rx="1" fill="#e0e0e0"/><circle cx="1487.500" cy="916.800" r="3.100" fill="#535353"/>
<circle cx="1518" cy="916.500" r="6" fill="none" stroke="#e0e0e0" stroke-width="1.500"/><path d="M1513.800 920.700a6 6 0 0 1 8.400-8.400z" fill="#e0e0e0"/><path d="M1524 923.500l2 2 2-2z" fill="#e0e0e0"/>
<path d="M1541 911h5.500l1.500 2h7.500v9.500H1541z" fill="#e0e0e0"/>
<rect x="1572.500" y="910.500" width="12.500" height="12.500" fill="none" stroke="#e0e0e0" stroke-width="1.500"/><path d="M1578.800 913.500v6.500M1575.500 916.800h6.500" stroke="#e0e0e0" stroke-width="1.500"/>
<path d="M1605 912.500h11M1608.500 912v-1.800h4v1.800M1606 913l.8 10.500h7.400l.8-10.500" fill="none" stroke="#8c8c8c" stroke-width="1.300"/><path d="M1609 915v6.500M1612 915v6.500" stroke="#8c8c8c" stroke-width="1"/>
</svg>
<div class="txt" style="left:1396px;top:639px;font-size:12.5px;line-height:16px;color:#8c8c8c;z-index:3;">Kind</div>
<div class="txt" style="left:1381px;top:671px;font-size:12.5px;line-height:16px;color:#8c8c8c;z-index:3;">Normal</div>
<div class="txt" style="left:1526px;top:671px;font-size:12.5px;line-height:16px;color:#8c8c8c;z-index:3;">Opacity:</div>
<div class="txt" style="left:1577px;top:671px;font-size:12.5px;line-height:16px;color:#6e6e6e;z-index:3;">100%</div>
<div class="txt" style="left:1374px;top:703.5px;font-size:12.5px;line-height:16px;color:#8c8c8c;z-index:3;">Lock:</div>
<div class="txt" style="left:1553px;top:703.5px;font-size:12.5px;line-height:16px;color:#7c7c7c;z-index:3;">Fill:</div>
<div class="txt" style="left:1577px;top:703.5px;font-size:12.5px;line-height:16px;color:#6e6e6e;z-index:3;">100%</div>
<div class="txt" style="left:1446px;top:745px;font-size:12.5px;line-height:16px;color:#f4f4f4;z-index:3;">Background</div>
<div class="txt" style="left:1448px;top:909px;font-size:15.5px;line-height:16px;color:#8c8c8c;z-index:3;font-family:'Liberation Serif',serif;font-style:italic;">fx</div>
<div class="txt" style="left:1540.5px;top:639px;font-size:17px;line-height:16px;color:#9a9a9a;z-index:3;font-family:'Liberation Serif',serif;">T</div>
<div id="toolbar">
<div class="abs" style="left:0;top:0;width:46px;height:14px;background:#424242"></div>
<div class="txt" style="left:5px;top:-1px;font-size:14px;line-height:13px;color:#ddd;letter-spacing:-1.500px;font-weight:bold">››</div>
<div class="abs" style="left:5px;top:94px;width:35px;height:27px;background:#2c2c2c;border-radius:2px"></div>
<svg class="abs" style="left:0;top:0" width="46" height="837" viewBox="0 93 46 837">
<g transform="translate(22 141)"><path d="M0-8.500v17M-8.500 0h17" stroke="#dcdcdc" stroke-width="1.600" fill="none"/><path d="M0-9.800l-3 3.600h6zM0 9.800l-3-3.600h6zM-9.800 0l3.600-3v6zM9.800 0l-3.600-3v6z" fill="#dcdcdc"/></g>
<path d="M36.500 149v3h-3z" fill="#b9b9b9"/>
<g transform="translate(22 170)"><rect x="-8.500" y="-7" width="17" height="14" fill="none" stroke="#dcdcdc" stroke-width="1.700" stroke-dasharray="3.600 2.200"/></g>
<path d="M36.500 178v3h-3z" fill="#b9b9b9"/>
<g transform="translate(22 200)"><ellipse cx="1" cy="-2" rx="8.500" ry="5.800" fill="none" stroke="#dcdcdc" stroke-width="1.600" transform="rotate(-12)"/><circle cx="-5.500" cy="4" r="2" fill="none" stroke="#dcdcdc" stroke-width="1.300"/><path d="M-5 6c0 2 1.500 2 2.500 3.500" fill="none" stroke="#dcdcdc" stroke-width="1.300"/></g>
<path d="M36.500 208v3h-3z" fill="#b9b9b9"/>
<g transform="translate(22 230)"><path d="M-8 8.500L3-2.500" stroke="#dcdcdc" stroke-width="4" stroke-linecap="round"/><path d="M-7 7.500L1-0.500" stroke="#535353" stroke-width="1.300" stroke-linecap="round"/><path d="M6.500-9.500l.9 2.300 2.300.9-2.300.9-.9 2.300-.9-2.300-2.300-.9 2.300-.9zM0-8.500l.6 1.500 1.500.6-1.500.6-.6 1.500-.6-1.500-1.500-.6 1.500-.6zM7.500.5l.6 1.500 1.500.6-1.500.6-.6 1.500-.6-1.500-1.500-.6 1.500-.6z" fill="#dcdcdc"/></g>
<path d="M36.500 238v3h-3z" fill="#b9b9b9"/>
<g transform="translate(22 259)"><path d="M-4.500-10v14.500H10M-10-4.500H4.500V10" fill="none" stroke="#dcdcdc" stroke-width="2.200"/></g>
<path d="M36.500 267v3h-3z" fill="#b9b9b9"/>
<g transform="translate(22 290)"><rect x="-8" y="-7.500" width="16" height="15" fill="none" stroke="#dcdcdc" stroke-width="1.700"/><path d="M-8-7.500l16 15M8-7.500l-16 15" stroke="#dcdcdc" stroke-width="1.400"/></g>
<g transform="translate(22 320)"><path d="M-8.500 8.500l1-3.500 8-8 2.500 2.500-8 8z" fill="none" stroke="#dcdcdc" stroke-width="1.500"/><path d="M0-5l5 5M1.500-3.500l3.500-3.500a2.300 2.300 0 0 1 3.300 3.300L4.800-.2" stroke="#dcdcdc" stroke-width="2.600" stroke-linecap="round" fill="none"/></g>
<path d="M36.500 328v3h-3z" fill="#b9b9b9"/>
<g transform="translate(22 349)"><rect x="-4.200" y="-9" width="8.400" height="18" rx="4.200" fill="#dcdcdc" transform="rotate(45)"/><circle cx="0" cy="0" r="1" fill="#535353"/><circle cx="-2.200" cy="2.200" r=".8" fill="#535353"/><circle cx="2.200" cy="-2.200" r=".8" fill="#535353"/><path d="M-8.500 2a9 9 0 0 1 5-10" fill="none" stroke="#dcdcdc" stroke-width="1.300" stroke-dasharray="2 1.600"/></g>
<path d="M36.500 357v3h-3z" fill="#b9b9b9"/>
<g transform="translate(22 379)"><path d="M9-9L-1 1.500l1.500 1.500z" fill="#dcdcdc"/><path d="M-2 2.500c-2.500-.5-4 1-4.500 3-.3 1.500-1.200 2.500-2.500 3 3 1 7 .5 8.500-2.500.6-1.300-.2-2.800-1.500-3.500z" fill="#dcdcdc"/></g>
<path d="M36.500 387v3h-3z" fill="#b9b9b9"/>
<g transform="translate(22 409)"><path d="M-3-5.500a3 3 0 1 1 6 0c0 2-1.300 3-1.300 5.500H6.500v3.500h-13V0h5.200c0-2.500-1.700-3.500-1.700-5.500z" fill="#dcdcdc"/><rect x="-8" y="6" width="16" height="2" fill="#dcdcdc"/></g>
<path d="M36.500 417v3h-3z" fill="#b9b9b9"/>
<g transform="translate(22 439)"><path d="M9-9L1 1l1.500 1.500z" fill="#dcdcdc"/><path d="M0 2c-2-.4-3.300.8-3.700 2.500-.3 1.200-1 2-2 2.500 2.500.8 5.800.4 7-2 .5-1.100-.2-2.400-1.300-3z" fill="#dcdcdc"/><path d="M-8.500-1a7 7 0 0 1 9-7.500" fill="none" stroke="#dcdcdc" stroke-width="1.500"/><path d="M-10.500-2.500l2 3.500 3-2.500z" fill="#dcdcdc"/></g>
<path d="M36.500 447v3h-3z" fill="#b9b9b9"/>
<g transform="translate(22 468)"><path d="M2-8.500l7 7L0 7.500h-5l-4-4z" fill="#dcdcdc"/><path d="M-9 3.500l4 4h5l3-3-6.500-6.500z" fill="#535353" stroke="#dcdcdc" stroke-width="1.400"/><path d="M-6 8.500h15" stroke="#dcdcdc" stroke-width="1.300"/></g>
<path d="M36.500 476v3h-3z" fill="#b9b9b9"/>
<g transform="translate(22 528)"><path d="M0-9c3 4.500 6 7.500 6 11.500a6 6 0 0 1-12 0C-6-1.500-3-4.500 0-9z" fill="#dcdcdc"/></g>
<path d="M36.500 536v3h-3z" fill="#b9b9b9"/>
<g transform="translate(22 558)"><path d="M6-9.500L-2 1l1.500 1.500z" fill="#dcdcdc"/><path d="M-3 2c-2-.4-3.300.8-3.700 2.500-.3 1.200-1 2-2 2.500 2.500.8 5.800.4 7-2 .5-1.100-.2-2.400-1.300-3z" fill="#dcdcdc"/><circle cx="5.500" cy="4.500" r="4" fill="none" stroke="#dcdcdc" stroke-width="1.500"/><path d="M2.500 7l6-5" stroke="#dcdcdc" stroke-width="1.300"/></g>
<path d="M36.500 566v3h-3z" fill="#b9b9b9"/>
<g transform="translate(22 588)"><circle cx="3" cy="-3" r="5.800" fill="#dcdcdc"/><path d="M-1.500 1.500L-8.500 8.500" stroke="#dcdcdc" stroke-width="2.600" stroke-linecap="round"/></g>
<path d="M36.500 596v3h-3z" fill="#b9b9b9"/>
<g transform="translate(22 618)"><path d="M-9 9l2-9 7-6 6 6-6 7z" fill="none" stroke="#dcdcdc" stroke-width="1.600" stroke-linejoin="round"/><path d="M-9 9l6.500-6.500" stroke="#dcdcdc" stroke-width="1.300"/><circle cx="-1.500" cy="1.500" r="1.600" fill="#dcdcdc"/><path d="M1.500-8.500l7 7" stroke="#dcdcdc" stroke-width="3"/></g>
<path d="M36.500 626v3h-3z" fill="#b9b9b9"/>
<g transform="translate(22 677)"><path d="M-5-9.500v17l4-4 3 6.500 3-1.500-3-6 5.500-.5z" fill="#2a2a2a" stroke="#dcdcdc" stroke-width="1.600" stroke-linejoin="round"/></g>
<path d="M36.500 685v3h-3z" fill="#b9b9b9"/>
<g transform="translate(22 707)"><rect x="-9" y="-7" width="18" height="14" fill="#6e6e6e" stroke="#dcdcdc" stroke-width="1.600"/></g>
<path d="M36.500 715v3h-3z" fill="#b9b9b9"/>
<g transform="translate(22 736)"><path d="M-5.500 9c-2-2.500-4-6-4.500-8-.3-1.300 1.500-2 2.300-.6l1.700 3V-6c0-1.700 2.200-1.700 2.200 0v4.500V-8c0-1.700 2.300-1.700 2.300 0v6.500V-7c0-1.700 2.300-1.700 2.300 0v6V-4.500c0-1.600 2.200-1.600 2.200 0V3c0 3-1 4.500-2 6z" fill="#dcdcdc"/></g>
<path d="M36.500 744v3h-3z" fill="#b9b9b9"/>
<g transform="translate(22 766)"><circle cx="-2" cy="-2" r="6.300" fill="none" stroke="#dcdcdc" stroke-width="1.800"/><path d="M2.800 2.800l6 6" stroke="#dcdcdc" stroke-width="2.300" stroke-linecap="round"/></g>
<g transform="translate(22 796)"><circle cx="-6.500" cy="0" r="1.900" fill="#dcdcdc"/><circle cx="0" cy="0" r="1.900" fill="#dcdcdc"/><circle cx="6.500" cy="0" r="1.900" fill="#dcdcdc"/></g>
<defs><linearGradient id="gtool" x1="0" y1="0" x2="1" y2="0"><stop offset="0" stop-color="#2a2a2a"/><stop offset="1" stop-color="#f0f0f0"/></linearGradient></defs>
<rect x="13.500" y="490.500" width="17" height="15" fill="url(#gtool)" stroke="#dcdcdc" stroke-width="1.300"/>
<path d="M36.500 506v3h-3z" fill="#b9b9b9"/><path d="M36.500 804v3h-3z" fill="#b9b9b9"/>
<rect x="7.500" y="820.500" width="7" height="7" fill="#fff" stroke="#111" stroke-width="1"/><rect x="4.500" y="817.500" width="7" height="7" fill="#000" stroke="#eee" stroke-width="1"/>
<path d="M27.500 820.500h4.500a3 3 0 0 1 3 3v3" fill="none" stroke="#dcdcdc" stroke-width="1.700"/><path d="M29 816.500l-4 4 4 4zM31 825l4 4.500 4-4.500z" fill="#dcdcdc"/>
<rect x="17" y="848" width="21.500" height="21" fill="#e4e4e4" stroke="#f4f4f4" stroke-width="1"/><rect x="16.500" y="847.500" width="22.500" height="22" fill="none" stroke="#333" stroke-width=".6"/>
<rect x="5.500" y="837" width="21" height="23" fill="#4b5f94" stroke="#e8e8e8" stroke-width="1.600"/>
<rect x="12.500" y="882.500" width="19" height="14" fill="none" stroke="#dcdcdc" stroke-width="1.400"/><circle cx="22" cy="889.500" r="4" fill="none" stroke="#dcdcdc" stroke-width="1.200" stroke-dasharray="1.500 1.300"/>
<rect x="17.500" y="912.500" width="14" height="10" fill="#6e6e6e" stroke="#dcdcdc" stroke-width="1.500"/><rect x="11.500" y="916.500" width="14" height="10" fill="#535353" stroke="#dcdcdc" stroke-width="1.500"/>
</svg>
<div class="txt" style="left:12px;top:541px;width:20px;text-align:center;font-family:'Liberation Serif',serif;font-size:25px;line-height:26px;color:#dcdcdc;font-weight:bold">T</div>
</div>
<div id="dd">
<div class="txt" style="left:16px;top:9.5px;font-size:15.500px;line-height:19px;color:#1e1e1e">About Photoshop...</div>
<div class="txt" style="left:16px;top:34.5px;font-size:15.500px;line-height:19px;color:#1e1e1e">About Plugins</div>
<svg class="abs" style="left:208px;top:38px" width="10" height="12" viewBox="0 0 10 12"><path d="M2.500 1.500l5 4.500-5 4.500" fill="none" stroke="#2a2a2a" stroke-width="1.800"/></svg>
<div class="txt" style="left:16px;top:59.5px;font-size:15.500px;line-height:19px;color:#1e1e1e">Settings...</div>
<svg class="abs" style="left:208px;top:63px" width="10" height="12" viewBox="0 0 10 12"><path d="M2.500 1.500l5 4.500-5 4.500" fill="none" stroke="#2a2a2a" stroke-width="1.800"/></svg>
<div class="txt" style="left:16px;top:97.5px;font-size:15.500px;line-height:19px;color:#1e1e1e">Services</div>
<svg class="abs" style="left:208px;top:101px" width="10" height="12" viewBox="0 0 10 12"><path d="M2.500 1.500l5 4.500-5 4.500" fill="none" stroke="#2a2a2a" stroke-width="1.800"/></svg>
<div class="txt" style="left:16px;top:135.5px;font-size:15.500px;line-height:19px;color:#1e1e1e">Hide Photoshop</div>
<div class="txt sc" style="right:14px;top:135.5px;font-size:15px;line-height:19px;color:#a3a3a1;letter-spacing:1.500px">^⌘H</div>
<div class="txt" style="left:16px;top:160.5px;font-size:15.500px;line-height:19px;color:#1e1e1e">Hide Others</div>
<div class="txt sc" style="right:14px;top:160.5px;font-size:15px;line-height:19px;color:#a3a3a1;letter-spacing:1.500px">⌥⌘H</div>
<div class="txt" style="left:16px;top:185.5px;font-size:15.500px;line-height:19px;color:#a9a9a7">Show All</div>
<div class="txt" style="left:16px;top:223.5px;font-size:15.500px;line-height:19px;color:#1e1e1e">Quit Photoshop</div>
<div class="txt sc" style="right:14px;top:223.5px;font-size:15px;line-height:19px;color:#a3a3a1;letter-spacing:1.500px">⌘Q</div>
<div class="abs" style="left:16px;top:88px;width:202px;height:1px;background:#b9b9b7"></div>
<div class="abs" style="left:16px;top:126px;width:202px;height:1px;background:#b9b9b7"></div>
<div class="abs" style="left:16px;top:214px;width:202px;height:1px;background:#b9b9b7"></div>
</div>
</body>
</html>
